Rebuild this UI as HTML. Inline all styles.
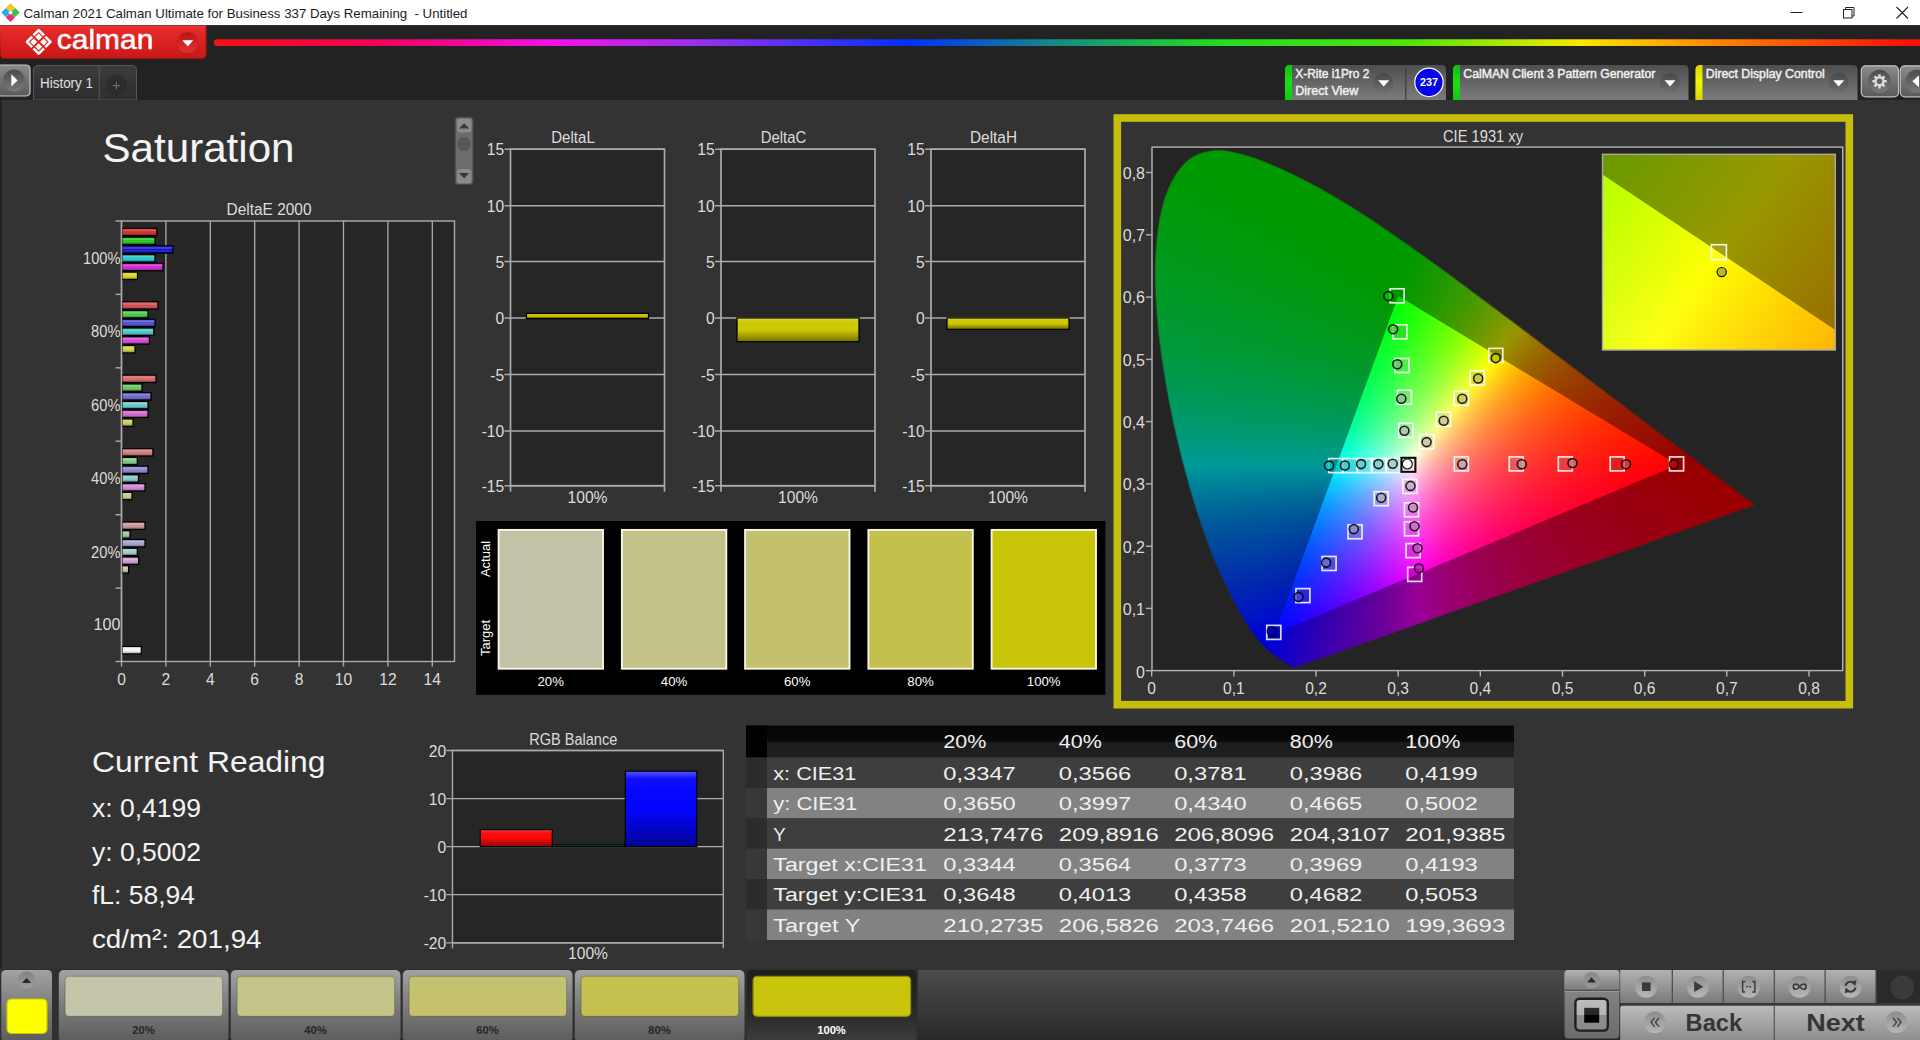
<!DOCTYPE html>
<html><head><meta charset="utf-8"><title>Calman</title><style>html,body{margin:0;padding:0;background:#333;width:1920px;height:1040px;overflow:hidden}
svg{position:absolute;left:0;top:0}
text{font-family:"Liberation Sans",sans-serif}
#cie i,#inset i{display:block;height:2px}
</style></head><body>
<svg width="1920" height="1040" viewBox="0 0 1920 1040"><defs><linearGradient id="gRed" x1="0" y1="0" x2="0" y2="1"><stop offset="0" stop-color="#f04040"/><stop offset="0.08" stop-color="#e62c2c"/><stop offset="0.5" stop-color="#dc2020"/><stop offset="1" stop-color="#c81818"/></linearGradient><linearGradient id="gRedC" x1="0" y1="0" x2="0" y2="1"><stop offset="0" stop-color="#b81414"/><stop offset="1" stop-color="#e03434"/></linearGradient><linearGradient id="gRainbow" x1="0" y1="0" x2="1" y2="0"><stop offset="0" stop-color="#f41414"/><stop offset="0.096" stop-color="#f00058"/><stop offset="0.201" stop-color="#f410f0"/><stop offset="0.285" stop-color="#9830f0"/><stop offset="0.405" stop-color="#0030ff"/><stop offset="0.489" stop-color="#148888"/><stop offset="0.583" stop-color="#20dc20"/><stop offset="0.698" stop-color="#50e608"/><stop offset="0.798" stop-color="#fae600"/><stop offset="0.881" stop-color="#ff8200"/><stop offset="0.986" stop-color="#f81408"/><stop offset="1" stop-color="#f81008"/></linearGradient><linearGradient id="gBtn" x1="0" y1="0" x2="0" y2="1"><stop offset="0" stop-color="#8a8a8a"/><stop offset="1" stop-color="#5a5a5a"/></linearGradient><linearGradient id="gBtnC" x1="0" y1="0" x2="0" y2="1"><stop offset="0" stop-color="#4c4c4c"/><stop offset="1" stop-color="#7a7a7a"/></linearGradient><linearGradient id="gTab" x1="0" y1="0" x2="0" y2="1"><stop offset="0" stop-color="#3c3c3c"/><stop offset="1" stop-color="#2e2e2e"/></linearGradient><linearGradient id="gWid" x1="0" y1="0" x2="0" y2="1"><stop offset="0" stop-color="#4e4e4e"/><stop offset="1" stop-color="#7c7c7c"/></linearGradient><linearGradient id="gWidC" x1="0" y1="0" x2="0" y2="1"><stop offset="0" stop-color="#484848"/><stop offset="1" stop-color="#6e6e6e"/></linearGradient><linearGradient id="gGreen" x1="0" y1="0" x2="0" y2="1"><stop offset="0" stop-color="#10c010"/><stop offset="0.5" stop-color="#18e018"/><stop offset="1" stop-color="#10c810"/></linearGradient><linearGradient id="gYel" x1="0" y1="0" x2="0" y2="1"><stop offset="0" stop-color="#d8d800"/><stop offset="0.5" stop-color="#f4f400"/><stop offset="1" stop-color="#d8d800"/></linearGradient><linearGradient id="gGlossH" x1="0" y1="0" x2="0" y2="1"><stop offset="0" stop-color="#fff" stop-opacity="0.05"/><stop offset="0.25" stop-color="#fff" stop-opacity="0.25"/><stop offset="0.5" stop-color="#fff" stop-opacity="0.0"/><stop offset="1" stop-color="#000" stop-opacity="0.38"/></linearGradient><linearGradient id="gGlossV" x1="0" y1="0" x2="0" y2="1"><stop offset="0" stop-color="#fff" stop-opacity="0.3"/><stop offset="0.1" stop-color="#fff" stop-opacity="0.04"/><stop offset="0.5" stop-color="#000" stop-opacity="0.0"/><stop offset="1" stop-color="#000" stop-opacity="0.42"/></linearGradient><linearGradient id="gHdr" x1="0" y1="0" x2="0" y2="1"><stop offset="0" stop-color="#050505"/><stop offset="0.5" stop-color="#0a0a0a"/><stop offset="0.52" stop-color="#1c1c1c"/><stop offset="1" stop-color="#202020"/></linearGradient><linearGradient id="gSw" x1="0" y1="0" x2="0" y2="1"><stop offset="0" stop-color="#a2a2a2"/><stop offset="0.5" stop-color="#7c7c7c"/><stop offset="1" stop-color="#5c5c5c"/></linearGradient><linearGradient id="gSwSel" x1="0" y1="0" x2="0" y2="1"><stop offset="0" stop-color="#1f1f1f"/><stop offset="0.6" stop-color="#2a2a2a"/><stop offset="1" stop-color="#3e3e3e"/></linearGradient><linearGradient id="gCtl" x1="0" y1="0" x2="0" y2="1"><stop offset="0" stop-color="#b2b2b2"/><stop offset="1" stop-color="#7a7a7a"/></linearGradient><linearGradient id="gCtl2" x1="0" y1="0" x2="0" y2="1"><stop offset="0" stop-color="#bcbcbc"/><stop offset="1" stop-color="#868686"/></linearGradient><linearGradient id="gCtlC" x1="0" y1="0" x2="0" y2="1"><stop offset="0" stop-color="#8c8c8c"/><stop offset="1" stop-color="#b8b8b8"/></linearGradient><linearGradient id="gBar" x1="0" y1="0" x2="1" y2="0"><stop offset="0" stop-color="#3a3a3a"/><stop offset="1" stop-color="#4a4a4a"/></linearGradient><linearGradient id="gBarV" x1="0" y1="0" x2="0" y2="1"><stop offset="0" stop-color="#4b4b4b"/><stop offset="0.5" stop-color="#3a3a3a"/><stop offset="1" stop-color="#292929"/></linearGradient><linearGradient id="gIco" x1="0" y1="0" x2="0" y2="1"><stop offset="0" stop-color="#bcbcbc"/><stop offset="0.5" stop-color="#b4b4b4"/><stop offset="0.5" stop-color="#8e8e8e"/><stop offset="1" stop-color="#8a8a8a"/></linearGradient><linearGradient id="gIco2" x1="0" y1="0" x2="0" y2="1"><stop offset="0" stop-color="#2c2c2c"/><stop offset="0.5" stop-color="#262626"/><stop offset="0.5" stop-color="#000"/><stop offset="1" stop-color="#000"/></linearGradient><linearGradient id="gPanLo" x1="0" y1="0" x2="0" y2="1"><stop offset="0" stop-color="#8e8e8e"/><stop offset="1" stop-color="#6a6a6a"/></linearGradient><linearGradient id="gUpC" x1="0" y1="0" x2="0" y2="1"><stop offset="0" stop-color="#787878"/><stop offset="1" stop-color="#a4a4a4"/></linearGradient></defs>
<rect x="0.0" y="0.0" width="1920.0" height="25.3" fill="#fff"/>
<rect x="0.0" y="25.3" width="1920.0" height="1.2" fill="#161616"/>
<path d="M10.5 3.2 L15.1 7.8 L10.5 12.4 L5.9 7.8Z" fill="#f7c325"/>
<path d="M5.9 8.0 L10.5 12.6 L5.9 17.2 L1.3 12.6Z" fill="#2ea7e6"/>
<path d="M15.1 8.0 L19.7 12.6 L15.1 17.2 L10.5 12.6Z" fill="#33c24a"/>
<path d="M10.5 12.8 L15.1 17.4 L10.5 22.0 L5.9 17.4Z" fill="#e8316e"/>
<path d="M10.5 10.4 L12.7 12.6 L10.5 14.8 L8.3 12.6Z" fill="#fff"/>
<text x="23.5" y="17.7" font-size="12.4" fill="#1c1c1c" textLength="444.0" lengthAdjust="spacingAndGlyphs" xml:space="preserve" style="white-space:pre">Calman 2021 Calman Ultimate for Business 337 Days Remaining  - Untitled</text>
<line x1="1790.5" y1="12.5" x2="1802.5" y2="12.5" stroke="#222" stroke-width="1.0"/>
<rect x="1843.5" y="9.5" width="8.5" height="8.5" fill="#fff" stroke="#222" stroke-width="1.0"/>
<path d="M1845.5 9.5 V7.5 H1854 V16 H1852" fill="none" stroke="#222" stroke-width="1.0"/>
<path d="M1896.5 7 L1908 18.5 M1908 7 L1896.5 18.5" fill="none" stroke="#222" stroke-width="1.1"/>
<rect x="0.0" y="26.5" width="1920.0" height="73.5" fill="#222"/>
<path d="M0 25.4 H206.3 V54 Q206.3 58.6 201.5 58.6 H4.5 Q0.3 58.6 0.3 54Z" fill="url(#gRed)"/>
<path d="M206 26 V54 Q206 58.3 201.5 58.3 H4.5 Q0.5 58.3 0.5 54" fill="none" stroke="#a81212" stroke-width="0.8"/>
<path d="M38.70 33.50 l3.50 3.50 l-3.50 3.50 l-3.50 -3.50z M33.80 38.40 l3.50 3.50 l-3.50 3.50 l-3.50 -3.50z M43.60 38.40 l3.50 3.50 l-3.50 3.50 l-3.50 -3.50z M38.70 43.30 l3.50 3.50 l-3.50 3.50 l-3.50 -3.50z" fill="#fff"/>
<path d="M33.40 35.40 L38.70 30.10 L44.00 35.40 M33.40 48.40 L38.70 53.70 L44.00 48.40 M32.20 36.60 L26.90 41.90 L32.20 47.20 M45.20 36.60 L50.50 41.90 L45.20 47.20" fill="none" stroke="#fff" stroke-width="2.6" stroke-linejoin="round"/>
<text x="56.8" y="48.8" font-size="27.0" fill="#fff" textLength="96.5" lengthAdjust="spacingAndGlyphs" stroke="#fff" stroke-width="0.45">calman</text>
<circle cx="187.5" cy="42.5" r="10.5" fill="url(#gRedC)"/>
<path d="M182.3 40.3 H193.3 L187.8 46.6Z" fill="#fff"/>
<rect x="214.0" y="39.2" width="1712.0" height="6.8" fill="url(#gRainbow)" rx="3.0"/>
<path d="M-1 65 H25.5 Q30 65 30 69.5 V91.5 Q30 96 25.5 96 H-1Z" fill="url(#gBtn)" stroke="#c8c8c8" stroke-width="1.2"/>
<circle cx="14.0" cy="80.5" r="11.0" fill="url(#gBtnC)"/>
<path d="M11.3 74.3 L17.6 80.4 L11.3 86.5Z" fill="#fff"/>
<path d="M33.5 100 V70 Q33.5 65.5 38 65.5 H132 Q136.5 65.5 136.5 70 V100Z" fill="url(#gTab)" stroke="#565656" stroke-width="1.0"/>
<line x1="99.3" y1="66.0" x2="99.3" y2="100.0" stroke="#555" stroke-width="1.0"/>
<text x="40.0" y="88.3" font-size="14.3" fill="#e0e0e0" textLength="53.0" lengthAdjust="spacingAndGlyphs">History 1</text>
<circle cx="116.3" cy="85.0" r="10.5" fill="#2c2c2c"/>
<path d="M112.8 85.7 H120 M116.4 82 V89.4" fill="none" stroke="#777" stroke-width="1.0"/>
<path d="M1285.0 100 V69.5 Q1285.0 65 1289.5 65 H1441.5 Q1446.0 65 1446.0 69.5 V100Z" fill="url(#gWid)"/>
<path d="M1285.0 100 V69.5 Q1285.0 65 1289.5 65 H1292.0 V100Z" fill="url(#gGreen)"/>
<circle cx="1383.7" cy="82.7" r="10.0" fill="url(#gWidC)"/>
<path d="M1378.2 80.3 h11 l-5.5 6.3Z" fill="#fff"/>
<text x="1295.3" y="78.3" font-size="12.1" fill="#f0f0f0" textLength="74.0" lengthAdjust="spacingAndGlyphs" stroke="#f0f0f0" stroke-width="0.45">X-Rite i1Pro 2</text>
<text x="1295.3" y="94.7" font-size="12.1" fill="#f0f0f0" textLength="63.0" lengthAdjust="spacingAndGlyphs" stroke="#f0f0f0" stroke-width="0.45">Direct View</text>
<line x1="1405.8" y1="68.0" x2="1405.8" y2="100.0" stroke="#3c3c3c" stroke-width="1.2"/>
<circle cx="1429.0" cy="82.3" r="14.2" fill="#0404e6" stroke="#fff" stroke-width="1.2"/>
<text x="1429.0" y="86.2" font-size="10.8" fill="#fff" text-anchor="middle" font-weight="bold">237</text>
<path d="M1453.0 100 V69.5 Q1453.0 65 1457.5 65 H1684.0 Q1688.5 65 1688.5 69.5 V100Z" fill="url(#gWid)"/>
<path d="M1453.0 100 V69.5 Q1453.0 65 1457.5 65 H1460.0 V100Z" fill="url(#gGreen)"/>
<circle cx="1670.0" cy="82.7" r="10.0" fill="url(#gWidC)"/>
<path d="M1664.5 80.3 h11 l-5.5 6.3Z" fill="#fff"/>
<text x="1463.3" y="78.3" font-size="12.1" fill="#f0f0f0" textLength="192.0" lengthAdjust="spacingAndGlyphs" stroke="#f0f0f0" stroke-width="0.45">CalMAN Client 3 Pattern Generator</text>
<path d="M1695.5 100 V69.5 Q1695.5 65 1700.0 65 H1853.0 Q1857.5 65 1857.5 69.5 V100Z" fill="url(#gWid)"/>
<path d="M1695.5 100 V69.5 Q1695.5 65 1700.0 65 H1702.5 V100Z" fill="url(#gYel)"/>
<circle cx="1838.7" cy="82.7" r="10.0" fill="url(#gWidC)"/>
<path d="M1833.2 80.3 h11 l-5.5 6.3Z" fill="#fff"/>
<text x="1705.8" y="78.3" font-size="12.1" fill="#f0f0f0" textLength="119.0" lengthAdjust="spacingAndGlyphs" stroke="#f0f0f0" stroke-width="0.45">Direct Display Control</text>
<rect x="1861.3" y="65.8" width="37.2" height="31.0" fill="url(#gBtn)" rx="4.5" stroke="#c4c4c4" stroke-width="1.2"/>
<circle cx="1879.5" cy="81.3" r="11.5" fill="url(#gBtnC)"/>
<path d="M1886.59 80.06 L1886.59 82.54 L1884.56 82.51 L1883.93 84.02 L1885.39 85.44 L1883.64 87.19 L1882.22 85.73 L1880.71 86.36 L1880.74 88.39 L1878.26 88.39 L1878.29 86.36 L1876.78 85.73 L1875.36 87.19 L1873.61 85.44 L1875.07 84.02 L1874.44 82.51 L1872.41 82.54 L1872.41 80.06 L1874.44 80.09 L1875.07 78.58 L1873.61 77.16 L1875.36 75.41 L1876.78 76.87 L1878.29 76.24 L1878.26 74.21 L1880.74 74.21 L1880.71 76.24 L1882.22 76.87 L1883.64 75.41 L1885.39 77.16 L1883.93 78.58 L1884.56 80.09Z M1876.70 81.30 a2.80 2.80 0 1 0 5.60 0 a2.80 2.80 0 1 0 -5.60 0Z" fill="#ddd" fill-rule="evenodd"/>
<rect x="1900.3" y="65.8" width="30.0" height="31.0" fill="url(#gBtn)" rx="4.5" stroke="#c4c4c4" stroke-width="1.2"/>
<circle cx="1917.0" cy="81.3" r="11.5" fill="url(#gBtnC)"/>
<path d="M1919 75.3 L1912.3 81.3 L1919 87.3Z" fill="#fff"/>
<rect x="0.0" y="100.0" width="1920.0" height="868.5" fill="#333"/>
<rect x="0.0" y="100.0" width="1.5" height="868.5" fill="#1e1e1e"/>
<text x="102.5" y="162.0" font-size="40.6" fill="#f4f4f4" textLength="192.0" lengthAdjust="spacingAndGlyphs">Saturation</text>
<text x="92.0" y="771.5" font-size="30.4" fill="#f4f4f4" textLength="233.5" lengthAdjust="spacingAndGlyphs">Current Reading</text>
<text x="92.0" y="817.0" font-size="26.5" fill="#f4f4f4" textLength="109.0" lengthAdjust="spacingAndGlyphs">x: 0,4199</text>
<text x="92.0" y="860.5" font-size="26.5" fill="#f4f4f4" textLength="109.0" lengthAdjust="spacingAndGlyphs">y: 0,5002</text>
<text x="92.0" y="904.0" font-size="26.5" fill="#f4f4f4" textLength="103.0" lengthAdjust="spacingAndGlyphs">fL: 58,94</text>
<text x="92.0" y="947.5" font-size="26.5" fill="#f4f4f4" textLength="169.5" lengthAdjust="spacingAndGlyphs">cd/m²: 201,94</text>
<rect x="455.2" y="117.2" width="17.8" height="67.4" fill="#6c6c6c" rx="3.0" stroke="#484848" stroke-width="1.0"/>
<rect x="457.0" y="118.7" width="14.4" height="13.8" fill="#8a8a8a" rx="3.0"/>
<path d="M459 128.6 L464.1 123.3 L469.2 128.6Z" fill="#383838"/>
<circle cx="464.0" cy="144.0" r="7.0" fill="#585858"/>
<rect x="457.0" y="169.0" width="14.4" height="14.3" fill="#8a8a8a" rx="3.0"/>
<path d="M459 173 L464.1 178.4 L469.2 173Z" fill="#383838"/>
<rect x="121.5" y="221.0" width="333.0" height="440.5" fill="#262626"/>
<text x="269.0" y="215.0" font-size="15.6" fill="#dcdcdc" text-anchor="middle" textLength="85.0" lengthAdjust="spacingAndGlyphs">DeltaE 2000</text>
<line x1="165.9" y1="221.0" x2="165.9" y2="661.5" stroke="#ababab" stroke-width="1.3"/>
<line x1="210.3" y1="221.0" x2="210.3" y2="661.5" stroke="#ababab" stroke-width="1.3"/>
<line x1="254.7" y1="221.0" x2="254.7" y2="661.5" stroke="#ababab" stroke-width="1.3"/>
<line x1="299.1" y1="221.0" x2="299.1" y2="661.5" stroke="#ababab" stroke-width="1.3"/>
<line x1="343.5" y1="221.0" x2="343.5" y2="661.5" stroke="#ababab" stroke-width="1.3"/>
<line x1="387.9" y1="221.0" x2="387.9" y2="661.5" stroke="#ababab" stroke-width="1.3"/>
<line x1="432.3" y1="221.0" x2="432.3" y2="661.5" stroke="#ababab" stroke-width="1.3"/>
<rect x="121.5" y="221.0" width="333.0" height="440.5" fill="none" stroke="#ababab" stroke-width="1.4"/>
<line x1="115.5" y1="221.0" x2="121.5" y2="221.0" stroke="#ababab" stroke-width="1.4"/>
<line x1="115.5" y1="294.4" x2="121.5" y2="294.4" stroke="#ababab" stroke-width="1.4"/>
<line x1="115.5" y1="367.8" x2="121.5" y2="367.8" stroke="#ababab" stroke-width="1.4"/>
<line x1="115.5" y1="441.2" x2="121.5" y2="441.2" stroke="#ababab" stroke-width="1.4"/>
<line x1="115.5" y1="514.7" x2="121.5" y2="514.7" stroke="#ababab" stroke-width="1.4"/>
<line x1="115.5" y1="588.1" x2="121.5" y2="588.1" stroke="#ababab" stroke-width="1.4"/>
<line x1="115.5" y1="661.5" x2="121.5" y2="661.5" stroke="#ababab" stroke-width="1.4"/>
<line x1="121.5" y1="661.5" x2="121.5" y2="666.5" stroke="#ababab" stroke-width="1.4"/>
<text x="121.5" y="684.5" font-size="15.6" fill="#dcdcdc" text-anchor="middle">0</text>
<line x1="165.9" y1="661.5" x2="165.9" y2="666.5" stroke="#ababab" stroke-width="1.4"/>
<text x="165.9" y="684.5" font-size="15.6" fill="#dcdcdc" text-anchor="middle">2</text>
<line x1="210.3" y1="661.5" x2="210.3" y2="666.5" stroke="#ababab" stroke-width="1.4"/>
<text x="210.3" y="684.5" font-size="15.6" fill="#dcdcdc" text-anchor="middle">4</text>
<line x1="254.7" y1="661.5" x2="254.7" y2="666.5" stroke="#ababab" stroke-width="1.4"/>
<text x="254.7" y="684.5" font-size="15.6" fill="#dcdcdc" text-anchor="middle">6</text>
<line x1="299.1" y1="661.5" x2="299.1" y2="666.5" stroke="#ababab" stroke-width="1.4"/>
<text x="299.1" y="684.5" font-size="15.6" fill="#dcdcdc" text-anchor="middle">8</text>
<line x1="343.5" y1="661.5" x2="343.5" y2="666.5" stroke="#ababab" stroke-width="1.4"/>
<text x="343.5" y="684.5" font-size="15.6" fill="#dcdcdc" text-anchor="middle">10</text>
<line x1="387.9" y1="661.5" x2="387.9" y2="666.5" stroke="#ababab" stroke-width="1.4"/>
<text x="387.9" y="684.5" font-size="15.6" fill="#dcdcdc" text-anchor="middle">12</text>
<line x1="432.3" y1="661.5" x2="432.3" y2="666.5" stroke="#ababab" stroke-width="1.4"/>
<text x="432.3" y="684.5" font-size="15.6" fill="#dcdcdc" text-anchor="middle">14</text>
<text x="83.0" y="263.8" font-size="15.6" fill="#dcdcdc" textLength="37.5" lengthAdjust="spacingAndGlyphs">100%</text>
<text x="91.1" y="337.2" font-size="15.6" fill="#dcdcdc" textLength="29.4" lengthAdjust="spacingAndGlyphs">80%</text>
<text x="91.1" y="410.6" font-size="15.6" fill="#dcdcdc" textLength="29.4" lengthAdjust="spacingAndGlyphs">60%</text>
<text x="91.1" y="484.1" font-size="15.6" fill="#dcdcdc" textLength="29.4" lengthAdjust="spacingAndGlyphs">40%</text>
<text x="91.1" y="557.5" font-size="15.6" fill="#dcdcdc" textLength="29.4" lengthAdjust="spacingAndGlyphs">20%</text>
<text x="93.5" y="630.1" font-size="15.6" fill="#dcdcdc" textLength="27.0" lengthAdjust="spacingAndGlyphs">100</text>
<rect x="122.0" y="228.3" width="34.9" height="7.4" fill="#d42222" stroke="#000" stroke-width="1.3"/>
<rect x="122.6" y="228.9" width="33.7" height="6.2" fill="url(#gGlossH)"/>
<rect x="122.0" y="237.1" width="33.0" height="7.4" fill="#1ec81e" stroke="#000" stroke-width="1.3"/>
<rect x="122.6" y="237.7" width="31.8" height="6.2" fill="url(#gGlossH)"/>
<rect x="122.0" y="245.8" width="51.0" height="7.4" fill="#1414d0" stroke="#000" stroke-width="1.3"/>
<rect x="122.6" y="246.4" width="49.8" height="6.2" fill="url(#gGlossH)"/>
<rect x="122.0" y="254.6" width="33.0" height="7.4" fill="#1ec8c8" stroke="#000" stroke-width="1.3"/>
<rect x="122.6" y="255.2" width="31.8" height="6.2" fill="url(#gGlossH)"/>
<rect x="122.0" y="263.3" width="41.0" height="7.4" fill="#d41ed4" stroke="#000" stroke-width="1.3"/>
<rect x="122.6" y="263.9" width="39.8" height="6.2" fill="url(#gGlossH)"/>
<rect x="122.0" y="272.1" width="15.5" height="7.4" fill="#d4d41e" stroke="#000" stroke-width="1.3"/>
<rect x="122.6" y="272.7" width="14.3" height="6.2" fill="url(#gGlossH)"/>
<rect x="122.0" y="301.7" width="36.0" height="7.4" fill="#d44a4a" stroke="#000" stroke-width="1.3"/>
<rect x="122.6" y="302.3" width="34.8" height="6.2" fill="url(#gGlossH)"/>
<rect x="122.0" y="310.5" width="26.0" height="7.4" fill="#46c846" stroke="#000" stroke-width="1.3"/>
<rect x="122.6" y="311.1" width="24.8" height="6.2" fill="url(#gGlossH)"/>
<rect x="122.0" y="319.2" width="33.0" height="7.4" fill="#4a4ad0" stroke="#000" stroke-width="1.3"/>
<rect x="122.6" y="319.8" width="31.8" height="6.2" fill="url(#gGlossH)"/>
<rect x="122.0" y="328.0" width="31.8" height="7.4" fill="#46c8c8" stroke="#000" stroke-width="1.3"/>
<rect x="122.6" y="328.6" width="30.6" height="6.2" fill="url(#gGlossH)"/>
<rect x="122.0" y="336.7" width="27.4" height="7.4" fill="#d446d4" stroke="#000" stroke-width="1.3"/>
<rect x="122.6" y="337.3" width="26.2" height="6.2" fill="url(#gGlossH)"/>
<rect x="122.0" y="345.5" width="13.0" height="7.4" fill="#d0d046" stroke="#000" stroke-width="1.3"/>
<rect x="122.6" y="346.1" width="11.8" height="6.2" fill="url(#gGlossH)"/>
<rect x="122.0" y="375.1" width="34.0" height="7.4" fill="#d46464" stroke="#000" stroke-width="1.3"/>
<rect x="122.6" y="375.7" width="32.8" height="6.2" fill="url(#gGlossH)"/>
<rect x="122.0" y="383.9" width="20.0" height="7.4" fill="#64c864" stroke="#000" stroke-width="1.3"/>
<rect x="122.6" y="384.5" width="18.8" height="6.2" fill="url(#gGlossH)"/>
<rect x="122.0" y="392.6" width="29.0" height="7.4" fill="#6868d0" stroke="#000" stroke-width="1.3"/>
<rect x="122.6" y="393.2" width="27.8" height="6.2" fill="url(#gGlossH)"/>
<rect x="122.0" y="401.4" width="26.0" height="7.4" fill="#64c8c8" stroke="#000" stroke-width="1.3"/>
<rect x="122.6" y="402.0" width="24.8" height="6.2" fill="url(#gGlossH)"/>
<rect x="122.0" y="410.1" width="26.0" height="7.4" fill="#d464d4" stroke="#000" stroke-width="1.3"/>
<rect x="122.6" y="410.7" width="24.8" height="6.2" fill="url(#gGlossH)"/>
<rect x="122.0" y="418.9" width="11.0" height="7.4" fill="#cccc64" stroke="#000" stroke-width="1.3"/>
<rect x="122.6" y="419.5" width="9.8" height="6.2" fill="url(#gGlossH)"/>
<rect x="122.0" y="448.6" width="30.9" height="7.4" fill="#d07878" stroke="#000" stroke-width="1.3"/>
<rect x="122.6" y="449.2" width="29.7" height="6.2" fill="url(#gGlossH)"/>
<rect x="122.0" y="457.3" width="15.3" height="7.4" fill="#80c880" stroke="#000" stroke-width="1.3"/>
<rect x="122.6" y="457.9" width="14.1" height="6.2" fill="url(#gGlossH)"/>
<rect x="122.0" y="466.1" width="26.0" height="7.4" fill="#8484d0" stroke="#000" stroke-width="1.3"/>
<rect x="122.6" y="466.7" width="24.8" height="6.2" fill="url(#gGlossH)"/>
<rect x="122.0" y="474.8" width="16.5" height="7.4" fill="#84c8c8" stroke="#000" stroke-width="1.3"/>
<rect x="122.6" y="475.4" width="15.3" height="6.2" fill="url(#gGlossH)"/>
<rect x="122.0" y="483.6" width="23.0" height="7.4" fill="#d484d4" stroke="#000" stroke-width="1.3"/>
<rect x="122.6" y="484.2" width="21.8" height="6.2" fill="url(#gGlossH)"/>
<rect x="122.0" y="492.3" width="10.0" height="7.4" fill="#c8c884" stroke="#000" stroke-width="1.3"/>
<rect x="122.6" y="492.9" width="8.8" height="6.2" fill="url(#gGlossH)"/>
<rect x="122.0" y="522.0" width="23.0" height="7.4" fill="#cc9494" stroke="#000" stroke-width="1.3"/>
<rect x="122.6" y="522.6" width="21.8" height="6.2" fill="url(#gGlossH)"/>
<rect x="122.0" y="530.7" width="8.0" height="7.4" fill="#98c898" stroke="#000" stroke-width="1.3"/>
<rect x="122.6" y="531.3" width="6.8" height="6.2" fill="url(#gGlossH)"/>
<rect x="122.0" y="539.5" width="23.0" height="7.4" fill="#a0a0d0" stroke="#000" stroke-width="1.3"/>
<rect x="122.6" y="540.1" width="21.8" height="6.2" fill="url(#gGlossH)"/>
<rect x="122.0" y="548.2" width="15.3" height="7.4" fill="#a0c8c8" stroke="#000" stroke-width="1.3"/>
<rect x="122.6" y="548.8" width="14.1" height="6.2" fill="url(#gGlossH)"/>
<rect x="122.0" y="557.0" width="16.7" height="7.4" fill="#d0a0d0" stroke="#000" stroke-width="1.3"/>
<rect x="122.6" y="557.6" width="15.5" height="6.2" fill="url(#gGlossH)"/>
<rect x="122.0" y="565.7" width="6.6" height="7.4" fill="#c4c4a0" stroke="#000" stroke-width="1.3"/>
<rect x="122.6" y="566.3" width="5.4" height="6.2" fill="url(#gGlossH)"/>
<rect x="122.0" y="646.5" width="19.3" height="7.4" fill="#f4f4f4" stroke="#000" stroke-width="1.3"/>
<rect x="122.6" y="647.1" width="18.1" height="6.2" fill="url(#gGlossH)"/>
<line x1="121.5" y1="221.0" x2="121.5" y2="661.5" stroke="#ababab" stroke-width="1.4"/>
<rect x="510.5" y="149.2" width="154.0" height="336.5" fill="#262626"/>
<text x="573.0" y="143.0" font-size="15.6" fill="#dcdcdc" text-anchor="middle" textLength="43.5" lengthAdjust="spacingAndGlyphs">DeltaL</text>
<line x1="504.5" y1="485.7" x2="664.5" y2="485.7" stroke="#ababab" stroke-width="1.5"/>
<text x="504.2" y="491.9" font-size="15.6" fill="#dcdcdc" text-anchor="end">-15</text>
<line x1="504.5" y1="431.0" x2="664.5" y2="431.0" stroke="#ababab" stroke-width="1.5"/>
<text x="504.2" y="437.2" font-size="15.6" fill="#dcdcdc" text-anchor="end">-10</text>
<line x1="504.5" y1="374.5" x2="664.5" y2="374.5" stroke="#ababab" stroke-width="1.5"/>
<text x="504.2" y="380.7" font-size="15.6" fill="#dcdcdc" text-anchor="end">-5</text>
<line x1="504.5" y1="318.0" x2="664.5" y2="318.0" stroke="#ababab" stroke-width="1.5"/>
<text x="504.2" y="324.2" font-size="15.6" fill="#dcdcdc" text-anchor="end">0</text>
<line x1="504.5" y1="261.6" x2="664.5" y2="261.6" stroke="#ababab" stroke-width="1.5"/>
<text x="504.2" y="267.8" font-size="15.6" fill="#dcdcdc" text-anchor="end">5</text>
<line x1="504.5" y1="205.7" x2="664.5" y2="205.7" stroke="#ababab" stroke-width="1.5"/>
<text x="504.2" y="211.9" font-size="15.6" fill="#dcdcdc" text-anchor="end">10</text>
<line x1="504.5" y1="149.2" x2="664.5" y2="149.2" stroke="#ababab" stroke-width="1.5"/>
<text x="504.2" y="155.4" font-size="15.6" fill="#dcdcdc" text-anchor="end">15</text>
<rect x="510.5" y="149.2" width="154.0" height="336.5" fill="none" stroke="#ababab" stroke-width="1.7"/>
<line x1="510.5" y1="485.7" x2="510.5" y2="491.7" stroke="#ababab" stroke-width="1.7"/>
<line x1="664.5" y1="485.7" x2="664.5" y2="491.7" stroke="#ababab" stroke-width="1.7"/>
<text x="587.5" y="503.0" font-size="15.6" fill="#dcdcdc" text-anchor="middle">100%</text>
<rect x="526.5" y="313.4" width="122.0" height="5.2" fill="#cfca02" stroke="#000" stroke-width="1.3"/>
<rect x="527.1" y="314.0" width="120.8" height="4.0" fill="url(#gGlossV)"/>
<rect x="721.0" y="149.2" width="154.0" height="336.5" fill="#262626"/>
<text x="783.5" y="143.0" font-size="15.6" fill="#dcdcdc" text-anchor="middle" textLength="45.5" lengthAdjust="spacingAndGlyphs">DeltaC</text>
<line x1="715.0" y1="485.7" x2="875.0" y2="485.7" stroke="#ababab" stroke-width="1.5"/>
<text x="714.7" y="491.9" font-size="15.6" fill="#dcdcdc" text-anchor="end">-15</text>
<line x1="715.0" y1="431.0" x2="875.0" y2="431.0" stroke="#ababab" stroke-width="1.5"/>
<text x="714.7" y="437.2" font-size="15.6" fill="#dcdcdc" text-anchor="end">-10</text>
<line x1="715.0" y1="374.5" x2="875.0" y2="374.5" stroke="#ababab" stroke-width="1.5"/>
<text x="714.7" y="380.7" font-size="15.6" fill="#dcdcdc" text-anchor="end">-5</text>
<line x1="715.0" y1="318.0" x2="875.0" y2="318.0" stroke="#ababab" stroke-width="1.5"/>
<text x="714.7" y="324.2" font-size="15.6" fill="#dcdcdc" text-anchor="end">0</text>
<line x1="715.0" y1="261.6" x2="875.0" y2="261.6" stroke="#ababab" stroke-width="1.5"/>
<text x="714.7" y="267.8" font-size="15.6" fill="#dcdcdc" text-anchor="end">5</text>
<line x1="715.0" y1="205.7" x2="875.0" y2="205.7" stroke="#ababab" stroke-width="1.5"/>
<text x="714.7" y="211.9" font-size="15.6" fill="#dcdcdc" text-anchor="end">10</text>
<line x1="715.0" y1="149.2" x2="875.0" y2="149.2" stroke="#ababab" stroke-width="1.5"/>
<text x="714.7" y="155.4" font-size="15.6" fill="#dcdcdc" text-anchor="end">15</text>
<rect x="721.0" y="149.2" width="154.0" height="336.5" fill="none" stroke="#ababab" stroke-width="1.7"/>
<line x1="721.0" y1="485.7" x2="721.0" y2="491.7" stroke="#ababab" stroke-width="1.7"/>
<line x1="875.0" y1="485.7" x2="875.0" y2="491.7" stroke="#ababab" stroke-width="1.7"/>
<text x="798.0" y="503.0" font-size="15.6" fill="#dcdcdc" text-anchor="middle">100%</text>
<rect x="737.0" y="318.0" width="122.0" height="23.7" fill="#cfca02" stroke="#000" stroke-width="1.3"/>
<rect x="737.6" y="318.6" width="120.8" height="22.5" fill="url(#gGlossV)"/>
<rect x="931.0" y="149.2" width="154.0" height="336.5" fill="#262626"/>
<text x="993.5" y="143.0" font-size="15.6" fill="#dcdcdc" text-anchor="middle" textLength="47.0" lengthAdjust="spacingAndGlyphs">DeltaH</text>
<line x1="925.0" y1="485.7" x2="1085.0" y2="485.7" stroke="#ababab" stroke-width="1.5"/>
<text x="924.7" y="491.9" font-size="15.6" fill="#dcdcdc" text-anchor="end">-15</text>
<line x1="925.0" y1="431.0" x2="1085.0" y2="431.0" stroke="#ababab" stroke-width="1.5"/>
<text x="924.7" y="437.2" font-size="15.6" fill="#dcdcdc" text-anchor="end">-10</text>
<line x1="925.0" y1="374.5" x2="1085.0" y2="374.5" stroke="#ababab" stroke-width="1.5"/>
<text x="924.7" y="380.7" font-size="15.6" fill="#dcdcdc" text-anchor="end">-5</text>
<line x1="925.0" y1="318.0" x2="1085.0" y2="318.0" stroke="#ababab" stroke-width="1.5"/>
<text x="924.7" y="324.2" font-size="15.6" fill="#dcdcdc" text-anchor="end">0</text>
<line x1="925.0" y1="261.6" x2="1085.0" y2="261.6" stroke="#ababab" stroke-width="1.5"/>
<text x="924.7" y="267.8" font-size="15.6" fill="#dcdcdc" text-anchor="end">5</text>
<line x1="925.0" y1="205.7" x2="1085.0" y2="205.7" stroke="#ababab" stroke-width="1.5"/>
<text x="924.7" y="211.9" font-size="15.6" fill="#dcdcdc" text-anchor="end">10</text>
<line x1="925.0" y1="149.2" x2="1085.0" y2="149.2" stroke="#ababab" stroke-width="1.5"/>
<text x="924.7" y="155.4" font-size="15.6" fill="#dcdcdc" text-anchor="end">15</text>
<rect x="931.0" y="149.2" width="154.0" height="336.5" fill="none" stroke="#ababab" stroke-width="1.7"/>
<line x1="931.0" y1="485.7" x2="931.0" y2="491.7" stroke="#ababab" stroke-width="1.7"/>
<line x1="1085.0" y1="485.7" x2="1085.0" y2="491.7" stroke="#ababab" stroke-width="1.7"/>
<text x="1008.0" y="503.0" font-size="15.6" fill="#dcdcdc" text-anchor="middle">100%</text>
<rect x="947.0" y="318.0" width="122.0" height="11.3" fill="#cfca02" stroke="#000" stroke-width="1.3"/>
<rect x="947.6" y="318.6" width="120.8" height="10.1" fill="url(#gGlossV)"/>
<rect x="476.0" y="521.0" width="629.3" height="173.8" fill="#000"/>
<rect x="498.6" y="529.9" width="104.4" height="138.8" fill="#c2c3a6" stroke="#f6f6e6" stroke-width="1.9"/>
<text x="550.7" y="686.2" font-size="13.2" fill="#fff" text-anchor="middle">20%</text>
<rect x="621.9" y="529.9" width="104.4" height="138.8" fill="#c3c387" stroke="#f6f6e6" stroke-width="1.9"/>
<text x="674.0" y="686.2" font-size="13.2" fill="#fff" text-anchor="middle">40%</text>
<rect x="745.1" y="529.9" width="104.4" height="138.8" fill="#c3c16d" stroke="#f6f6e6" stroke-width="1.9"/>
<text x="797.2" y="686.2" font-size="13.2" fill="#fff" text-anchor="middle">60%</text>
<rect x="868.4" y="529.9" width="104.4" height="138.8" fill="#c4c04d" stroke="#f6f6e6" stroke-width="1.9"/>
<text x="920.5" y="686.2" font-size="13.2" fill="#fff" text-anchor="middle">80%</text>
<rect x="991.6" y="529.9" width="104.4" height="138.8" fill="#c8c40a" stroke="#f6f6e6" stroke-width="1.9"/>
<text x="1043.7" y="686.2" font-size="13.2" fill="#fff" text-anchor="middle">100%</text>
<text transform="translate(489.5,559) rotate(-90)" font-size="13" fill="#fff" text-anchor="middle">Actual</text>
<text transform="translate(489.5,638) rotate(-90)" font-size="13" fill="#fff" text-anchor="middle">Target</text>
<rect x="452.5" y="750.5" width="270.8" height="192.3" fill="#262626"/>
<text x="573.3" y="744.5" font-size="15.6" fill="#dcdcdc" text-anchor="middle" textLength="88.0" lengthAdjust="spacingAndGlyphs">RGB Balance</text>
<line x1="446.5" y1="942.8" x2="723.3" y2="942.8" stroke="#ababab" stroke-width="1.3"/>
<text x="446.2" y="949.2" font-size="15.6" fill="#dcdcdc" text-anchor="end">-20</text>
<line x1="446.5" y1="894.7" x2="723.3" y2="894.7" stroke="#ababab" stroke-width="1.3"/>
<text x="446.2" y="901.1" font-size="15.6" fill="#dcdcdc" text-anchor="end">-10</text>
<line x1="446.5" y1="846.6" x2="723.3" y2="846.6" stroke="#ababab" stroke-width="1.3"/>
<text x="446.2" y="853.0" font-size="15.6" fill="#dcdcdc" text-anchor="end">0</text>
<line x1="446.5" y1="798.6" x2="723.3" y2="798.6" stroke="#ababab" stroke-width="1.3"/>
<text x="446.2" y="805.0" font-size="15.6" fill="#dcdcdc" text-anchor="end">10</text>
<line x1="446.5" y1="750.5" x2="723.3" y2="750.5" stroke="#ababab" stroke-width="1.3"/>
<text x="446.2" y="756.9" font-size="15.6" fill="#dcdcdc" text-anchor="end">20</text>
<rect x="452.5" y="750.5" width="270.8" height="192.3" fill="none" stroke="#ababab" stroke-width="1.4"/>
<line x1="452.5" y1="942.8" x2="452.5" y2="948.3" stroke="#ababab" stroke-width="1.4"/>
<line x1="723.3" y1="942.8" x2="723.3" y2="948.3" stroke="#ababab" stroke-width="1.4"/>
<text x="588.0" y="959.0" font-size="15.6" fill="#dcdcdc" text-anchor="middle">100%</text>
<rect x="480.3" y="829.8" width="72.0" height="16.8" fill="#ff0808" stroke="#000" stroke-width="1.2"/>
<rect x="480.9" y="830.4" width="70.8" height="15.6" fill="url(#gGlossV)"/>
<rect x="552.3" y="845.0" width="72.3" height="1.7" fill="#2a8a2a" stroke="#000" stroke-width="1.2"/>
<rect x="625.3" y="771.2" width="71.5" height="75.5" fill="#0404ff" stroke="#000" stroke-width="1.2"/>
<rect x="625.9" y="771.8" width="70.3" height="74.3" fill="url(#gGlossV)"/>
<rect x="746.0" y="725.5" width="768.0" height="32.0" fill="url(#gHdr)"/>
<rect x="746.0" y="725.5" width="21.0" height="32.0" fill="#000"/>
<text x="943.3" y="748.0" font-size="17.6" fill="#f0f0f0" textLength="43.0" lengthAdjust="spacingAndGlyphs">20%</text>
<text x="1058.8" y="748.0" font-size="17.6" fill="#f0f0f0" textLength="43.0" lengthAdjust="spacingAndGlyphs">40%</text>
<text x="1174.2" y="748.0" font-size="17.6" fill="#f0f0f0" textLength="43.0" lengthAdjust="spacingAndGlyphs">60%</text>
<text x="1289.8" y="748.0" font-size="17.6" fill="#f0f0f0" textLength="43.0" lengthAdjust="spacingAndGlyphs">80%</text>
<text x="1405.3" y="748.0" font-size="17.6" fill="#f0f0f0" textLength="55.0" lengthAdjust="spacingAndGlyphs">100%</text>
<rect x="767.0" y="757.5" width="747.0" height="30.5" fill="#3e3e3e"/>
<rect x="746.0" y="757.5" width="21.0" height="30.5" fill="#2c2c2c"/>
<text x="773.3" y="779.8" font-size="17.6" fill="#f0f0f0" textLength="83.0" lengthAdjust="spacingAndGlyphs">x: CIE31</text>
<text x="943.3" y="779.8" font-size="17.6" fill="#f0f0f0" textLength="72.5" lengthAdjust="spacingAndGlyphs">0,3347</text>
<text x="1058.8" y="779.8" font-size="17.6" fill="#f0f0f0" textLength="72.5" lengthAdjust="spacingAndGlyphs">0,3566</text>
<text x="1174.2" y="779.8" font-size="17.6" fill="#f0f0f0" textLength="72.5" lengthAdjust="spacingAndGlyphs">0,3781</text>
<text x="1289.8" y="779.8" font-size="17.6" fill="#f0f0f0" textLength="72.5" lengthAdjust="spacingAndGlyphs">0,3986</text>
<text x="1405.3" y="779.8" font-size="17.6" fill="#f0f0f0" textLength="72.5" lengthAdjust="spacingAndGlyphs">0,4199</text>
<rect x="767.0" y="788.0" width="747.0" height="30.3" fill="#828282"/>
<rect x="746.0" y="788.0" width="21.0" height="30.3" fill="#383838"/>
<text x="773.3" y="810.3" font-size="17.6" fill="#f0f0f0" textLength="84.0" lengthAdjust="spacingAndGlyphs">y: CIE31</text>
<text x="943.3" y="810.3" font-size="17.6" fill="#f0f0f0" textLength="72.5" lengthAdjust="spacingAndGlyphs">0,3650</text>
<text x="1058.8" y="810.3" font-size="17.6" fill="#f0f0f0" textLength="72.5" lengthAdjust="spacingAndGlyphs">0,3997</text>
<text x="1174.2" y="810.3" font-size="17.6" fill="#f0f0f0" textLength="72.5" lengthAdjust="spacingAndGlyphs">0,4340</text>
<text x="1289.8" y="810.3" font-size="17.6" fill="#f0f0f0" textLength="72.5" lengthAdjust="spacingAndGlyphs">0,4665</text>
<text x="1405.3" y="810.3" font-size="17.6" fill="#f0f0f0" textLength="72.5" lengthAdjust="spacingAndGlyphs">0,5002</text>
<rect x="767.0" y="818.3" width="747.0" height="30.4" fill="#3e3e3e"/>
<rect x="746.0" y="818.3" width="21.0" height="30.4" fill="#2c2c2c"/>
<text x="773.3" y="840.6" font-size="17.6" fill="#f0f0f0" textLength="12.5" lengthAdjust="spacingAndGlyphs">Y</text>
<text x="943.3" y="840.6" font-size="17.6" fill="#f0f0f0" textLength="100.0" lengthAdjust="spacingAndGlyphs">213,7476</text>
<text x="1058.8" y="840.6" font-size="17.6" fill="#f0f0f0" textLength="100.0" lengthAdjust="spacingAndGlyphs">209,8916</text>
<text x="1174.2" y="840.6" font-size="17.6" fill="#f0f0f0" textLength="100.0" lengthAdjust="spacingAndGlyphs">206,8096</text>
<text x="1289.8" y="840.6" font-size="17.6" fill="#f0f0f0" textLength="100.0" lengthAdjust="spacingAndGlyphs">204,3107</text>
<text x="1405.3" y="840.6" font-size="17.6" fill="#f0f0f0" textLength="100.0" lengthAdjust="spacingAndGlyphs">201,9385</text>
<rect x="767.0" y="848.7" width="747.0" height="30.3" fill="#828282"/>
<rect x="746.0" y="848.7" width="21.0" height="30.3" fill="#383838"/>
<text x="773.3" y="871.0" font-size="17.6" fill="#f0f0f0" textLength="153.5" lengthAdjust="spacingAndGlyphs">Target x:CIE31</text>
<text x="943.3" y="871.0" font-size="17.6" fill="#f0f0f0" textLength="72.5" lengthAdjust="spacingAndGlyphs">0,3344</text>
<text x="1058.8" y="871.0" font-size="17.6" fill="#f0f0f0" textLength="72.5" lengthAdjust="spacingAndGlyphs">0,3564</text>
<text x="1174.2" y="871.0" font-size="17.6" fill="#f0f0f0" textLength="72.5" lengthAdjust="spacingAndGlyphs">0,3773</text>
<text x="1289.8" y="871.0" font-size="17.6" fill="#f0f0f0" textLength="72.5" lengthAdjust="spacingAndGlyphs">0,3969</text>
<text x="1405.3" y="871.0" font-size="17.6" fill="#f0f0f0" textLength="72.5" lengthAdjust="spacingAndGlyphs">0,4193</text>
<rect x="767.0" y="879.0" width="747.0" height="30.5" fill="#3e3e3e"/>
<rect x="746.0" y="879.0" width="21.0" height="30.5" fill="#2c2c2c"/>
<text x="773.3" y="901.3" font-size="17.6" fill="#f0f0f0" textLength="153.5" lengthAdjust="spacingAndGlyphs">Target y:CIE31</text>
<text x="943.3" y="901.3" font-size="17.6" fill="#f0f0f0" textLength="72.5" lengthAdjust="spacingAndGlyphs">0,3648</text>
<text x="1058.8" y="901.3" font-size="17.6" fill="#f0f0f0" textLength="72.5" lengthAdjust="spacingAndGlyphs">0,4013</text>
<text x="1174.2" y="901.3" font-size="17.6" fill="#f0f0f0" textLength="72.5" lengthAdjust="spacingAndGlyphs">0,4358</text>
<text x="1289.8" y="901.3" font-size="17.6" fill="#f0f0f0" textLength="72.5" lengthAdjust="spacingAndGlyphs">0,4682</text>
<text x="1405.3" y="901.3" font-size="17.6" fill="#f0f0f0" textLength="72.5" lengthAdjust="spacingAndGlyphs">0,5053</text>
<rect x="767.0" y="909.5" width="747.0" height="30.5" fill="#828282"/>
<rect x="746.0" y="909.5" width="21.0" height="30.5" fill="#383838"/>
<text x="773.3" y="931.8" font-size="17.6" fill="#f0f0f0" textLength="87.0" lengthAdjust="spacingAndGlyphs">Target Y</text>
<text x="943.3" y="931.8" font-size="17.6" fill="#f0f0f0" textLength="100.0" lengthAdjust="spacingAndGlyphs">210,2735</text>
<text x="1058.8" y="931.8" font-size="17.6" fill="#f0f0f0" textLength="100.0" lengthAdjust="spacingAndGlyphs">206,5826</text>
<text x="1174.2" y="931.8" font-size="17.6" fill="#f0f0f0" textLength="100.0" lengthAdjust="spacingAndGlyphs">203,7466</text>
<text x="1289.8" y="931.8" font-size="17.6" fill="#f0f0f0" textLength="100.0" lengthAdjust="spacingAndGlyphs">201,5210</text>
<text x="1405.3" y="931.8" font-size="17.6" fill="#f0f0f0" textLength="100.0" lengthAdjust="spacingAndGlyphs">199,3693</text>
<rect x="0.0" y="970.0" width="1920.0" height="70.0" fill="url(#gBarV)"/>
<rect x="0.0" y="969.0" width="918.0" height="71.0" fill="#303030"/>
<rect x="1.3" y="970.0" width="50.7" height="72.0" fill="url(#gSw)" rx="4.5"/>
<circle cx="26.6" cy="980.0" r="8.5" fill="url(#gUpC)" opacity="0.75"/>
<path d="M22 983 L26.6 977.8 L31.2 983Z" fill="#2a2a2a"/>
<rect x="7.0" y="999.0" width="40.0" height="34.5" fill="#ffff00" rx="4.5" stroke="#c8c800" stroke-width="1.2"/>
<rect x="58.8" y="970.0" width="169.7" height="72.0" fill="url(#gSw)" rx="5.0"/>
<rect x="65.1" y="976.3" width="157.5" height="40.0" fill="#c5c5a9" rx="4.0" stroke="#00000030" stroke-width="1.2"/>
<text x="143.5" y="1033.6" font-size="11.2" fill="#262626" text-anchor="middle" font-weight="bold">20%</text>
<rect x="230.8" y="970.0" width="169.7" height="72.0" fill="url(#gSw)" rx="5.0"/>
<rect x="237.1" y="976.3" width="157.5" height="40.0" fill="#c4c488" rx="4.0" stroke="#00000030" stroke-width="1.2"/>
<text x="315.5" y="1033.6" font-size="11.2" fill="#262626" text-anchor="middle" font-weight="bold">40%</text>
<rect x="402.8" y="970.0" width="169.7" height="72.0" fill="url(#gSw)" rx="5.0"/>
<rect x="409.1" y="976.3" width="157.5" height="40.0" fill="#c4c26e" rx="4.0" stroke="#00000030" stroke-width="1.2"/>
<text x="487.5" y="1033.6" font-size="11.2" fill="#262626" text-anchor="middle" font-weight="bold">60%</text>
<rect x="574.8" y="970.0" width="169.7" height="72.0" fill="url(#gSw)" rx="5.0"/>
<rect x="581.1" y="976.3" width="157.5" height="40.0" fill="#c5c14e" rx="4.0" stroke="#00000030" stroke-width="1.2"/>
<text x="659.5" y="1033.6" font-size="11.2" fill="#262626" text-anchor="middle" font-weight="bold">80%</text>
<rect x="746.8" y="970.0" width="169.7" height="72.0" fill="url(#gSwSel)" rx="5.0"/>
<rect x="753.1" y="976.3" width="157.5" height="40.0" fill="#c8c40c" rx="4.0" stroke="#8c8c00" stroke-width="1.2"/>
<text x="831.5" y="1033.6" font-size="11.2" fill="#fff" text-anchor="middle" font-weight="bold">100%</text>
<rect x="1564.5" y="970.0" width="54.8" height="68.4" fill="url(#gPanLo)" rx="4.0"/>
<path d="M1564.5 990.2 V974 Q1564.5 970 1568.5 970 H1615.3 Q1619.3 970 1619.3 974 V990.2Z" fill="url(#gCtl)"/>
<line x1="1564.5" y1="990.3" x2="1619.3" y2="990.3" stroke="#505050" stroke-width="1.2"/>
<line x1="1564.5" y1="991.5" x2="1619.3" y2="991.5" stroke="#9a9a9a" stroke-width="1.0"/>
<circle cx="1591.6" cy="980.3" r="8.3" fill="url(#gUpC)" opacity="0.7"/>
<path d="M1587 982.5 L1591.5 977.3 L1596 982.5Z" fill="#2a2a2a"/>
<rect x="1575.4" y="998.8" width="32.4" height="31.8" fill="url(#gIco)" rx="4.0" stroke="#1e1e1e" stroke-width="2.4"/>
<rect x="1584.2" y="1007.8" width="15.0" height="14.9" fill="url(#gIco2)"/>
<rect x="1620.2" y="970.0" width="255.8" height="33.0" fill="url(#gCtl)"/>
<rect x="1876.0" y="970.0" width="44.0" height="33.0" fill="#2a2a2a"/>
<circle cx="1902.4" cy="987.5" r="12.0" fill="#3a3a3a"/>
<line x1="1672.3" y1="970.0" x2="1672.3" y2="1003.0" stroke="#4a4a4a" stroke-width="1.2"/>
<line x1="1723.2" y1="970.0" x2="1723.2" y2="1003.0" stroke="#4a4a4a" stroke-width="1.2"/>
<line x1="1774.3" y1="970.0" x2="1774.3" y2="1003.0" stroke="#4a4a4a" stroke-width="1.2"/>
<line x1="1825.1" y1="970.0" x2="1825.1" y2="1003.0" stroke="#4a4a4a" stroke-width="1.2"/>
<line x1="1876.0" y1="970.0" x2="1876.0" y2="1003.0" stroke="#4a4a4a" stroke-width="1.2"/>
<circle cx="1646.2" cy="986.7" r="11.0" fill="url(#gCtlC)"/>
<rect x="1642.0" y="982.4" width="8.6" height="8.6" fill="#3a3a3a"/>
<circle cx="1697.8" cy="986.7" r="11.0" fill="url(#gCtlC)"/>
<path d="M1694.2 981.3 L1703.3 986.7 L1694.2 992.1Z" fill="#3a3a3a"/>
<circle cx="1748.8" cy="986.7" r="11.0" fill="url(#gCtlC)"/>
<path d="M1745.2 981.5 h-2.6 v10.4 h2.6 M1752.3 981.5 h2.6 v10.4 h-2.6" fill="none" stroke="#3a3a3a" stroke-width="1.5"/>
<circle cx="1747.2" cy="986.7" r="0.9" fill="#3a3a3a"/>
<circle cx="1750.2" cy="986.7" r="0.9" fill="#3a3a3a"/>
<circle cx="1799.7" cy="986.7" r="11.0" fill="url(#gCtlC)"/>
<path d="M1799.7 986.7 c-2 -3.4 -6.4 -3.4 -6.4 0 c0 3.4 4.4 3.4 6.4 0 c2 -3.4 6.4 -3.4 6.4 0 c0 3.4 -4.4 3.4 -6.4 0Z" fill="none" stroke="#3a3a3a" stroke-width="1.6"/>
<circle cx="1850.5" cy="986.7" r="11.0" fill="url(#gCtlC)"/>
<path d="M1845.5 985.9 a5 5 0 0 1 8.6 -2.6" fill="none" stroke="#3a3a3a" stroke-width="2.0"/>
<path d="M1855.1 985.3 l0.9 -4.6 l-4.6 1.4Z" fill="#3a3a3a" stroke="#3a3a3a" stroke-width="0.8"/>
<path d="M1855.5 987.5 a5 5 0 0 1 -8.6 2.6" fill="none" stroke="#3a3a3a" stroke-width="2.0"/>
<path d="M1846.0 988.1 l-0.9 4.6 l4.6 -1.4Z" fill="#3a3a3a" stroke="#3a3a3a" stroke-width="0.8"/>
<rect x="1620.2" y="1005.5" width="304.0" height="40.0" fill="url(#gCtl2)" rx="3.0"/>
<line x1="1774.3" y1="1005.5" x2="1774.3" y2="1040.0" stroke="#555" stroke-width="1.2"/>
<line x1="1620.2" y1="1004.3" x2="1920.0" y2="1004.3" stroke="#3a3a3a" stroke-width="2.2"/>
<circle cx="1654.9" cy="1022.3" r="10.8" fill="url(#gCtlC)"/>
<circle cx="1896.4" cy="1022.3" r="10.8" fill="url(#gCtlC)"/>
<path d="M1654.6 1017.8 l-3.6 4.5 l3.6 4.5 M1659 1017.8 l-3.6 4.5 l3.6 4.5" fill="none" stroke="#444" stroke-width="1.4"/>
<path d="M1893 1017.8 l3.6 4.5 l-3.6 4.5 M1897.4 1017.8 l3.6 4.5 l-3.6 4.5" fill="none" stroke="#444" stroke-width="1.4"/>
<text x="1685.6" y="1030.8" font-size="24.2" fill="#363636" textLength="56.5" lengthAdjust="spacingAndGlyphs" font-weight="bold">Back</text>
<text x="1806.3" y="1030.8" font-size="24.2" fill="#363636" textLength="58.5" lengthAdjust="spacingAndGlyphs" font-weight="bold">Next</text>
<rect x="1117.3" y="118.0" width="732.0" height="586.7" fill="#333" stroke="#c6be0a" stroke-width="7.6"/>
<rect x="1152.0" y="147.1" width="690.7" height="523.5" fill="#242425"/>
</svg>
<div id="cie" style="position:absolute;left:1152px;top:149px;width:604px;height:520px;clip-path:polygon(142.8px 518.9px,142.8px 518.9px,142.8px 518.9px,142.7px 518.9px,142.7px 518.9px,142.6px 518.9px,142.6px 518.9px,142.5px 518.9px,142.4px 519.0px,142.4px 519.0px,142.3px 519.0px,142.2px 519.0px,142.2px 519.0px,142.1px 519.0px,142.0px 519.0px,141.9px 519.0px,141.8px 519.0px,141.7px 519.0px,141.6px 519.0px,141.4px 519.0px,141.3px 519.0px,141.1px 518.9px,140.9px 518.9px,140.8px 518.9px,140.6px 518.8px,140.4px 518.8px,140.3px 518.7px,140.1px 518.6px,140.0px 518.5px,139.9px 518.5px,139.7px 518.4px,139.5px 518.3px,139.3px 518.2px,139.2px 518.1px,139.0px 518.0px,138.8px 517.8px,138.5px 517.7px,138.3px 517.5px,138.0px 517.4px,137.8px 517.2px,137.5px 517.0px,137.2px 516.8px,136.9px 516.6px,136.6px 516.4px,136.3px 516.2px,135.9px 516.0px,135.6px 515.7px,135.2px 515.5px,134.8px 515.2px,134.4px 514.9px,134.0px 514.6px,133.6px 514.3px,133.1px 514.0px,132.6px 513.7px,132.1px 513.4px,131.6px 513.0px,131.0px 512.6px,130.4px 512.2px,129.8px 511.8px,129.1px 511.4px,128.4px 510.9px,127.7px 510.5px,127.0px 510.0px,126.3px 509.5px,125.5px 509.0px,124.7px 508.4px,123.8px 507.8px,122.9px 507.2px,122.0px 506.5px,121.1px 505.8px,120.1px 505.1px,119.1px 504.3px,118.1px 503.4px,117.0px 502.6px,115.9px 501.6px,114.8px 500.7px,113.6px 499.6px,112.4px 498.4px,111.1px 497.1px,109.7px 495.6px,108.2px 494.0px,106.7px 492.2px,105.1px 490.3px,103.4px 488.2px,101.7px 485.9px,99.9px 483.4px,98.0px 480.8px,96.1px 477.9px,94.1px 474.8px,92.0px 471.5px,89.8px 467.8px,87.5px 463.8px,85.1px 459.5px,82.7px 455.0px,80.1px 450.1px,77.5px 444.8px,74.7px 439.1px,71.9px 433.0px,68.8px 426.6px,65.7px 419.7px,62.5px 412.5px,59.3px 404.8px,56.2px 396.6px,53.0px 387.9px,49.8px 378.7px,46.6px 369.1px,43.3px 359.0px,40.2px 348.5px,37.0px 337.7px,33.9px 326.3px,30.7px 314.4px,27.6px 302.1px,24.6px 289.6px,21.7px 276.9px,19.0px 264.1px,16.5px 251.3px,14.1px 238.1px,11.8px 224.8px,9.8px 211.5px,8.0px 198.4px,6.4px 185.6px,5.2px 173.0px,4.2px 160.4px,3.4px 148.1px,2.9px 135.9px,2.7px 124.2px,2.9px 112.9px,3.5px 101.9px,4.3px 91.3px,5.5px 80.9px,7.0px 71.1px,8.9px 61.8px,11.1px 53.3px,13.7px 45.3px,16.7px 37.9px,20.1px 31.1px,23.7px 24.9px,27.6px 19.4px,31.7px 14.7px,36.0px 10.7px,40.6px 7.6px,45.5px 5.1px,50.5px 3.3px,55.6px 2.0px,60.8px 1.0px,66.0px 0.7px,71.4px 1.0px,76.9px 1.8px,82.5px 2.9px,88.0px 4.3px,93.6px 5.8px,99.1px 7.4px,104.7px 9.3px,110.3px 11.5px,115.9px 13.8px,121.4px 16.1px,126.9px 18.5px,132.2px 20.8px,137.5px 23.3px,142.8px 25.8px,148.0px 28.4px,153.1px 31.0px,158.3px 33.7px,163.4px 36.4px,168.4px 39.1px,173.5px 42.0px,178.5px 44.8px,183.4px 47.8px,188.4px 50.7px,193.4px 53.7px,198.4px 56.8px,203.4px 59.9px,208.3px 63.1px,213.3px 66.2px,218.2px 69.5px,223.1px 72.7px,228.0px 76.0px,232.9px 79.3px,237.8px 82.7px,242.7px 86.1px,247.6px 89.5px,252.5px 92.9px,257.4px 96.3px,262.3px 99.8px,267.2px 103.3px,272.1px 106.8px,277.0px 110.3px,281.9px 113.9px,286.8px 117.4px,291.7px 121.0px,296.6px 124.6px,301.5px 128.2px,306.4px 131.8px,311.3px 135.4px,316.2px 139.1px,321.0px 142.7px,325.9px 146.3px,330.8px 150.0px,335.7px 153.6px,340.5px 157.3px,345.4px 160.9px,350.2px 164.5px,355.1px 168.2px,359.9px 171.8px,364.8px 175.4px,369.5px 179.0px,374.3px 182.6px,379.1px 186.3px,383.8px 189.8px,388.6px 193.4px,393.3px 197.0px,398.0px 200.5px,402.6px 204.1px,407.2px 207.6px,411.9px 211.1px,416.4px 214.5px,421.0px 218.0px,425.5px 221.4px,430.0px 224.8px,434.4px 228.2px,438.8px 231.5px,443.2px 234.8px,447.5px 238.1px,451.8px 241.3px,456.1px 244.5px,460.3px 247.7px,464.4px 250.8px,468.5px 253.9px,472.5px 257.0px,476.5px 260.0px,480.4px 262.9px,484.2px 265.9px,488.0px 268.7px,491.7px 271.5px,495.3px 274.3px,498.8px 276.9px,502.2px 279.5px,505.5px 282.0px,508.8px 284.5px,512.0px 286.9px,515.1px 289.3px,518.2px 291.6px,521.2px 293.9px,524.1px 296.1px,527.0px 298.3px,529.8px 300.4px,532.5px 302.4px,535.1px 304.4px,537.7px 306.3px,540.1px 308.1px,542.5px 309.9px,544.8px 311.6px,547.0px 313.3px,549.1px 314.9px,551.2px 316.5px,553.2px 318.0px,555.1px 319.5px,557.0px 320.9px,558.7px 322.3px,560.5px 323.6px,562.1px 324.8px,563.7px 326.0px,565.2px 327.2px,566.7px 328.3px,568.1px 329.4px,569.5px 330.4px,570.8px 331.4px,572.1px 332.3px,573.3px 333.3px,574.5px 334.1px,575.6px 335.0px,576.7px 335.8px,577.7px 336.6px,578.7px 337.4px,579.7px 338.1px,580.7px 338.9px,581.6px 339.6px,582.5px 340.2px,583.4px 340.9px,584.2px 341.6px,585.0px 342.2px,585.8px 342.8px,586.6px 343.4px,587.4px 343.9px,588.1px 344.5px,588.8px 345.0px,589.4px 345.5px,590.1px 346.0px,590.7px 346.5px,591.3px 346.9px,591.9px 347.4px,592.5px 347.8px,593.0px 348.2px,593.5px 348.6px,594.0px 348.9px,594.5px 349.3px,594.9px 349.6px,595.3px 349.9px,595.7px 350.2px,596.1px 350.5px,596.5px 350.8px,596.8px 351.1px,597.2px 351.3px,597.5px 351.6px,597.8px 351.8px,598.1px 352.0px,598.4px 352.2px,598.6px 352.4px,598.9px 352.6px,599.1px 352.8px,599.3px 352.9px,599.5px 353.1px,599.8px 353.3px,600.0px 353.5px,600.3px 353.7px,600.6px 353.9px,600.9px 354.2px,601.2px 354.4px,601.4px 354.6px,601.6px 354.7px,601.8px 354.9px,602.0px 355.0px,602.2px 355.2px,602.4px 355.3px,602.6px 355.4px,602.7px 355.6px,602.9px 355.7px,603.0px 355.8px,603.2px 355.9px,603.3px 356.0px,603.4px 356.1px,603.5px 356.1px,603.5px 356.2px,603.6px 356.2px,603.6px 356.2px,603.6px 356.2px,603.6px 356.2px)">
<i style="margin-left:59px;width:15px;background:linear-gradient(90deg,#00ff00,#00ff00 12px,#00ff00 15px)"></i>
<i style="margin-left:49px;width:36px;background:linear-gradient(90deg,#00ff00,#00ff00 12px,#00ff00 24px,#00ff00 36px)"></i>
<i style="margin-left:43px;width:50px;background:linear-gradient(90deg,#00ff00,#00ff00 12px,#00ff00 24px,#00ff00 36px,#00ff00 48px,#00ff00 50px)"></i>
<i style="margin-left:39px;width:61px;background:linear-gradient(90deg,#00ff00,#00ff00 12px,#00ff00 24px,#00ff00 36px,#00ff00 48px,#00ff00 60px,#00ff00 61px)"></i>
<i style="margin-left:36px;width:70px;background:linear-gradient(90deg,#00ff00,#00ff00 12px,#00ff00 24px,#00ff00 36px,#00ff00 48px,#00ff00 60px,#00ff00 70px)"></i>
<i style="margin-left:33px;width:79px;background:linear-gradient(90deg,#00ff00,#00ff00 12px,#00ff00 24px,#00ff00 36px,#00ff00 48px,#00ff00 60px,#00ff00 72px,#00ff00 79px)"></i>
<i style="margin-left:31px;width:86px;background:linear-gradient(90deg,#00ff00,#00ff00 12px,#00ff00 24px,#00ff00 36px,#00ff00 48px,#00ff00 60px,#00ff00 72px,#00ff00 84px,#00ff00 86px)"></i>
<i style="margin-left:29px;width:92px;background:linear-gradient(90deg,#00ff00,#00ff00 12px,#00ff00 24px,#00ff00 36px,#00ff00 48px,#00ff00 60px,#00ff00 72px,#00ff00 84px,#00ff00 92px)"></i>
<i style="margin-left:27px;width:99px;background:linear-gradient(90deg,#00ff01,#00ff00 12px,#00ff00 24px,#00ff00 36px,#00ff00 48px,#00ff00 60px,#00ff00 72px,#00ff00 84px,#00ff00 96px,#00ff00 99px)"></i>
<i style="margin-left:25px;width:106px;background:linear-gradient(90deg,#00ff02,#00ff00 12px,#00ff00 24px,#00ff00 36px,#00ff00 48px,#00ff00 60px,#00ff00 72px,#00ff00 84px,#00ff00 96px,#00ff00 106px)"></i>
<i style="margin-left:24px;width:111px;background:linear-gradient(90deg,#00ff03,#00ff00 12px,#00ff00 24px,#00ff00 36px,#00ff00 48px,#00ff00 60px,#00ff00 72px,#00ff00 84px,#00ff00 96px,#00ff00 108px,#00ff00 111px)"></i>
<i style="margin-left:23px;width:116px;background:linear-gradient(90deg,#00ff04,#00ff01 12px,#00ff00 24px,#00ff00 36px,#00ff00 48px,#00ff00 60px,#00ff00 72px,#00ff00 84px,#00ff00 96px,#00ff00 108px,#00ff00 116px)"></i>
<i style="margin-left:21px;width:123px;background:linear-gradient(90deg,#00ff05,#00ff02 12px,#00ff00 24px,#00ff00 36px,#00ff00 48px,#00ff00 60px,#00ff00 72px,#00ff00 84px,#00ff00 96px,#00ff00 108px,#00ff00 120px,#00ff00 123px)"></i>
<i style="margin-left:20px;width:128px;background:linear-gradient(90deg,#00ff06,#00ff03 12px,#00ff01 24px,#00ff00 36px,#00ff00 48px,#00ff00 60px,#00ff00 72px,#00ff00 84px,#00ff00 96px,#00ff00 108px,#00ff00 120px,#00ff00 128px)"></i>
<i style="margin-left:19px;width:133px;background:linear-gradient(90deg,#00ff07,#00ff04 12px,#00ff02 24px,#00ff00 36px,#00ff00 48px,#00ff00 60px,#00ff00 72px,#00ff00 84px,#00ff00 96px,#00ff00 108px,#00ff00 120px,#00ff00 132px,#00ff00 133px)"></i>
<i style="margin-left:18px;width:138px;background:linear-gradient(90deg,#00ff08,#00ff05 12px,#00ff03 24px,#00ff00 36px,#00ff00 48px,#00ff00 60px,#00ff00 72px,#00ff00 84px,#00ff00 96px,#00ff00 108px,#00ff00 120px,#00ff00 132px,#00ff00 138px)"></i>
<i style="margin-left:17px;width:142px;background:linear-gradient(90deg,#00ff09,#00ff06 12px,#00ff04 24px,#00ff01 36px,#00ff00 48px,#00ff00 60px,#00ff00 72px,#00ff00 84px,#00ff00 96px,#00ff00 108px,#00ff00 120px,#00ff00 132px,#00ff00 142px)"></i>
<i style="margin-left:16px;width:147px;background:linear-gradient(90deg,#00ff0a,#00ff07 12px,#00ff04 24px,#00ff02 36px,#00ff00 48px,#00ff00 60px,#00ff00 72px,#00ff00 84px,#00ff00 96px,#00ff00 108px,#00ff00 120px,#00ff00 132px,#00ff00 144px,#00ff00 147px)"></i>
<i style="margin-left:15px;width:152px;background:linear-gradient(90deg,#00ff0a,#00ff08 12px,#00ff05 24px,#00ff03 36px,#00ff00 48px,#00ff00 60px,#00ff00 72px,#00ff00 84px,#00ff00 96px,#00ff00 108px,#00ff00 120px,#00ff00 132px,#00ff00 144px,#00ff00 152px)"></i>
<i style="margin-left:14px;width:157px;background:linear-gradient(90deg,#00ff0b,#00ff09 12px,#00ff06 24px,#00ff04 36px,#00ff01 48px,#00ff00 60px,#00ff00 72px,#00ff00 84px,#00ff00 96px,#00ff00 108px,#00ff00 120px,#00ff00 132px,#00ff00 144px,#00ff00 156px,#00ff00 157px)"></i>
<i style="margin-left:13px;width:161px;background:linear-gradient(90deg,#00ff0c,#00ff0a 12px,#00ff07 24px,#00ff05 36px,#00ff02 48px,#00ff00 60px,#00ff00 72px,#00ff00 84px,#00ff00 96px,#00ff00 108px,#00ff00 120px,#00ff00 132px,#00ff00 144px,#00ff00 156px,#00ff00 161px)"></i>
<i style="margin-left:12px;width:166px;background:linear-gradient(90deg,#00ff0d,#00ff0b 12px,#00ff08 24px,#00ff06 36px,#00ff03 48px,#00ff00 60px,#00ff00 72px,#00ff00 84px,#00ff00 96px,#00ff00 108px,#00ff00 120px,#00ff00 132px,#00ff00 144px,#00ff00 156px,#00ff00 166px)"></i>
<i style="margin-left:11px;width:170px;background:linear-gradient(90deg,#00ff0e,#00ff0c 12px,#00ff09 24px,#00ff07 36px,#00ff04 48px,#00ff01 60px,#00ff00 72px,#00ff00 84px,#00ff00 96px,#00ff00 108px,#00ff00 120px,#00ff00 132px,#00ff00 144px,#00ff00 156px,#00ff00 168px,#00ff00 170px)"></i>
<i style="margin-left:11px;width:174px;background:linear-gradient(90deg,#00ff0f,#00ff0d 12px,#00ff0a 24px,#00ff08 36px,#00ff05 48px,#00ff02 60px,#00ff00 72px,#00ff00 84px,#00ff00 96px,#00ff00 108px,#00ff00 120px,#00ff00 132px,#00ff00 144px,#00ff00 156px,#00ff00 168px,#00ff00 174px)"></i>
<i style="margin-left:10px;width:178px;background:linear-gradient(90deg,#00ff10,#00ff0e 12px,#00ff0b 24px,#00ff09 36px,#00ff06 48px,#00ff03 60px,#00ff00 72px,#00ff00 84px,#00ff00 96px,#00ff00 108px,#00ff00 120px,#00ff00 132px,#00ff00 144px,#00ff00 156px,#00ff00 168px,#00ff00 178px)"></i>
<i style="margin-left:9px;width:182px;background:linear-gradient(90deg,#00ff11,#00ff0f 12px,#00ff0c 24px,#00ff0a 36px,#00ff07 48px,#00ff04 60px,#00ff01 72px,#00ff00 84px,#00ff00 96px,#00ff00 108px,#00ff00 120px,#00ff00 132px,#00ff00 144px,#00ff00 156px,#00ff00 168px,#00ff00 180px,#00ff00 182px)"></i>
<i style="margin-left:9px;width:186px;background:linear-gradient(90deg,#00ff12,#00ff0f 12px,#00ff0d 24px,#00ff0a 36px,#00ff08 48px,#00ff05 60px,#00ff02 72px,#00ff00 84px,#00ff00 96px,#00ff00 108px,#00ff00 120px,#00ff00 132px,#00ff00 144px,#00ff00 156px,#00ff00 168px,#00ff00 180px,#00ff00 186px)"></i>
<i style="margin-left:8px;width:190px;background:linear-gradient(90deg,#00ff13,#00ff10 12px,#00ff0e 24px,#00ff0b 36px,#00ff09 48px,#00ff06 60px,#00ff03 72px,#00ff00 84px,#00ff00 96px,#00ff00 108px,#00ff00 120px,#00ff00 132px,#00ff00 144px,#00ff00 156px,#00ff00 168px,#00ff00 180px,#00ff00 190px)"></i>
<i style="margin-left:8px;width:193px;background:linear-gradient(90deg,#00ff14,#00ff11 12px,#00ff0f 24px,#00ff0c 36px,#00ff0a 48px,#00ff07 60px,#00ff04 72px,#00ff01 84px,#00ff00 96px,#00ff00 108px,#00ff00 120px,#00ff00 132px,#00ff00 144px,#00ff00 156px,#00ff00 168px,#00ff00 180px,#00ff00 192px,#00ff00 193px)"></i>
<i style="margin-left:7px;width:197px;background:linear-gradient(90deg,#00ff15,#00ff12 12px,#00ff10 24px,#00ff0d 36px,#00ff0b 48px,#00ff08 60px,#00ff05 72px,#00ff02 84px,#00ff00 96px,#00ff00 108px,#00ff00 120px,#00ff00 132px,#00ff00 144px,#00ff00 156px,#00ff00 168px,#00ff00 180px,#00ff00 192px,#00ff00 197px)"></i>
<i style="margin-left:7px;width:201px;background:linear-gradient(90deg,#00ff16,#00ff13 12px,#00ff11 24px,#00ff0e 36px,#00ff0b 48px,#00ff09 60px,#00ff06 72px,#00ff03 84px,#00ff00 96px,#00ff00 108px,#00ff00 120px,#00ff00 132px,#00ff00 144px,#00ff00 156px,#00ff00 168px,#00ff00 180px,#00ff00 192px,#00ff00 201px)"></i>
<i style="margin-left:6px;width:205px;background:linear-gradient(90deg,#00ff17,#00ff14 12px,#00ff12 24px,#00ff0f 36px,#00ff0c 48px,#00ff0a 60px,#00ff07 72px,#00ff04 84px,#00ff01 96px,#00ff00 108px,#00ff00 120px,#00ff00 132px,#00ff00 144px,#00ff00 156px,#00ff00 168px,#00ff00 180px,#00ff00 192px,#00ff00 204px,#00ff00 205px)"></i>
<i style="margin-left:6px;width:208px;background:linear-gradient(90deg,#00ff18,#00ff15 12px,#00ff13 24px,#00ff10 36px,#00ff0d 48px,#00ff0b 60px,#00ff08 72px,#00ff05 84px,#00ff02 96px,#00ff00 108px,#00ff00 120px,#00ff00 132px,#00ff00 144px,#00ff00 156px,#00ff00 168px,#00ff00 180px,#00ff00 192px,#00ff00 204px,#00ff00 208px)"></i>
<i style="margin-left:5px;width:212px;background:linear-gradient(90deg,#00ff19,#00ff16 12px,#00ff14 24px,#00ff11 36px,#00ff0e 48px,#00ff0c 60px,#00ff09 72px,#00ff06 84px,#00ff03 96px,#00ff00 108px,#00ff00 120px,#00ff00 132px,#00ff00 144px,#00ff00 156px,#00ff00 168px,#00ff00 180px,#00ff00 192px,#00ff00 204px,#00ff00 212px)"></i>
<i style="margin-left:5px;width:215px;background:linear-gradient(90deg,#00ff19,#00ff17 12px,#00ff14 24px,#00ff12 36px,#00ff0f 48px,#00ff0c 60px,#00ff0a 72px,#00ff07 84px,#00ff04 96px,#00ff01 108px,#00ff00 120px,#00ff00 132px,#00ff00 144px,#00ff00 156px,#00ff00 168px,#00ff00 180px,#00ff00 192px,#00ff00 204px,#00ff00 215px)"></i>
<i style="margin-left:5px;width:218px;background:linear-gradient(90deg,#00ff1a,#00ff18 12px,#00ff15 24px,#00ff13 36px,#00ff10 48px,#00ff0d 60px,#00ff0b 72px,#00ff08 84px,#00ff05 96px,#00ff02 108px,#00ff00 120px,#00ff00 132px,#00ff00 144px,#00ff00 156px,#00ff00 168px,#00ff00 180px,#00ff00 192px,#00ff00 204px,#00ff00 216px,#00ff00 218px)"></i>
<i style="margin-left:4px;width:222px;background:linear-gradient(90deg,#00ff1b,#00ff19 12px,#00ff16 24px,#00ff14 36px,#00ff11 48px,#00ff0e 60px,#00ff0c 72px,#00ff09 84px,#00ff06 96px,#00ff03 108px,#00ff00 120px,#00ff00 132px,#00ff00 144px,#00ff00 156px,#00ff00 168px,#00ff00 180px,#00ff00 192px,#00ff00 204px,#00ff00 216px,#00ff00 222px)"></i>
<i style="margin-left:4px;width:225px;background:linear-gradient(90deg,#00ff1c,#00ff1a 12px,#00ff17 24px,#00ff15 36px,#00ff12 48px,#00ff0f 60px,#00ff0d 72px,#00ff0a 84px,#00ff07 96px,#00ff04 108px,#00ff01 120px,#00ff00 132px,#00ff00 144px,#00ff00 156px,#00ff00 168px,#00ff00 180px,#00ff00 192px,#00ff00 204px,#00ff00 216px,#00ff00 225px)"></i>
<i style="margin-left:4px;width:228px;background:linear-gradient(90deg,#00ff1d,#00ff1b 12px,#00ff18 24px,#00ff16 36px,#00ff13 48px,#00ff10 60px,#00ff0d 72px,#00ff0b 84px,#00ff08 96px,#00ff05 108px,#00ff02 120px,#00ff00 132px,#00ff00 144px,#00ff00 156px,#00ff00 168px,#00ff00 180px,#00ff00 192px,#00ff00 204px,#00ff00 216px,#00ff00 228px)"></i>
<i style="margin-left:3px;width:232px;background:linear-gradient(90deg,#00ff1e,#00ff1c 12px,#00ff19 24px,#00ff17 36px,#00ff14 48px,#00ff11 60px,#00ff0f 72px,#00ff0c 84px,#00ff09 96px,#00ff06 108px,#00ff03 120px,#00ff00 132px,#00ff00 144px,#00ff00 156px,#00ff00 168px,#00ff00 180px,#00ff00 192px,#00ff00 204px,#00ff00 216px,#00ff00 228px,#00ff00 232px)"></i>
<i style="margin-left:3px;width:235px;background:linear-gradient(90deg,#00ff1f,#00ff1d 12px,#00ff1a 24px,#00ff18 36px,#00ff15 48px,#00ff12 60px,#00ff0f 72px,#00ff0d 84px,#00ff0a 96px,#00ff07 108px,#00ff04 120px,#00ff00 132px,#00ff00 144px,#00ff00 156px,#00ff00 168px,#00ff00 180px,#00ff00 192px,#00ff00 204px,#00ff00 216px,#00ff00 228px,#00ff00 235px)"></i>
<i style="margin-left:3px;width:238px;background:linear-gradient(90deg,#00ff20,#00ff1e 12px,#00ff1b 24px,#00ff18 36px,#00ff16 48px,#00ff13 60px,#00ff10 72px,#00ff0d 84px,#00ff0b 96px,#00ff08 108px,#00ff04 120px,#00ff01 132px,#00ff00 144px,#00ff00 156px,#00ff00 168px,#00ff00 180px,#00ff00 192px,#00ff00 204px,#00ff00 216px,#00ff00 228px,#00ff00 238px)"></i>
<i style="margin-left:3px;width:241px;background:linear-gradient(90deg,#00ff21,#00ff1f 12px,#00ff1c 24px,#00ff19 36px,#00ff17 48px,#00ff14 60px,#00ff11 72px,#00ff0e 84px,#00ff0b 96px,#00ff08 108px,#00ff05 120px,#00ff02 132px,#00ff00 144px,#00ff00 156px,#00ff00 168px,#00ff00 180px,#00ff00 192px,#00ff00 204px,#00ff00 216px,#00ff00 228px,#00ff00 240px,#00ff00 241px)"></i>
<i style="margin-left:2px;width:245px;background:linear-gradient(90deg,#00ff22,#00ff20 12px,#00ff1d 24px,#00ff1b 36px,#00ff18 48px,#00ff15 60px,#00ff12 72px,#00ff10 84px,#00ff0d 96px,#00ff0a 108px,#00ff07 120px,#00ff03 132px,#00ff00 144px,#00ff00 156px,#00ff00 168px,#00ff00 180px,#00ff00 192px,#00ff00 204px,#00ff00 216px,#00ff00 228px,#00ff00 240px,#00ff00 245px)"></i>
<i style="margin-left:2px;width:247px;background:linear-gradient(90deg,#00ff23,#00ff21 12px,#00ff1e 24px,#00ff1b 36px,#00ff19 48px,#00ff16 60px,#00ff13 72px,#00ff10 84px,#00ff0e 96px,#00ff0b 108px,#00ff07 120px,#00ff04 132px,#00ff01 144px,#00ff00 156px,#00ff00 168px,#00ff00 180px,#00ff00 192px,#00ff00 204px,#00ff00 216px,#00ff00 228px,#00ff00 240px,#00ff00 247px)"></i>
<i style="margin-left:2px;width:250px;background:linear-gradient(90deg,#00ff24,#00ff22 12px,#00ff1f 24px,#00ff1c 36px,#00ff1a 48px,#00ff17 60px,#00ff14 72px,#00ff11 84px,#00ff0e 96px,#00ff0b 108px,#00ff08 120px,#00ff05 132px,#00ff02 144px,#00ff00 156px,#00ff00 168px,#00ff00 180px,#00ff00 192px,#00ff00 204px,#00ff00 216px,#00ff00 228px,#00ff00 240px,#00ff00 250px)"></i>
<i style="margin-left:2px;width:253px;background:linear-gradient(90deg,#00ff25,#00ff23 12px,#00ff20 24px,#00ff1d 36px,#00ff1b 48px,#00ff18 60px,#00ff15 72px,#00ff12 84px,#00ff0f 96px,#00ff0c 108px,#00ff09 120px,#00ff06 132px,#00ff03 144px,#00ff00 156px,#00ff00 168px,#00ff00 180px,#00ff00 192px,#00ff00 204px,#00ff00 216px,#00ff00 228px,#00ff00 240px,#00ff00 252px,#00ff00 253px)"></i>
<i style="margin-left:2px;width:256px;background:linear-gradient(90deg,#00ff26,#00ff23 12px,#00ff21 24px,#00ff1e 36px,#00ff1c 48px,#00ff19 60px,#00ff16 72px,#00ff13 84px,#00ff10 96px,#00ff0d 108px,#00ff0a 120px,#00ff07 132px,#00ff04 144px,#00ff01 156px,#00ff00 168px,#00ff00 180px,#00ff00 192px,#00ff00 204px,#00ff00 216px,#00ff00 228px,#00ff00 240px,#00ff00 252px,#00ff00 256px)"></i>
<i style="margin-left:1px;width:260px;background:linear-gradient(90deg,#00ff27,#00ff25 12px,#00ff22 24px,#00ff20 36px,#00ff1d 48px,#00ff1a 60px,#00ff17 72px,#00ff15 84px,#00ff12 96px,#00ff0f 108px,#00ff0c 120px,#00ff08 132px,#00ff05 144px,#00ff02 156px,#00ff00 168px,#00ff00 180px,#00ff00 192px,#00ff00 204px,#00ff00 216px,#00ff00 228px,#00ff00 240px,#00ff00 252px,#00ff00 260px)"></i>
<i style="margin-left:1px;width:263px;background:linear-gradient(90deg,#00ff28,#00ff26 12px,#00ff23 24px,#00ff21 36px,#00ff1e 48px,#00ff1b 60px,#00ff18 72px,#00ff16 84px,#00ff13 96px,#00ff10 108px,#00ff0c 120px,#00ff09 132px,#00ff06 144px,#00ff03 156px,#00ff00 168px,#00ff00 180px,#00ff00 192px,#00ff00 204px,#00ff00 216px,#00ff00 228px,#00ff00 240px,#00ff00 252px,#00ff00 263px)"></i>
<i style="margin-left:1px;width:265px;background:linear-gradient(90deg,#00ff29,#00ff27 12px,#00ff24 24px,#00ff22 36px,#00ff1f 48px,#00ff1c 60px,#00ff19 72px,#00ff16 84px,#00ff14 96px,#00ff11 108px,#00ff0d 120px,#00ff0a 132px,#00ff07 144px,#00ff04 156px,#00ff00 168px,#00ff00 180px,#00ff00 192px,#00ff00 204px,#00ff00 216px,#00ff00 228px,#00ff00 240px,#00ff00 252px,#02ff00 264px,#03ff00 265px)"></i>
<i style="margin-left:1px;width:268px;background:linear-gradient(90deg,#00ff2a,#00ff28 12px,#00ff25 24px,#00ff23 36px,#00ff20 48px,#00ff1d 60px,#00ff1a 72px,#00ff17 84px,#00ff15 96px,#00ff12 108px,#00ff0e 120px,#00ff0b 132px,#00ff08 144px,#00ff05 156px,#00ff01 168px,#00ff00 180px,#00ff00 192px,#00ff00 204px,#00ff00 216px,#00ff00 228px,#00ff00 240px,#00ff00 252px,#03ff00 264px,#08ff00 268px)"></i>
<i style="margin-left:1px;width:271px;background:linear-gradient(90deg,#00ff2b,#00ff29 12px,#00ff26 24px,#00ff24 36px,#00ff21 48px,#00ff1e 60px,#00ff1b 72px,#00ff18 84px,#00ff16 96px,#00ff13 108px,#00ff0f 120px,#00ff0c 132px,#00ff09 144px,#00ff06 156px,#00ff02 168px,#00ff00 180px,#00ff00 192px,#00ff00 204px,#00ff00 216px,#00ff00 228px,#00ff00 240px,#00ff00 252px,#04ff00 264px,#0dff00 271px)"></i>
<i style="margin-left:1px;width:274px;background:linear-gradient(90deg,#00ff2c,#00ff2a 12px,#00ff27 24px,#00ff25 36px,#00ff22 48px,#00ff1f 60px,#00ff1c 72px,#00ff1a 84px,#00ff17 96px,#00ff14 108px,#00ff10 120px,#00ff0d 132px,#00ff0a 144px,#00ff07 156px,#00ff03 168px,#00ff00 180px,#00ff00 192px,#00ff00 204px,#00ff00 216px,#00ff00 228px,#00ff00 240px,#00ff00 252px,#05ff00 264px,#12ff00 274px)"></i>
<i style="margin-left:1px;width:277px;background:linear-gradient(90deg,#00ff2d,#00ff2b 12px,#00ff28 24px,#00ff26 36px,#00ff23 48px,#00ff20 60px,#00ff1d 72px,#00ff1b 84px,#00ff18 96px,#00ff15 108px,#00ff11 120px,#00ff0e 132px,#00ff0b 144px,#00ff08 156px,#00ff04 168px,#00ff01 180px,#00ff00 192px,#00ff00 204px,#00ff00 216px,#00ff00 228px,#00ff00 240px,#00ff00 252px,#06ff00 264px,#15ff00 276px,#17ff00 277px)"></i>
<i style="margin-left:0px;width:280px;background:linear-gradient(90deg,#00ff2e,#00ff2c 12px,#00ff29 24px,#00ff27 36px,#00ff24 48px,#00ff21 60px,#00ff1f 72px,#00ff1c 84px,#00ff19 96px,#00ff16 108px,#00ff13 120px,#00ff10 132px,#00ff0c 144px,#00ff09 156px,#00ff06 168px,#00ff02 180px,#00ff00 192px,#00ff00 204px,#00ff00 216px,#00ff00 228px,#00ff00 240px,#00ff00 252px,#06ff00 264px,#15ff00 276px,#1aff00 280px)"></i>
<i style="margin-left:0px;width:283px;background:linear-gradient(90deg,#00ff2f,#00ff2d 12px,#00ff2a 24px,#00ff28 36px,#00ff25 48px,#00ff23 60px,#00ff20 72px,#00ff1d 84px,#00ff1a 96px,#00ff17 108px,#00ff14 120px,#00ff11 132px,#00ff0d 144px,#00ff0a 156px,#00ff07 168px,#00ff03 180px,#00ff00 192px,#00ff00 204px,#00ff00 216px,#00ff00 228px,#00ff00 240px,#00ff00 252px,#07ff00 264px,#16ff00 276px,#1fff00 283px)"></i>
<i style="margin-left:0px;width:286px;background:linear-gradient(90deg,#00ff31,#00ff2e 12px,#00ff2c 24px,#00ff29 36px,#00ff26 48px,#00ff24 60px,#00ff21 72px,#00ff1e 84px,#00ff1b 96px,#00ff18 108px,#00ff15 120px,#00ff12 132px,#00ff0e 144px,#00ff0b 156px,#00ff08 168px,#00ff04 180px,#00ff00 192px,#00ff00 204px,#00ff00 216px,#00ff00 228px,#00ff00 240px,#00ff00 252px,#08ff00 264px,#17ff00 276px,#25ff00 286px)"></i>
<i style="margin-left:0px;width:289px;background:linear-gradient(90deg,#00ff32,#00ff2f 12px,#00ff2d 24px,#00ff2a 36px,#00ff27 48px,#00ff25 60px,#00ff22 72px,#00ff1f 84px,#00ff1c 96px,#00ff19 108px,#00ff16 120px,#00ff13 132px,#00ff0f 144px,#00ff0c 156px,#00ff09 168px,#00ff05 180px,#00ff01 192px,#00ff00 204px,#00ff00 216px,#00ff00 228px,#00ff00 240px,#00ff00 252px,#09ff00 264px,#18ff00 276px,#29ff00 288px,#2aff00 289px)"></i>
<i style="margin-left:0px;width:291px;background:linear-gradient(90deg,#00ff33,#00ff30 12px,#00ff2e 24px,#00ff2b 36px,#00ff28 48px,#00ff26 60px,#00ff23 72px,#00ff20 84px,#00ff1d 96px,#00ff1a 108px,#00ff17 120px,#00ff14 132px,#00ff11 144px,#00ff0d 156px,#00ff0a 168px,#00ff06 180px,#00ff02 192px,#00ff00 204px,#00ff00 216px,#00ff00 228px,#00ff00 240px,#00ff00 252px,#0aff00 264px,#19ff00 276px,#2aff00 288px,#2eff00 291px)"></i>
<i style="margin-left:0px;width:294px;background:linear-gradient(90deg,#00ff34,#00ff31 12px,#00ff2f 24px,#00ff2c 36px,#00ff2a 48px,#00ff27 60px,#00ff24 72px,#00ff21 84px,#00ff1e 96px,#00ff1b 108px,#00ff18 120px,#00ff15 132px,#00ff12 144px,#00ff0e 156px,#00ff0b 168px,#00ff07 180px,#00ff03 192px,#00ff00 204px,#00ff00 216px,#00ff00 228px,#00ff00 240px,#00ff00 252px,#0bff00 264px,#1bff00 276px,#2bff00 288px,#34ff00 294px)"></i>
<i style="margin-left:0px;width:297px;background:linear-gradient(90deg,#00ff35,#00ff32 12px,#00ff30 24px,#00ff2d 36px,#00ff2b 48px,#00ff28 60px,#00ff25 72px,#00ff22 84px,#00ff1f 96px,#00ff1c 108px,#00ff19 120px,#00ff16 132px,#00ff13 144px,#00ff0f 156px,#00ff0c 168px,#00ff08 180px,#00ff05 192px,#00ff01 204px,#00ff00 216px,#00ff00 228px,#00ff00 240px,#00ff00 252px,#0cff00 264px,#1cff00 276px,#2cff00 288px,#39ff00 297px)"></i>
<i style="margin-left:0px;width:300px;background:linear-gradient(90deg,#00ff36,#00ff34 12px,#00ff31 24px,#00ff2e 36px,#00ff2c 48px,#00ff29 60px,#00ff26 72px,#00ff23 84px,#00ff20 96px,#00ff1d 108px,#00ff1a 120px,#00ff17 132px,#00ff14 144px,#00ff10 156px,#00ff0d 168px,#00ff09 180px,#00ff06 192px,#00ff02 204px,#00ff00 216px,#00ff00 228px,#00ff00 240px,#00ff00 252px,#0dff00 264px,#1dff00 276px,#2eff00 288px,#3fff00 300px)"></i>
<i style="margin-left:0px;width:302px;background:linear-gradient(90deg,#00ff37,#00ff35 12px,#00ff32 24px,#00ff30 36px,#00ff2d 48px,#00ff2a 60px,#00ff27 72px,#00ff25 84px,#00ff22 96px,#00ff1f 108px,#00ff1b 120px,#00ff18 132px,#00ff15 144px,#00ff12 156px,#00ff0e 168px,#00ff0a 180px,#00ff07 192px,#00ff03 204px,#00ff00 216px,#00ff00 228px,#00ff00 240px,#00ff00 252px,#0eff00 264px,#1eff00 276px,#2fff00 288px,#41ff00 300px,#44ff00 302px)"></i>
<i style="margin-left:0px;width:305px;background:linear-gradient(90deg,#00ff38,#00ff36 12px,#00ff33 24px,#00ff31 36px,#00ff2e 48px,#00ff2b 60px,#00ff29 72px,#00ff26 84px,#00ff23 96px,#00ff20 108px,#00ff1d 120px,#00ff19 132px,#00ff16 144px,#00ff13 156px,#00ff0f 168px,#00ff0c 180px,#00ff08 192px,#00ff04 204px,#00ff00 216px,#00ff00 228px,#00ff00 240px,#00ff00 252px,#0fff00 264px,#1fff00 276px,#30ff00 288px,#42ff00 300px,#4aff00 305px)"></i>
<i style="margin-left:0px;width:308px;background:linear-gradient(90deg,#00ff39,#00ff37 12px,#00ff34 24px,#00ff32 36px,#00ff2f 48px,#00ff2c 60px,#00ff2a 72px,#00ff27 84px,#00ff24 96px,#00ff21 108px,#00ff1e 120px,#00ff1b 132px,#00ff17 144px,#00ff14 156px,#00ff10 168px,#00ff0d 180px,#00ff09 192px,#00ff05 204px,#00ff01 216px,#00ff00 228px,#00ff00 240px,#00ff00 252px,#10ff00 264px,#21ff00 276px,#32ff00 288px,#44ff00 300px,#50ff00 308px)"></i>
<i style="margin-left:0px;width:310px;background:linear-gradient(90deg,#00ff3b,#00ff38 12px,#00ff36 24px,#00ff33 36px,#00ff30 48px,#00ff2e 60px,#00ff2b 72px,#00ff28 84px,#00ff25 96px,#00ff22 108px,#00ff1f 120px,#00ff1c 132px,#00ff18 144px,#00ff15 156px,#00ff11 168px,#00ff0e 180px,#00ff0a 192px,#00ff06 204px,#00ff02 216px,#00ff00 228px,#00ff00 240px,#01ff00 252px,#11ff00 264px,#22ff00 276px,#33ff00 288px,#45ff00 300px,#55ff00 310px)"></i>
<i style="margin-left:0px;width:313px;background:linear-gradient(90deg,#00ff3c,#00ff39 12px,#00ff37 24px,#00ff34 36px,#00ff32 48px,#00ff2f 60px,#00ff2c 72px,#00ff29 84px,#00ff26 96px,#00ff23 108px,#00ff20 120px,#00ff1d 132px,#00ff1a 144px,#00ff16 156px,#00ff13 168px,#00ff0f 180px,#00ff0b 192px,#00ff07 204px,#00ff03 216px,#00ff00 228px,#00ff00 240px,#02ff00 252px,#12ff00 264px,#23ff00 276px,#35ff00 288px,#47ff00 300px,#5aff00 312px,#5bff00 313px)"></i>
<i style="margin-left:0px;width:316px;background:linear-gradient(90deg,#00ff3d,#00ff3a 12px,#00ff38 24px,#00ff35 36px,#00ff33 48px,#00ff30 60px,#00ff2d 72px,#00ff2a 84px,#00ff27 96px,#00ff24 108px,#00ff21 120px,#00ff1e 132px,#00ff1b 144px,#00ff17 156px,#00ff14 168px,#00ff10 180px,#00ff0c 192px,#00ff09 204px,#00ff05 216px,#00ff01 228px,#00ff00 240px,#03ff00 252px,#13ff00 264px,#24ff00 276px,#36ff00 288px,#48ff00 300px,#5bff00 312px,#62ff00 316px)"></i>
<i style="margin-left:1px;width:318px;background:linear-gradient(90deg,#00ff3e,#00ff3b 12px,#00ff39 24px,#00ff36 36px,#00ff34 48px,#00ff31 60px,#00ff2e 72px,#00ff2b 84px,#00ff28 96px,#00ff25 108px,#00ff22 120px,#00ff1f 132px,#00ff1c 144px,#00ff18 156px,#00ff15 168px,#00ff11 180px,#00ff0d 192px,#00ff09 204px,#00ff05 216px,#00ff01 228px,#00ff00 240px,#05ff00 252px,#16ff00 264px,#27ff00 276px,#39ff00 288px,#4bff00 300px,#5fff00 312px,#69ff00 318px)"></i>
<i style="margin-left:1px;width:320px;background:linear-gradient(90deg,#00ff3f,#00ff3d 12px,#00ff3a 24px,#00ff38 36px,#00ff35 48px,#00ff32 60px,#00ff2f 72px,#00ff2c 84px,#00ff2a 96px,#00ff27 108px,#00ff23 120px,#00ff20 132px,#00ff1d 144px,#00ff19 156px,#00ff16 168px,#00ff12 180px,#00ff0f 192px,#00ff0b 204px,#00ff07 216px,#00ff03 228px,#00ff00 240px,#06ff00 252px,#17ff00 264px,#28ff00 276px,#3aff00 288px,#4dff00 300px,#60ff00 312px,#6eff00 320px)"></i>
<i style="margin-left:1px;width:323px;background:linear-gradient(90deg,#00ff40,#00ff3e 12px,#00ff3b 24px,#00ff39 36px,#00ff36 48px,#00ff33 60px,#00ff31 72px,#00ff2e 84px,#00ff2b 96px,#00ff28 108px,#00ff25 120px,#00ff21 132px,#00ff1e 144px,#00ff1b 156px,#00ff17 168px,#00ff14 180px,#00ff10 192px,#00ff0c 204px,#00ff08 216px,#00ff04 228px,#00ff00 240px,#07ff00 252px,#18ff00 264px,#2aff00 276px,#3cff00 288px,#4fff00 300px,#62ff00 312px,#75ff00 323px)"></i>
<i style="margin-left:1px;width:326px;background:linear-gradient(90deg,#00ff41,#00ff3f 12px,#00ff3d 24px,#00ff3a 36px,#00ff37 48px,#00ff35 60px,#00ff32 72px,#00ff2f 84px,#00ff2c 96px,#00ff29 108px,#00ff26 120px,#00ff23 132px,#00ff1f 144px,#00ff1c 156px,#00ff18 168px,#00ff15 180px,#00ff11 192px,#00ff0d 204px,#00ff09 216px,#00ff05 228px,#00ff01 240px,#08ff00 252px,#19ff00 264px,#2bff00 276px,#3dff00 288px,#50ff00 300px,#64ff00 312px,#79ff00 324px,#7cff00 326px)"></i>
<i style="margin-left:1px;width:328px;background:linear-gradient(90deg,#00ff43,#00ff40 12px,#00ff3e 24px,#00ff3b 36px,#00ff39 48px,#00ff36 60px,#00ff33 72px,#00ff30 84px,#00ff2d 96px,#00ff2a 108px,#00ff27 120px,#00ff24 132px,#00ff21 144px,#00ff1d 156px,#00ff1a 168px,#00ff16 180px,#00ff12 192px,#00ff0e 204px,#00ff0a 216px,#00ff06 228px,#00ff02 240px,#09ff00 252px,#1bff00 264px,#2cff00 276px,#3fff00 288px,#52ff00 300px,#66ff00 312px,#7bff00 324px,#82ff00 328px)"></i>
<i style="margin-left:1px;width:331px;background:linear-gradient(90deg,#00ff44,#00ff42 12px,#00ff3f 24px,#00ff3c 36px,#00ff3a 48px,#00ff37 60px,#00ff34 72px,#00ff32 84px,#00ff2f 96px,#00ff2c 108px,#00ff28 120px,#00ff25 132px,#00ff22 144px,#00ff1e 156px,#00ff1b 168px,#00ff17 180px,#00ff13 192px,#00ff10 204px,#00ff0c 216px,#00ff07 228px,#00ff03 240px,#0aff00 252px,#1cff00 264px,#2eff00 276px,#40ff00 288px,#54ff00 300px,#68ff00 312px,#7dff00 324px,#8aff00 331px)"></i>
<i style="margin-left:1px;width:334px;background:linear-gradient(90deg,#00ff45,#00ff43 12px,#00ff40 24px,#00ff3e 36px,#00ff3b 48px,#00ff38 60px,#00ff36 72px,#00ff33 84px,#00ff30 96px,#00ff2d 108px,#00ff2a 120px,#00ff26 132px,#00ff23 144px,#00ff20 156px,#00ff1c 168px,#00ff19 180px,#00ff15 192px,#00ff11 204px,#00ff0d 216px,#00ff09 228px,#00ff04 240px,#0bff00 252px,#1dff00 264px,#2fff00 276px,#42ff00 288px,#56ff00 300px,#6aff00 312px,#7fff00 324px,#91ff00 334px)"></i>
<i style="margin-left:1px;width:336px;background:linear-gradient(90deg,#00ff47,#00ff44 12px,#00ff42 24px,#00ff3f 36px,#00ff3c 48px,#00ff3a 60px,#00ff37 72px,#00ff34 84px,#00ff31 96px,#00ff2e 108px,#00ff2b 120px,#00ff28 132px,#00ff24 144px,#00ff21 156px,#00ff1d 168px,#00ff1a 180px,#00ff16 192px,#00ff12 204px,#00ff0e 216px,#00ff0a 228px,#00ff06 240px,#0dff01 252px,#1eff00 264px,#31ff00 276px,#44ff00 288px,#57ff00 300px,#6cff00 312px,#81ff00 324px,#98ff00 336px)"></i>
<i style="margin-left:1px;width:339px;background:linear-gradient(90deg,#00ff48,#00ff45 12px,#00ff43 24px,#00ff40 36px,#00ff3e 48px,#00ff3b 60px,#00ff38 72px,#00ff35 84px,#00ff32 96px,#00ff2f 108px,#00ff2c 120px,#00ff29 132px,#00ff26 144px,#00ff22 156px,#00ff1f 168px,#00ff1b 180px,#00ff17 192px,#00ff13 204px,#00ff0f 216px,#00ff0b 228px,#00ff07 240px,#0eff02 252px,#20ff00 264px,#32ff00 276px,#45ff00 288px,#59ff00 300px,#6eff00 312px,#84ff00 324px,#9aff00 336px,#a0ff00 339px)"></i>
<i style="margin-left:1px;width:342px;background:linear-gradient(90deg,#00ff49,#00ff47 12px,#00ff44 24px,#00ff42 36px,#00ff3f 48px,#00ff3c 60px,#00ff3a 72px,#00ff37 84px,#00ff34 96px,#00ff31 108px,#00ff2e 120px,#00ff2a 132px,#00ff27 144px,#00ff24 156px,#00ff20 168px,#00ff1c 180px,#00ff19 192px,#00ff15 204px,#00ff11 216px,#00ff0d 228px,#00ff08 240px,#0fff04 252px,#21ff00 264px,#34ff00 276px,#47ff00 288px,#5bff00 300px,#70ff00 312px,#86ff00 324px,#9dff00 336px,#a8ff00 342px)"></i>
<i style="margin-left:2px;width:343px;background:linear-gradient(90deg,#00ff4a,#00ff48 12px,#00ff45 24px,#00ff43 36px,#00ff40 48px,#00ff3d 60px,#00ff3b 72px,#00ff38 84px,#00ff35 96px,#00ff32 108px,#00ff2f 120px,#00ff2c 132px,#00ff28 144px,#00ff25 156px,#00ff21 168px,#00ff1e 180px,#00ff1a 192px,#00ff16 204px,#00ff12 216px,#00ff0e 228px,#00ff09 240px,#12ff05 252px,#24ff00 264px,#37ff00 276px,#4aff00 288px,#5fff00 300px,#74ff00 312px,#8aff00 324px,#a1ff00 336px,#afff00 343px)"></i>
<i style="margin-left:2px;width:346px;background:linear-gradient(90deg,#00ff4c,#00ff49 12px,#00ff47 24px,#00ff44 36px,#00ff42 48px,#00ff3f 60px,#00ff3c 72px,#00ff39 84px,#00ff36 96px,#00ff33 108px,#00ff30 120px,#00ff2d 132px,#00ff2a 144px,#00ff26 156px,#00ff23 168px,#00ff1f 180px,#00ff1b 192px,#00ff17 204px,#00ff13 216px,#00ff0f 228px,#01ff0b 240px,#13ff06 252px,#25ff01 264px,#38ff00 276px,#4cff00 288px,#61ff00 300px,#76ff00 312px,#8cff00 324px,#a4ff00 336px,#b8ff00 346px)"></i>
<i style="margin-left:2px;width:349px;background:linear-gradient(90deg,#00ff4d,#00ff4b 12px,#00ff48 24px,#00ff46 36px,#00ff43 48px,#00ff40 60px,#00ff3d 72px,#00ff3b 84px,#00ff38 96px,#00ff35 108px,#00ff32 120px,#00ff2e 132px,#00ff2b 144px,#00ff28 156px,#00ff24 168px,#00ff20 180px,#00ff1d 192px,#00ff19 204px,#00ff15 216px,#00ff10 228px,#02ff0c 240px,#14ff07 252px,#27ff03 264px,#3aff00 276px,#4eff00 288px,#63ff00 300px,#78ff00 312px,#8fff00 324px,#a6ff00 336px,#bfff00 348px,#c1ff00 349px)"></i>
<i style="margin-left:2px;width:351px;background:linear-gradient(90deg,#00ff4e,#00ff4c 12px,#00ff49 24px,#00ff47 36px,#00ff44 48px,#00ff42 60px,#00ff3f 72px,#00ff3c 84px,#00ff39 96px,#00ff36 108px,#00ff33 120px,#00ff30 132px,#00ff2c 144px,#00ff29 156px,#00ff25 168px,#00ff22 180px,#00ff1e 192px,#00ff1a 204px,#00ff16 216px,#00ff12 228px,#03ff0d 240px,#15ff09 252px,#28ff04 264px,#3bff00 276px,#50ff00 288px,#65ff00 300px,#7aff00 312px,#91ff00 324px,#a9ff00 336px,#c2ff00 348px,#c8ff00 351px)"></i>
<i style="margin-left:2px;width:354px;background:linear-gradient(90deg,#00ff50,#00ff4d 12px,#00ff4b 24px,#00ff48 36px,#00ff46 48px,#00ff43 60px,#00ff40 72px,#00ff3d 84px,#00ff3a 96px,#00ff37 108px,#00ff34 120px,#00ff31 132px,#00ff2e 144px,#00ff2a 156px,#00ff27 168px,#00ff23 180px,#00ff1f 192px,#00ff1b 204px,#00ff17 216px,#00ff13 228px,#04ff0f 240px,#17ff0a 252px,#29ff05 264px,#3dff01 276px,#51ff00 288px,#67ff00 300px,#7dff00 312px,#94ff00 324px,#acff00 336px,#c5ff00 348px,#d2ff00 354px)"></i>
<i style="margin-left:2px;width:357px;background:linear-gradient(90deg,#00ff51,#00ff4f 12px,#00ff4c 24px,#00ff4a 36px,#00ff47 48px,#00ff44 60px,#00ff42 72px,#00ff3f 84px,#00ff3c 96px,#00ff39 108px,#00ff36 120px,#00ff33 132px,#00ff2f 144px,#00ff2c 156px,#00ff28 168px,#00ff25 180px,#00ff21 192px,#00ff1d 204px,#00ff19 216px,#00ff15 228px,#05ff10 240px,#18ff0c 252px,#2bff07 264px,#3fff02 276px,#53ff00 288px,#69ff00 300px,#7fff00 312px,#96ff00 324px,#afff00 336px,#c8ff00 348px,#dcff00 357px)"></i>
<i style="margin-left:3px;width:358px;background:linear-gradient(90deg,#00ff52,#00ff50 12px,#00ff4d 24px,#00ff4b 36px,#00ff48 48px,#00ff46 60px,#00ff43 72px,#00ff40 84px,#00ff3d 96px,#00ff3a 108px,#00ff37 120px,#00ff34 132px,#00ff30 144px,#00ff2d 156px,#00ff29 168px,#00ff26 180px,#00ff22 192px,#00ff1e 204px,#00ff1a 216px,#00ff16 228px,#08ff11 240px,#1bff0d 252px,#2eff08 264px,#42ff03 276px,#57ff00 288px,#6dff00 300px,#83ff00 312px,#9bff00 324px,#b4ff00 336px,#ceff00 348px,#e4ff00 358px)"></i>
<i style="margin-left:3px;width:361px;background:linear-gradient(90deg,#00ff54,#00ff51 12px,#00ff4f 24px,#00ff4c 36px,#00ff4a 48px,#00ff47 60px,#00ff44 72px,#00ff42 84px,#00ff3f 96px,#00ff3c 108px,#00ff38 120px,#00ff35 132px,#00ff32 144px,#00ff2e 156px,#00ff2b 168px,#00ff27 180px,#00ff23 192px,#00ff1f 204px,#00ff1b 216px,#00ff17 228px,#09ff13 240px,#1cff0e 252px,#2fff09 264px,#44ff04 276px,#59ff00 288px,#6fff00 300px,#86ff00 312px,#9eff00 324px,#b7ff00 336px,#d1ff00 348px,#ecff00 360px,#efff00 361px)"></i>
<i style="margin-left:3px;width:364px;background:linear-gradient(90deg,#00ff55,#00ff53 12px,#00ff50 24px,#00ff4e 36px,#00ff4b 48px,#00ff49 60px,#00ff46 72px,#00ff43 84px,#00ff40 96px,#00ff3d 108px,#00ff3a 120px,#00ff37 132px,#00ff33 144px,#00ff30 156px,#00ff2c 168px,#00ff29 180px,#00ff25 192px,#00ff21 204px,#00ff1d 216px,#00ff19 228px,#0aff14 240px,#1dff10 252px,#31ff0b 264px,#45ff06 276px,#5bff01 288px,#71ff00 300px,#88ff00 312px,#a0ff00 324px,#baff00 336px,#d4ff00 348px,#f0ff00 360px,#f9ff00 364px)"></i>
<i style="margin-left:3px;width:366px;background:linear-gradient(90deg,#00ff57,#00ff54 12px,#00ff52 24px,#00ff4f 36px,#00ff4d 48px,#00ff4a 60px,#00ff47 72px,#00ff44 84px,#00ff42 96px,#00ff3f 108px,#00ff3b 120px,#00ff38 132px,#00ff35 144px,#00ff31 156px,#00ff2e 168px,#00ff2a 180px,#00ff26 192px,#00ff23 204px,#00ff1e 216px,#00ff1a 228px,#0cff16 240px,#1fff11 252px,#33ff0c 264px,#47ff07 276px,#5dff02 288px,#73ff00 300px,#8bff00 312px,#a3ff00 324px,#bdff00 336px,#d7ff00 348px,#f4ff00 360px,#fffc00 366px)"></i>
<i style="margin-left:3px;width:369px;background:linear-gradient(90deg,#00ff58,#00ff56 12px,#00ff53 24px,#00ff51 36px,#00ff4e 48px,#00ff4c 60px,#00ff49 72px,#00ff46 84px,#00ff43 96px,#00ff40 108px,#00ff3d 120px,#00ff3a 132px,#00ff36 144px,#00ff33 156px,#00ff2f 168px,#00ff2c 180px,#00ff28 192px,#00ff24 204px,#00ff20 216px,#00ff1c 228px,#0dff17 240px,#20ff13 252px,#34ff0e 264px,#49ff09 276px,#5fff04 288px,#75ff00 300px,#8dff00 312px,#a6ff00 324px,#c0ff00 336px,#dbff00 348px,#f7ff00 360px,#fff100 369px)"></i>
<i style="margin-left:3px;width:372px;background:linear-gradient(90deg,#00ff5a,#00ff57 12px,#00ff55 24px,#00ff52 36px,#00ff50 48px,#00ff4d 60px,#00ff4a 72px,#00ff48 84px,#00ff45 96px,#00ff42 108px,#00ff3f 120px,#00ff3b 132px,#00ff38 144px,#00ff35 156px,#00ff31 168px,#00ff2d 180px,#00ff2a 192px,#00ff26 204px,#00ff22 216px,#00ff1d 228px,#0eff19 240px,#22ff14 252px,#36ff0f 264px,#4bff0a 276px,#61ff05 288px,#78ff00 300px,#90ff00 312px,#a9ff00 324px,#c3ff00 336px,#deff00 348px,#fbff00 360px,#ffe700 372px)"></i>
<i style="margin-left:4px;width:373px;background:linear-gradient(90deg,#00ff5b,#00ff59 12px,#00ff56 24px,#00ff54 36px,#00ff51 48px,#00ff4e 60px,#00ff4c 72px,#00ff49 84px,#00ff46 96px,#00ff43 108px,#00ff40 120px,#00ff3d 132px,#00ff39 144px,#00ff36 156px,#00ff32 168px,#00ff2f 180px,#00ff2b 192px,#00ff27 204px,#00ff23 216px,#00ff1e 228px,#11ff1a 240px,#25ff15 252px,#39ff11 264px,#4eff0c 276px,#65ff06 288px,#7cff01 300px,#94ff00 312px,#aeff00 324px,#c8ff00 336px,#e4ff00 348px,#fffc00 360px,#ffe100 372px,#ffdf00 373px)"></i>
<i style="margin-left:4px;width:376px;background:linear-gradient(90deg,#00ff5c,#00ff5a 12px,#00ff58 24px,#00ff55 36px,#00ff53 48px,#00ff50 60px,#00ff4d 72px,#00ff4a 84px,#00ff48 96px,#00ff45 108px,#00ff41 120px,#00ff3e 132px,#00ff3b 144px,#00ff38 156px,#00ff34 168px,#00ff30 180px,#00ff2c 192px,#00ff29 204px,#00ff24 216px,#00ff20 228px,#12ff1c 240px,#26ff17 252px,#3bff12 264px,#50ff0d 276px,#67ff08 288px,#7eff02 300px,#97ff00 312px,#b1ff00 324px,#ccff00 336px,#e8ff00 348px,#fff800 360px,#ffde00 372px,#ffd600 376px)"></i>
<i style="margin-left:4px;width:379px;background:linear-gradient(90deg,#00ff5e,#00ff5c 12px,#00ff59 24px,#00ff57 36px,#00ff54 48px,#00ff52 60px,#00ff4f 72px,#00ff4c 84px,#00ff49 96px,#00ff46 108px,#00ff43 120px,#00ff40 132px,#00ff3d 144px,#00ff39 156px,#00ff36 168px,#00ff32 180px,#00ff2e 192px,#00ff2a 204px,#00ff26 216px,#00ff22 228px,#14ff1d 240px,#28ff19 252px,#3dff14 264px,#52ff0f 276px,#69ff0a 288px,#81ff04 300px,#9aff00 312px,#b4ff00 324px,#cfff00 336px,#ecff00 348px,#fff500 360px,#ffdb00 372px,#ffcd00 379px)"></i>
<i style="margin-left:4px;width:381px;background:linear-gradient(90deg,#00ff5f,#00ff5d 12px,#00ff5b 24px,#00ff58 36px,#00ff56 48px,#00ff53 60px,#00ff50 72px,#00ff4e 84px,#00ff4b 96px,#00ff48 108px,#00ff45 120px,#00ff42 132px,#00ff3e 144px,#00ff3b 156px,#00ff37 168px,#00ff34 180px,#00ff30 192px,#00ff2c 204px,#00ff28 216px,#02ff23 228px,#15ff1f 240px,#29ff1a 252px,#3eff15 264px,#54ff10 276px,#6bff0b 288px,#83ff06 300px,#9cff00 312px,#b7ff00 324px,#d2ff00 336px,#efff00 348px,#fff100 360px,#ffd700 372px,#ffc700 381px)"></i>
<i style="margin-left:5px;width:383px;background:linear-gradient(90deg,#00ff61,#00ff5f 12px,#00ff5c 24px,#00ff5a 36px,#00ff57 48px,#00ff55 60px,#00ff52 72px,#00ff4f 84px,#00ff4c 96px,#00ff49 108px,#00ff46 120px,#00ff43 132px,#00ff40 144px,#00ff3c 156px,#00ff39 168px,#00ff35 180px,#00ff31 192px,#00ff2d 204px,#00ff29 216px,#04ff25 228px,#18ff20 240px,#2cff1c 252px,#42ff17 264px,#58ff12 276px,#6fff0c 288px,#88ff07 300px,#a1ff01 312px,#bcff00 324px,#d8ff00 336px,#f6ff00 348px,#ffeb00 360px,#ffd200 372px,#ffbe00 383px)"></i>
<i style="margin-left:5px;width:386px;background:linear-gradient(90deg,#00ff62,#00ff60 12px,#00ff5e 24px,#00ff5b 36px,#00ff59 48px,#00ff56 60px,#00ff54 72px,#00ff51 84px,#00ff4e 96px,#00ff4b 108px,#00ff48 120px,#00ff45 132px,#00ff41 144px,#00ff3e 156px,#00ff3a 168px,#00ff37 180px,#00ff33 192px,#00ff2f 204px,#00ff2b 216px,#06ff27 228px,#19ff22 240px,#2eff1d 252px,#44ff18 264px,#5aff13 276px,#72ff0e 288px,#8aff09 300px,#a4ff03 312px,#bfff00 324px,#dcff00 336px,#faff00 348px,#ffe700 360px,#ffcf00 372px,#ffba00 384px,#ffb700 386px)"></i>
<i style="margin-left:5px;width:388px;background:linear-gradient(90deg,#00ff64,#00ff62 12px,#00ff5f 24px,#00ff5d 36px,#00ff5a 48px,#00ff58 60px,#00ff55 72px,#00ff52 84px,#00ff50 96px,#00ff4d 108px,#00ff4a 120px,#00ff46 132px,#00ff43 144px,#00ff40 156px,#00ff3c 168px,#00ff38 180px,#00ff35 192px,#00ff31 204px,#00ff2d 216px,#07ff28 228px,#1bff24 240px,#30ff1f 252px,#46ff1a 264px,#5cff15 276px,#74ff10 288px,#8dff0a 300px,#a7ff04 312px,#c3ff00 324px,#e0ff00 336px,#feff00 348px,#ffe300 360px,#ffcb00 372px,#ffb700 384px,#ffb100 388px)"></i>
<i style="margin-left:5px;width:391px;background:linear-gradient(90deg,#00ff66,#00ff63 12px,#00ff61 24px,#00ff5f 36px,#00ff5c 48px,#00ff5a 60px,#00ff57 72px,#00ff54 84px,#00ff51 96px,#00ff4e 108px,#00ff4b 120px,#00ff48 132px,#00ff45 144px,#00ff41 156px,#00ff3e 168px,#00ff3a 180px,#00ff36 192px,#00ff32 204px,#00ff2e 216px,#08ff2a 228px,#1cff26 240px,#31ff21 252px,#47ff1c 264px,#5eff17 276px,#77ff12 288px,#90ff0c 300px,#aaff06 312px,#c6ff00 324px,#e3ff00 336px,#fffc00 348px,#ffe000 360px,#ffc800 372px,#ffb400 384px,#ffaa00 391px)"></i>
<i style="margin-left:6px;width:392px;background:linear-gradient(90deg,#00ff67,#00ff65 12px,#00ff63 24px,#00ff60 36px,#00ff5e 48px,#00ff5b 60px,#00ff58 72px,#00ff56 84px,#00ff53 96px,#00ff50 108px,#00ff4d 120px,#00ff4a 132px,#00ff46 144px,#00ff43 156px,#00ff3f 168px,#00ff3c 180px,#00ff38 192px,#00ff34 204px,#00ff30 216px,#0bff2b 228px,#20ff27 240px,#35ff22 252px,#4bff1d 264px,#63ff18 276px,#7bff13 288px,#95ff0d 300px,#b0ff07 312px,#ccff01 324px,#eaff00 336px,#fff500 348px,#ffda00 360px,#ffc300 372px,#ffb000 384px,#ffa400 392px)"></i>
<i style="margin-left:6px;width:395px;background:linear-gradient(90deg,#00ff69,#00ff67 12px,#00ff64 24px,#00ff62 36px,#00ff5f 48px,#00ff5d 60px,#00ff5a 72px,#00ff57 84px,#00ff55 96px,#00ff52 108px,#00ff4f 120px,#00ff4b 132px,#00ff48 144px,#00ff45 156px,#00ff41 168px,#00ff3e 180px,#00ff3a 192px,#00ff36 204px,#00ff32 216px,#0cff2d 228px,#21ff29 240px,#37ff24 252px,#4dff1f 264px,#65ff1a 276px,#7eff15 288px,#98ff0f 300px,#b3ff09 312px,#d0ff03 324px,#eeff00 336px,#fff100 348px,#ffd700 360px,#ffc000 372px,#ffad00 384px,#ff9e00 395px)"></i>
<i style="margin-left:6px;width:398px;background:linear-gradient(90deg,#00ff6b,#00ff68 12px,#00ff66 24px,#00ff64 36px,#00ff61 48px,#00ff5f 60px,#00ff5c 72px,#00ff59 84px,#00ff56 96px,#00ff53 108px,#00ff50 120px,#00ff4d 132px,#00ff4a 144px,#00ff47 156px,#00ff43 168px,#00ff3f 180px,#00ff3c 192px,#00ff38 204px,#00ff34 216px,#0eff2f 228px,#23ff2b 240px,#38ff26 252px,#4fff21 264px,#67ff1c 276px,#80ff17 288px,#9bff11 300px,#b6ff0b 312px,#d3ff05 324px,#f2ff00 336px,#ffed00 348px,#ffd300 360px,#ffbd00 372px,#ffaa00 384px,#ff9a00 396px,#ff9700 398px)"></i>
<i style="margin-left:6px;width:400px;background:linear-gradient(90deg,#00ff6c,#00ff6a 12px,#00ff68 24px,#00ff65 36px,#00ff63 48px,#00ff60 60px,#00ff5e 72px,#00ff5b 84px,#00ff58 96px,#00ff55 108px,#00ff52 120px,#00ff4f 132px,#00ff4c 144px,#00ff48 156px,#00ff45 168px,#00ff41 180px,#00ff3d 192px,#00ff3a 204px,#00ff35 216px,#0fff31 228px,#24ff2d 240px,#3aff28 252px,#51ff23 264px,#69ff1e 276px,#83ff19 288px,#9dff13 300px,#b9ff0d 312px,#d7ff07 324px,#f6ff00 336px,#ffe900 348px,#ffd000 360px,#ffba00 372px,#ffa700 384px,#ff9700 396px,#ff9300 400px)"></i>
<i style="margin-left:7px;width:402px;background:linear-gradient(90deg,#00ff6e,#00ff6c 12px,#00ff69 24px,#00ff67 36px,#00ff64 48px,#00ff62 60px,#00ff5f 72px,#00ff5d 84px,#00ff5a 96px,#00ff57 108px,#00ff54 120px,#00ff51 132px,#00ff4d 144px,#00ff4a 156px,#00ff47 168px,#00ff43 180px,#00ff3f 192px,#00ff3b 204px,#00ff37 216px,#12ff33 228px,#28ff2e 240px,#3eff2a 252px,#55ff25 264px,#6eff1f 276px,#88ff1a 288px,#a3ff14 300px,#bfff0e 312px,#ddff08 324px,#fdff01 336px,#ffe300 348px,#ffca00 360px,#ffb500 372px,#ffa300 384px,#ff9400 396px,#ff8d00 402px)"></i>
<i style="margin-left:7px;width:405px;background:linear-gradient(90deg,#00ff70,#00ff6d 12px,#00ff6b 24px,#00ff69 36px,#00ff66 48px,#00ff64 60px,#00ff61 72px,#00ff5e 84px,#00ff5c 96px,#00ff59 108px,#00ff56 120px,#00ff53 132px,#00ff4f 144px,#00ff4c 156px,#00ff48 168px,#00ff45 180px,#00ff41 192px,#00ff3d 204px,#00ff39 216px,#14ff35 228px,#29ff30 240px,#40ff2b 252px,#58ff27 264px,#70ff21 276px,#8aff1c 288px,#a6ff16 300px,#c3ff10 312px,#e1ff0a 324px,#fffd03 336px,#ffe000 348px,#ffc700 360px,#ffb200 372px,#ffa100 384px,#ff9100 396px,#ff8700 405px)"></i>
<i style="margin-left:7px;width:407px;background:linear-gradient(90deg,#00ff71,#00ff6f 12px,#00ff6d 24px,#00ff6b 36px,#00ff68 48px,#00ff66 60px,#00ff63 72px,#00ff60 84px,#00ff5e 96px,#00ff5b 108px,#00ff58 120px,#00ff55 132px,#00ff51 144px,#00ff4e 156px,#00ff4a 168px,#00ff47 180px,#00ff43 192px,#00ff3f 204px,#00ff3b 216px,#15ff37 228px,#2bff32 240px,#42ff2e 252px,#5aff29 264px,#73ff23 276px,#8dff1e 288px,#a9ff18 300px,#c6ff12 312px,#e5ff0c 324px,#fff905 336px,#ffdc00 348px,#ffc400 360px,#ffaf00 372px,#ff9e00 384px,#ff8f00 396px,#ff8300 407px)"></i>
<i style="margin-left:7px;width:410px;background:linear-gradient(90deg,#00ff73,#00ff71 12px,#00ff6f 24px,#00ff6c 36px,#00ff6a 48px,#00ff67 60px,#00ff65 72px,#00ff62 84px,#00ff5f 96px,#00ff5d 108px,#00ff5a 120px,#00ff56 132px,#00ff53 144px,#00ff50 156px,#00ff4c 168px,#00ff49 180px,#00ff45 192px,#00ff41 204px,#01ff3d 216px,#16ff39 228px,#2dff34 240px,#44ff30 252px,#5cff2b 264px,#75ff25 276px,#90ff20 288px,#acff1a 300px,#caff14 312px,#e9ff0e 324px,#fff407 336px,#ffd800 348px,#ffc100 360px,#ffad00 372px,#ff9b00 384px,#ff8c00 396px,#ff7f00 408px,#ff7d00 410px)"></i>
<i style="margin-left:8px;width:412px;background:linear-gradient(90deg,#00ff75,#00ff73 12px,#00ff70 24px,#00ff6e 36px,#00ff6c 48px,#00ff69 60px,#00ff67 72px,#00ff64 84px,#00ff61 96px,#00ff5e 108px,#00ff5b 120px,#00ff58 132px,#00ff55 144px,#00ff52 156px,#00ff4e 168px,#00ff4b 180px,#00ff47 192px,#00ff43 204px,#04ff3f 216px,#1aff3a 228px,#30ff36 240px,#48ff31 252px,#60ff2c 264px,#7aff27 276px,#95ff22 288px,#b2ff1c 300px,#d0ff16 312px,#f0ff10 324px,#ffee08 336px,#ffd201 348px,#ffbc00 360px,#ffa800 372px,#ff9700 384px,#ff8900 396px,#ff7c00 408px,#ff7800 412px)"></i>
<i style="margin-left:8px;width:414px;background:linear-gradient(90deg,#00ff77,#00ff75 12px,#00ff72 24px,#00ff70 36px,#00ff6e 48px,#00ff6b 60px,#00ff69 72px,#00ff66 84px,#00ff63 96px,#00ff60 108px,#00ff5d 120px,#00ff5a 132px,#00ff57 144px,#00ff54 156px,#00ff50 168px,#00ff4d 180px,#00ff49 192px,#00ff45 204px,#06ff41 216px,#1bff3d 228px,#32ff38 240px,#4aff33 252px,#63ff2e 264px,#7dff29 276px,#98ff24 288px,#b5ff1e 300px,#d4ff18 312px,#f4ff12 324px,#ffea0a 336px,#ffcf03 348px,#ffb800 360px,#ffa500 372px,#ff9500 384px,#ff8700 396px,#ff7a00 408px,#ff7400 414px)"></i>
<i style="margin-left:8px;width:417px;background:linear-gradient(90deg,#00ff79,#00ff76 12px,#00ff74 24px,#00ff72 36px,#00ff70 48px,#00ff6d 60px,#00ff6b 72px,#00ff68 84px,#00ff65 96px,#00ff62 108px,#00ff5f 120px,#00ff5c 132px,#00ff59 144px,#00ff56 156px,#00ff52 168px,#00ff4f 180px,#00ff4b 192px,#00ff47 204px,#07ff43 216px,#1dff3f 228px,#34ff3a 240px,#4cff36 252px,#65ff31 264px,#80ff2b 276px,#9bff26 288px,#b9ff20 300px,#d8ff1a 312px,#f9ff14 324px,#ffe60c 336px,#ffcb05 348px,#ffb500 360px,#ffa200 372px,#ff9200 384px,#ff8400 396px,#ff7800 408px,#ff7000 417px)"></i>
<i style="margin-left:9px;width:418px;background:linear-gradient(90deg,#00ff7a,#00ff78 12px,#00ff76 24px,#00ff74 36px,#00ff71 48px,#00ff6f 60px,#00ff6c 72px,#00ff6a 84px,#00ff67 96px,#00ff64 108px,#00ff61 120px,#00ff5e 132px,#00ff5b 144px,#00ff58 156px,#00ff54 168px,#00ff51 180px,#00ff4d 192px,#00ff49 204px,#0aff45 216px,#20ff41 228px,#38ff3c 240px,#50ff37 252px,#6aff32 264px,#85ff2d 276px,#a1ff28 288px,#bfff22 300px,#deff1c 312px,#fffe15 324px,#ffdf0d 336px,#ffc606 348px,#ffb000 360px,#ff9e00 372px,#ff8f00 384px,#ff8100 396px,#ff7500 408px,#ff6c00 418px)"></i>
<i style="margin-left:9px;width:421px;background:linear-gradient(90deg,#00ff7c,#00ff7a 12px,#00ff78 24px,#00ff76 36px,#00ff73 48px,#00ff71 60px,#00ff6e 72px,#00ff6c 84px,#00ff69 96px,#00ff66 108px,#00ff63 120px,#00ff60 132px,#00ff5d 144px,#00ff5a 156px,#00ff56 168px,#00ff53 180px,#00ff4f 192px,#00ff4b 204px,#0cff47 216px,#22ff43 228px,#3aff3e 240px,#52ff3a 252px,#6cff35 264px,#88ff30 276px,#a4ff2a 288px,#c3ff24 300px,#e3ff1e 312px,#fffa17 324px,#ffdb0f 336px,#ffc207 348px,#ffad01 360px,#ff9c00 372px,#ff8c00 384px,#ff7f00 396px,#ff7300 408px,#ff6800 420px,#ff6800 421px)"></i>
<i style="margin-left:9px;width:424px;background:linear-gradient(90deg,#00ff7e,#00ff7c 12px,#00ff7a 24px,#00ff78 36px,#00ff75 48px,#00ff73 60px,#00ff70 72px,#00ff6e 84px,#00ff6b 96px,#00ff68 108px,#00ff65 120px,#00ff62 132px,#00ff5f 144px,#00ff5c 156px,#00ff59 168px,#00ff55 180px,#00ff51 192px,#00ff4d 204px,#0dff49 216px,#24ff45 228px,#3cff41 240px,#55ff3c 252px,#6fff37 264px,#8aff32 276px,#a8ff2c 288px,#c6ff27 300px,#e7ff21 312px,#fff519 324px,#ffd810 336px,#ffbf09 348px,#ffaa03 360px,#ff9900 372px,#ff8a00 384px,#ff7c00 396px,#ff7100 408px,#ff6600 420px,#ff6300 424px)"></i>
<i style="margin-left:10px;width:425px;background:linear-gradient(90deg,#00ff80,#00ff7e 12px,#00ff7c 24px,#00ff79 36px,#00ff77 48px,#00ff75 60px,#00ff72 72px,#00ff70 84px,#00ff6d 96px,#00ff6a 108px,#00ff67 120px,#00ff64 132px,#00ff61 144px,#00ff5e 156px,#00ff5b 168px,#00ff57 180px,#00ff53 192px,#00ff4f 204px,#10ff4b 216px,#27ff47 228px,#40ff43 240px,#59ff3e 252px,#74ff39 264px,#90ff34 276px,#adff2e 288px,#cdff29 300px,#eeff22 312px,#ffee1a 324px,#ffd211 336px,#ffba0a 348px,#ffa604 360px,#ff9500 372px,#ff8600 384px,#ff7900 396px,#ff6e00 408px,#ff6400 420px,#ff6000 425px)"></i>
<i style="margin-left:10px;width:428px;background:linear-gradient(90deg,#00ff82,#00ff80 12px,#00ff7e 24px,#00ff7c 36px,#00ff79 48px,#00ff77 60px,#00ff74 72px,#00ff72 84px,#00ff6f 96px,#00ff6c 108px,#00ff6a 120px,#00ff67 132px,#00ff63 144px,#00ff60 156px,#00ff5d 168px,#00ff59 180px,#00ff56 192px,#00ff52 204px,#12ff4e 216px,#29ff49 228px,#42ff45 240px,#5bff40 252px,#76ff3b 264px,#93ff36 276px,#b1ff31 288px,#d1ff2b 300px,#f2ff25 312px,#ffea1c 324px,#ffce13 336px,#ffb70c 348px,#ffa305 360px,#ff9200 372px,#ff8400 384px,#ff7700 396px,#ff6c00 408px,#ff6200 420px,#ff5c00 428px)"></i>
<i style="margin-left:10px;width:431px;background:linear-gradient(90deg,#00ff84,#00ff82 12px,#00ff80 24px,#00ff7e 36px,#00ff7b 48px,#00ff79 60px,#00ff77 72px,#00ff74 84px,#00ff71 96px,#00ff6f 108px,#00ff6c 120px,#00ff69 132px,#00ff66 144px,#00ff63 156px,#00ff5f 168px,#00ff5c 180px,#00ff58 192px,#00ff54 204px,#13ff50 216px,#2bff4c 228px,#44ff47 240px,#5eff43 252px,#79ff3e 264px,#96ff39 276px,#b5ff33 288px,#d5ff2d 300px,#f7ff27 312px,#ffe61e 324px,#ffca15 336px,#ffb30d 348px,#ffa007 360px,#ff9001 372px,#ff8100 384px,#ff7500 396px,#ff6a00 408px,#ff6000 420px,#ff5800 431px)"></i>
<i style="margin-left:11px;width:432px;background:linear-gradient(90deg,#00ff86,#00ff84 12px,#00ff82 24px,#00ff80 36px,#00ff7d 48px,#00ff7b 60px,#00ff79 72px,#00ff76 84px,#00ff73 96px,#00ff71 108px,#00ff6e 120px,#00ff6b 132px,#00ff68 144px,#00ff65 156px,#00ff61 168px,#00ff5e 180px,#00ff5a 192px,#00ff56 204px,#17ff52 216px,#2fff4e 228px,#48ff4a 240px,#62ff45 252px,#7eff40 264px,#9cff3b 276px,#bbff35 288px,#dcff30 300px,#ffff29 312px,#ffdf1e 324px,#ffc516 336px,#ffae0e 348px,#ff9c08 360px,#ff8c02 372px,#ff7e00 384px,#ff7200 396px,#ff6700 408px,#ff5d00 420px,#ff5500 432px)"></i>
<i style="margin-left:11px;width:435px;background:linear-gradient(90deg,#00ff88,#00ff86 12px,#00ff84 24px,#00ff82 36px,#00ff7f 48px,#00ff7d 60px,#00ff7b 72px,#00ff78 84px,#00ff76 96px,#00ff73 108px,#00ff70 120px,#00ff6d 132px,#00ff6a 144px,#00ff67 156px,#00ff64 168px,#00ff60 180px,#00ff5d 192px,#02ff59 204px,#19ff55 216px,#31ff51 228px,#4aff4c 240px,#65ff47 252px,#81ff43 264px,#9fff3d 276px,#bfff38 288px,#e0ff32 300px,#fffb2b 312px,#ffdb20 324px,#ffc117 336px,#ffab10 348px,#ff9909 360px,#ff8904 372px,#ff7b00 384px,#ff6f00 396px,#ff6500 408px,#ff5c00 420px,#ff5300 432px,#ff5100 435px)"></i>
<i style="margin-left:11px;width:438px;background:linear-gradient(90deg,#00ff8a,#00ff88 12px,#00ff86 24px,#00ff84 36px,#00ff82 48px,#00ff7f 60px,#00ff7d 72px,#00ff7b 84px,#00ff78 96px,#00ff75 108px,#00ff72 120px,#00ff70 132px,#00ff6d 144px,#00ff69 156px,#00ff66 168px,#00ff63 180px,#00ff5f 192px,#03ff5b 204px,#1aff57 216px,#33ff53 228px,#4cff4f 240px,#68ff4a 252px,#84ff45 264px,#a2ff40 276px,#c2ff3b 288px,#e4ff35 300px,#fff62d 312px,#ffd722 324px,#ffbd19 336px,#ffa811 348px,#ff960b 360px,#ff8705 372px,#ff7900 384px,#ff6d00 396px,#ff6300 408px,#ff5a00 420px,#ff5100 432px,#ff4e00 438px)"></i>
<i style="margin-left:12px;width:439px;background:linear-gradient(90deg,#00ff8c,#00ff8a 12px,#00ff88 24px,#00ff86 36px,#00ff84 48px,#00ff81 60px,#00ff7f 72px,#00ff7d 84px,#00ff7a 96px,#00ff77 108px,#00ff75 120px,#00ff72 132px,#00ff6f 144px,#00ff6c 156px,#00ff68 168px,#00ff65 180px,#00ff61 192px,#06ff5d 204px,#1eff5a 216px,#37ff55 228px,#51ff51 240px,#6dff4c 252px,#8aff47 264px,#a9ff42 276px,#c9ff3d 288px,#ecff37 300px,#ffef2e 312px,#ffd123 324px,#ffb81a 336px,#ffa312 348px,#ff920b 360px,#ff8306 372px,#ff7601 384px,#ff6a00 396px,#ff6000 408px,#ff5700 420px,#ff4f00 432px,#ff4b00 439px)"></i>
<i style="margin-left:12px;width:442px;background:linear-gradient(90deg,#00ff8e,#00ff8c 12px,#00ff8a 24px,#00ff88 36px,#00ff86 48px,#00ff84 60px,#00ff81 72px,#00ff7f 84px,#00ff7c 96px,#00ff7a 108px,#00ff77 120px,#00ff74 132px,#00ff71 144px,#00ff6e 156px,#00ff6b 168px,#00ff67 180px,#00ff64 192px,#08ff60 204px,#20ff5c 216px,#39ff58 228px,#53ff54 240px,#6fff4f 252px,#8dff4a 264px,#acff45 276px,#cdff40 288px,#f0ff3a 300px,#ffea2f 312px,#ffcd24 324px,#ffb51b 336px,#ffa013 348px,#ff8f0d 360px,#ff8007 372px,#ff7402 384px,#ff6800 396px,#ff5e00 408px,#ff5500 420px,#ff4d00 432px,#ff4700 442px)"></i>
<i style="margin-left:12px;width:445px;background:linear-gradient(90deg,#00ff90,#00ff8f 12px,#00ff8d 24px,#00ff8a 36px,#00ff88 48px,#00ff86 60px,#00ff84 72px,#00ff81 84px,#00ff7f 96px,#00ff7c 108px,#00ff7a 120px,#00ff77 132px,#00ff74 144px,#00ff71 156px,#00ff6d 168px,#00ff6a 180px,#00ff67 192px,#09ff63 204px,#21ff5f 216px,#3bff5b 228px,#56ff56 240px,#72ff52 252px,#90ff4d 264px,#b0ff48 276px,#d1ff42 288px,#f5ff3d 300px,#ffe631 312px,#ffc926 324px,#ffb11d 336px,#ff9d15 348px,#ff8d0e 360px,#ff7e08 372px,#ff7103 384px,#ff6600 396px,#ff5c00 408px,#ff5400 420px,#ff4c00 432px,#ff4500 444px,#ff4400 445px)"></i>
<i style="margin-left:13px;width:446px;background:linear-gradient(90deg,#00ff93,#00ff91 12px,#00ff8f 24px,#00ff8d 36px,#00ff8a 48px,#00ff88 60px,#00ff86 72px,#00ff84 84px,#00ff81 96px,#00ff7f 108px,#00ff7c 120px,#00ff79 132px,#00ff76 144px,#00ff73 156px,#00ff70 168px,#00ff6c 180px,#00ff69 192px,#0dff65 204px,#25ff61 216px,#3fff5d 228px,#5bff59 240px,#78ff54 252px,#96ff4f 264px,#b6ff4a 276px,#d9ff45 288px,#fdff3f 300px,#ffdf32 312px,#ffc327 324px,#ffac1d 336px,#ff9916 348px,#ff890f 360px,#ff7a09 372px,#ff6e04 384px,#ff6300 396px,#ff5a00 408px,#ff5100 420px,#ff4900 432px,#ff4300 444px,#ff4100 446px)"></i>
<i style="margin-left:13px;width:449px;background:linear-gradient(90deg,#00ff95,#00ff93 12px,#00ff91 24px,#00ff8f 36px,#00ff8d 48px,#00ff8b 60px,#00ff88 72px,#00ff86 84px,#00ff84 96px,#00ff81 108px,#00ff7e 120px,#00ff7c 132px,#00ff79 144px,#00ff76 156px,#00ff73 168px,#00ff6f 180px,#00ff6c 192px,#0eff68 204px,#27ff64 216px,#42ff60 228px,#5dff5c 240px,#7aff57 252px,#99ff52 264px,#baff4d 276px,#ddff48 288px,#fffc41 300px,#ffda33 312px,#ffbf28 324px,#ffa91f 336px,#ff9617 348px,#ff8610 360px,#ff780a 372px,#ff6c05 384px,#ff6101 396px,#ff5800 408px,#ff4f00 420px,#ff4800 432px,#ff4100 444px,#ff3e00 449px)"></i>
<i style="margin-left:14px;width:450px;background:linear-gradient(90deg,#00ff97,#00ff95 12px,#00ff93 24px,#00ff91 36px,#00ff8f 48px,#00ff8d 60px,#00ff8b 72px,#00ff88 84px,#00ff86 96px,#00ff83 108px,#00ff81 120px,#00ff7e 132px,#00ff7b 144px,#00ff78 156px,#00ff75 168px,#00ff72 180px,#00ff6e 192px,#12ff6b 204px,#2bff67 216px,#46ff63 228px,#62ff5e 240px,#80ff5a 252px,#a0ff55 264px,#c1ff50 276px,#e5ff4b 288px,#fff442 300px,#ffd434 312px,#ffba29 324px,#ffa420 336px,#ff9218 348px,#ff8211 360px,#ff750b 372px,#ff6906 384px,#ff5e02 396px,#ff5500 408px,#ff4d00 420px,#ff4600 432px,#ff3f00 444px,#ff3c00 450px)"></i>
<i style="margin-left:14px;width:453px;background:linear-gradient(90deg,#00ff99,#00ff97 12px,#00ff96 24px,#00ff94 36px,#00ff92 48px,#00ff8f 60px,#00ff8d 72px,#00ff8b 84px,#00ff89 96px,#00ff86 108px,#00ff83 120px,#00ff81 132px,#00ff7e 144px,#00ff7b 156px,#00ff78 168px,#00ff75 180px,#00ff71 192px,#14ff6d 204px,#2dff6a 216px,#48ff66 228px,#65ff61 240px,#83ff5d 252px,#a3ff58 264px,#c5ff53 276px,#e9ff4e 288px,#ffef43 300px,#ffd036 312px,#ffb62a 324px,#ffa121 336px,#ff8f19 348px,#ff8012 360px,#ff720c 372px,#ff6707 384px,#ff5d03 396px,#ff5300 408px,#ff4b00 420px,#ff4400 432px,#ff3d00 444px,#ff3900 453px)"></i>
<i style="margin-left:14px;width:456px;background:linear-gradient(90deg,#00ff9c,#00ff9a 12px,#00ff98 24px,#00ff96 36px,#00ff94 48px,#00ff92 60px,#00ff90 72px,#00ff8e 84px,#00ff8b 96px,#00ff89 108px,#00ff86 120px,#00ff83 132px,#00ff81 144px,#00ff7e 156px,#00ff7b 168px,#00ff77 180px,#00ff74 192px,#15ff70 204px,#2fff6d 216px,#4bff69 228px,#68ff64 240px,#86ff60 252px,#a7ff5b 264px,#c9ff56 276px,#eeff51 288px,#ffea45 300px,#ffcc37 312px,#ffb32c 324px,#ff9e22 336px,#ff8c1a 348px,#ff7d14 360px,#ff700e 372px,#ff6509 384px,#ff5b04 396px,#ff5200 408px,#ff4a00 420px,#ff4200 432px,#ff3c00 444px,#ff3600 456px)"></i>
<i style="margin-left:15px;width:457px;background:linear-gradient(90deg,#00ff9e,#00ff9c 12px,#00ff9a 24px,#00ff98 36px,#00ff96 48px,#00ff94 60px,#00ff92 72px,#00ff90 84px,#00ff8e 96px,#00ff8b 108px,#00ff89 120px,#00ff86 132px,#00ff83 144px,#00ff80 156px,#00ff7d 168px,#00ff7a 180px,#00ff77 192px,#19ff73 204px,#34ff6f 216px,#50ff6b 228px,#6dff67 240px,#8cff63 252px,#aeff5e 264px,#d1ff59 276px,#f6ff54 288px,#ffe346 300px,#ffc538 312px,#ffad2c 324px,#ff9923 336px,#ff881b 348px,#ff7914 360px,#ff6d0e 372px,#ff6209 384px,#ff5805 396px,#ff4f01 408px,#ff4700 420px,#ff4000 432px,#ff3a00 444px,#ff3400 456px,#ff3400 457px)"></i>
<i style="margin-left:15px;width:460px;background:linear-gradient(90deg,#00ffa0,#00ff9f 12px,#00ff9d 24px,#00ff9b 36px,#00ff99 48px,#00ff97 60px,#00ff95 72px,#00ff93 84px,#00ff90 96px,#00ff8e 108px,#00ff8c 120px,#00ff89 132px,#00ff86 144px,#00ff83 156px,#00ff80 168px,#00ff7d 180px,#02ff7a 192px,#1bff76 204px,#36ff73 216px,#52ff6f 228px,#70ff6a 240px,#90ff66 252px,#b1ff61 264px,#d5ff5c 276px,#fcff57 288px,#ffde47 300px,#ffc239 312px,#ffaa2e 324px,#ff9624 336px,#ff851c 348px,#ff7716 360px,#ff6a10 372px,#ff600a 384px,#ff5606 396px,#ff4d02 408px,#ff4600 420px,#ff3f00 432px,#ff3900 444px,#ff3300 456px,#ff3100 460px)"></i>
<i style="margin-left:16px;width:462px;background:linear-gradient(90deg,#00ffa3,#00ffa1 12px,#00ff9f 24px,#00ff9d 36px,#00ff9b 48px,#00ff99 60px,#00ff97 72px,#00ff95 84px,#00ff93 96px,#00ff91 108px,#00ff8e 120px,#00ff8c 132px,#00ff89 144px,#00ff86 156px,#00ff83 168px,#00ff80 180px,#05ff7d 192px,#1fff79 204px,#3aff75 216px,#57ff72 228px,#76ff6d 240px,#96ff69 252px,#b8ff64 264px,#ddff5f 276px,#fffa58 288px,#ffd747 300px,#ffbc3a 312px,#ffa52f 324px,#ff9225 336px,#ff811d 348px,#ff7316 360px,#ff6710 372px,#ff5d0b 384px,#ff5307 396px,#ff4b02 408px,#ff4300 420px,#ff3d00 432px,#ff3700 444px,#ff3100 456px,#ff2e00 462px)"></i>
<i style="margin-left:16px;width:464px;background:linear-gradient(90deg,#00ffa5,#00ffa4 12px,#00ffa2 24px,#00ffa0 36px,#00ff9e 48px,#00ff9c 60px,#00ff9a 72px,#00ff98 84px,#00ff96 96px,#00ff93 108px,#00ff91 120px,#00ff8f 132px,#00ff8c 144px,#00ff89 156px,#00ff86 168px,#00ff83 180px,#07ff80 192px,#21ff7c 204px,#3dff79 216px,#5aff75 228px,#79ff71 240px,#9aff6d 252px,#bdff68 264px,#e2ff63 276px,#fff55a 288px,#ffd349 300px,#ffb83b 312px,#ffa130 324px,#ff8f26 336px,#ff7f1e 348px,#ff7118 360px,#ff6512 372px,#ff5b0c 384px,#ff5108 396px,#ff4903 408px,#ff4200 420px,#ff3b00 432px,#ff3500 444px,#ff3000 456px,#ff2c00 464px)"></i>
<i style="margin-left:16px;width:467px;background:linear-gradient(90deg,#00ffa8,#00ffa6 12px,#00ffa4 24px,#00ffa3 36px,#00ffa1 48px,#00ff9f 60px,#00ff9d 72px,#00ff9b 84px,#00ff99 96px,#00ff96 108px,#00ff94 120px,#00ff92 132px,#00ff8f 144px,#00ff8c 156px,#00ff89 168px,#00ff86 180px,#09ff83 192px,#23ff80 204px,#3fff7c 216px,#5dff78 228px,#7cff74 240px,#9dff70 252px,#c1ff6c 264px,#e7ff67 276px,#fff05c 288px,#ffcf4b 300px,#ffb43d 312px,#ff9e31 324px,#ff8c28 336px,#ff7c20 348px,#ff6f19 360px,#ff6313 372px,#ff590d 384px,#ff5009 396px,#ff4704 408px,#ff4001 420px,#ff3a00 432px,#ff3400 444px,#ff2e00 456px,#ff2a00 467px)"></i>
<i style="margin-left:17px;width:469px;background:linear-gradient(90deg,#00ffaa,#00ffa9 12px,#00ffa7 24px,#00ffa5 36px,#00ffa3 48px,#00ffa2 60px,#00ffa0 72px,#00ff9e 84px,#00ff9b 96px,#00ff99 108px,#00ff97 120px,#00ff94 132px,#00ff92 144px,#00ff8f 156px,#00ff8c 168px,#00ff89 180px,#0cff86 192px,#27ff83 204px,#44ff7f 216px,#62ff7c 228px,#82ff78 240px,#a4ff73 252px,#c8ff6f 264px,#efff6a 276px,#ffe85c 288px,#ffc84b 300px,#ffae3d 312px,#ff9932 324px,#ff8728 336px,#ff7820 348px,#ff6b19 360px,#ff6013 372px,#ff560e 384px,#ff4d09 396px,#ff4505 408px,#ff3e01 420px,#ff3800 432px,#ff3200 444px,#ff2d00 456px,#ff2800 468px,#ff2700 469px)"></i>
<i style="margin-left:17px;width:471px;background:linear-gradient(90deg,#00ffad,#00ffab 12px,#00ffaa 24px,#00ffa8 36px,#00ffa6 48px,#00ffa4 60px,#00ffa3 72px,#00ffa1 84px,#00ff9e 96px,#00ff9c 108px,#00ff9a 120px,#00ff98 132px,#00ff95 144px,#00ff92 156px,#00ff90 168px,#00ff8d 180px,#0eff8a 192px,#29ff86 204px,#46ff83 216px,#65ff7f 228px,#85ff7b 240px,#a8ff77 252px,#cdff73 264px,#f4ff6e 276px,#ffe35d 288px,#ffc44c 300px,#ffab3f 312px,#ff9633 324px,#ff852a 336px,#ff7622 348px,#ff691b 360px,#ff5e14 372px,#ff540f 384px,#ff4b0a 396px,#ff4306 408px,#ff3c02 420px,#ff3600 432px,#ff3000 444px,#ff2b00 456px,#ff2600 468px,#ff2500 471px)"></i>
<i style="margin-left:18px;width:473px;background:linear-gradient(90deg,#00ffaf,#00ffae 12px,#00ffac 24px,#00ffab 36px,#00ffa9 48px,#00ffa7 60px,#00ffa5 72px,#00ffa3 84px,#00ffa1 96px,#00ff9f 108px,#00ff9d 120px,#00ff9b 132px,#00ff98 144px,#00ff95 156px,#00ff93 168px,#00ff90 180px,#12ff8d 192px,#2eff8a 204px,#4bff86 216px,#6bff82 228px,#8cff7f 240px,#afff7a 252px,#d5ff76 264px,#fdff71 276px,#ffdb5d 288px,#ffbe4d 300px,#ffa53f 312px,#ff9134 324px,#ff802a 336px,#ff7222 348px,#ff661b 360px,#ff5b15 372px,#ff5110 384px,#ff490b 396px,#ff4107 408px,#ff3a03 420px,#ff3400 432px,#ff2f00 444px,#ff2900 456px,#ff2500 468px,#ff2300 473px)"></i>
<i style="margin-left:18px;width:475px;background:linear-gradient(90deg,#00ffb2,#00ffb1 12px,#00ffaf 24px,#00ffae 36px,#00ffac 48px,#00ffaa 60px,#00ffa8 72px,#00ffa6 84px,#00ffa4 96px,#00ffa2 108px,#00ffa0 120px,#00ff9e 132px,#00ff9b 144px,#00ff99 156px,#00ff96 168px,#00ff93 180px,#14ff90 192px,#30ff8d 204px,#4eff8a 216px,#6eff86 228px,#8fff82 240px,#b3ff7e 252px,#daff7a 264px,#fffb74 276px,#ffd75f 288px,#ffba4e 300px,#ffa240 312px,#ff8e35 324px,#ff7e2c 336px,#ff7023 348px,#ff631c 360px,#ff5916 372px,#ff4f11 384px,#ff470c 396px,#ff3f08 408px,#ff3904 420px,#ff3300 432px,#ff2d00 444px,#ff2800 456px,#ff2400 468px,#ff2100 475px)"></i>
<i style="margin-left:18px;width:478px;background:linear-gradient(90deg,#00ffb5,#00ffb3 12px,#00ffb2 24px,#00ffb0 36px,#00ffaf 48px,#00ffad 60px,#00ffab 72px,#00ffa9 84px,#00ffa8 96px,#00ffa5 108px,#00ffa3 120px,#00ffa1 132px,#00ff9f 144px,#00ff9c 156px,#00ff9a 168px,#00ff97 180px,#16ff94 192px,#32ff91 204px,#51ff8e 216px,#71ff8a 228px,#93ff86 240px,#b8ff82 252px,#dfff7e 264px,#fff675 276px,#ffd260 288px,#ffb64f 300px,#ff9e42 312px,#ff8b36 324px,#ff7b2d 336px,#ff6d25 348px,#ff611e 360px,#ff5717 372px,#ff4d12 384px,#ff450d 396px,#ff3e09 408px,#ff3705 420px,#ff3101 432px,#ff2c00 444px,#ff2700 456px,#ff2200 468px,#ff1f00 478px)"></i>
<i style="margin-left:19px;width:480px;background:linear-gradient(90deg,#00ffb8,#00ffb6 12px,#00ffb5 24px,#00ffb3 36px,#00ffb2 48px,#00ffb0 60px,#00ffae 72px,#00ffac 84px,#00ffab 96px,#00ffa9 108px,#00ffa7 120px,#00ffa4 132px,#00ffa2 144px,#00ffa0 156px,#00ff9d 168px,#00ff9a 180px,#1aff97 192px,#37ff94 204px,#56ff91 216px,#77ff8e 228px,#9aff8a 240px,#bfff86 252px,#e7ff82 264px,#ffed75 276px,#ffcb60 288px,#ffb050 300px,#ff9942 312px,#ff8737 324px,#ff772d 336px,#ff6a25 348px,#ff5e1e 360px,#ff5418 372px,#ff4b13 384px,#ff430e 396px,#ff3c09 408px,#ff3505 420px,#ff2f02 432px,#ff2a00 444px,#ff2500 456px,#ff2100 468px,#ff1d00 480px)"></i>
<i style="margin-left:19px;width:482px;background:linear-gradient(90deg,#00ffba,#00ffb9 12px,#00ffb8 24px,#00ffb6 36px,#00ffb5 48px,#00ffb3 60px,#00ffb1 72px,#00ffb0 84px,#00ffae 96px,#00ffac 108px,#00ffaa 120px,#00ffa8 132px,#00ffa6 144px,#00ffa3 156px,#00ffa1 168px,#00ff9e 180px,#1cff9b 192px,#3aff98 204px,#59ff95 216px,#7aff92 228px,#9eff8e 240px,#c4ff8a 252px,#edff86 264px,#ffe876 276px,#ffc762 288px,#ffac51 300px,#ff9643 312px,#ff8438 324px,#ff742f 336px,#ff6726 348px,#ff5c1f 360px,#ff5219 372px,#ff4914 384px,#ff410f 396px,#ff3a0a 408px,#ff3406 420px,#ff2e03 432px,#ff2900 444px,#ff2400 456px,#ff1f00 468px,#ff1b00 480px,#ff1b00 482px)"></i>
<i style="margin-left:20px;width:484px;background:linear-gradient(90deg,#00ffbd,#00ffbc 12px,#00ffbb 24px,#00ffb9 36px,#00ffb8 48px,#00ffb6 60px,#00ffb5 72px,#00ffb3 84px,#00ffb1 96px,#00ffaf 108px,#00ffad 120px,#00ffab 132px,#00ffa9 144px,#00ffa7 156px,#00ffa4 168px,#04ffa2 180px,#21ff9f 192px,#3fff9c 204px,#5fff99 216px,#81ff96 228px,#a5ff92 240px,#ccff8f 252px,#f6ff8b 264px,#ffe076 276px,#ffc061 288px,#ffa651 300px,#ff9144 312px,#ff7f39 324px,#ff712f 336px,#ff6427 348px,#ff5920 360px,#ff4f1a 372px,#ff4614 384px,#ff3f0f 396px,#ff380b 408px,#ff3207 420px,#ff2c03 432px,#ff2700 444px,#ff2200 456px,#ff1e00 468px,#ff1a00 480px,#ff1900 484px)"></i>
<i style="margin-left:20px;width:487px;background:linear-gradient(90deg,#00ffc0,#00ffbf 12px,#00ffbe 24px,#00ffbc 36px,#00ffbb 48px,#00ffb9 60px,#00ffb8 72px,#00ffb6 84px,#00ffb4 96px,#00ffb3 108px,#00ffb1 120px,#00ffaf 132px,#00ffad 144px,#00ffaa 156px,#00ffa8 168px,#06ffa6 180px,#23ffa3 192px,#41ffa0 204px,#62ff9d 216px,#84ff9a 228px,#a9ff97 240px,#d1ff93 252px,#fbff8f 264px,#ffdb77 276px,#ffbc63 288px,#ffa252 300px,#ff8e45 312px,#ff7d3a 324px,#ff6e30 336px,#ff6128 348px,#ff5621 360px,#ff4d1b 372px,#ff4415 384px,#ff3d10 396px,#ff360c 408px,#ff3008 420px,#ff2b04 432px,#ff2501 444px,#ff2100 456px,#ff1d00 468px,#ff1900 480px,#ff1700 487px)"></i>
<i style="margin-left:21px;width:488px;background:linear-gradient(90deg,#00ffc3,#00ffc2 12px,#00ffc1 24px,#00ffbf 36px,#00ffbe 48px,#00ffbd 60px,#00ffbb 72px,#00ffb9 84px,#00ffb8 96px,#00ffb6 108px,#00ffb4 120px,#00ffb2 132px,#00ffb0 144px,#00ffae 156px,#00ffac 168px,#0affa9 180px,#27ffa7 192px,#47ffa4 204px,#68ffa1 216px,#8bff9e 228px,#b1ff9b 240px,#d9ff97 252px,#fff990 264px,#ffd377 276px,#ffb563 288px,#ff9d53 300px,#ff8945 312px,#ff783a 324px,#ff6a31 336px,#ff5e29 348px,#ff5321 360px,#ff4a1b 372px,#ff4216 384px,#ff3b11 396px,#ff340c 408px,#ff2e09 420px,#ff2905 432px,#ff2402 444px,#ff1f00 456px,#ff1b00 468px,#ff1700 480px,#ff1500 488px)"></i>
<i style="margin-left:21px;width:491px;background:linear-gradient(90deg,#00ffc6,#00ffc5 12px,#00ffc4 24px,#00ffc3 36px,#00ffc1 48px,#00ffc0 60px,#00ffbe 72px,#00ffbd 84px,#00ffbb 96px,#00ffba 108px,#00ffb8 120px,#00ffb6 132px,#00ffb4 144px,#00ffb2 156px,#00ffb0 168px,#0cffae 180px,#2affab 192px,#49ffa9 204px,#6bffa6 216px,#8fffa3 228px,#b5ffa0 240px,#dfff9c 252px,#fff391 264px,#ffce78 276px,#ffb164 288px,#ff9954 300px,#ff8647 312px,#ff763b 324px,#ff6832 336px,#ff5c2a 348px,#ff5123 360px,#ff481c 372px,#ff4017 384px,#ff3912 396px,#ff320d 408px,#ff2d09 420px,#ff2706 432px,#ff2202 444px,#ff1e00 456px,#ff1a00 468px,#ff1600 480px,#ff1300 491px)"></i>
<i style="margin-left:21px;width:494px;background:linear-gradient(90deg,#00ffc9,#00ffc8 12px,#00ffc7 24px,#00ffc6 36px,#00ffc5 48px,#00ffc3 60px,#00ffc2 72px,#00ffc1 84px,#00ffbf 96px,#00ffbd 108px,#00ffbc 120px,#00ffba 132px,#00ffb8 144px,#00ffb6 156px,#00ffb4 168px,#0effb2 180px,#2cffaf 192px,#4cffad 204px,#6effaa 216px,#93ffa7 228px,#baffa4 240px,#e4ffa1 252px,#ffee93 264px,#ffc979 276px,#ffad65 288px,#ff9655 300px,#ff8348 312px,#ff733d 324px,#ff6533 336px,#ff592b 348px,#ff4f24 360px,#ff461d 372px,#ff3e18 384px,#ff3713 396px,#ff310e 408px,#ff2b0a 420px,#ff2607 432px,#ff2103 444px,#ff1d00 456px,#ff1900 468px,#ff1500 480px,#ff1200 492px,#ff1100 494px)"></i>
<i style="margin-left:22px;width:495px;background:linear-gradient(90deg,#00ffcc,#00ffcb 12px,#00ffca 24px,#00ffc9 36px,#00ffc8 48px,#00ffc7 60px,#00ffc5 72px,#00ffc4 84px,#00ffc3 96px,#00ffc1 108px,#00ffbf 120px,#00ffbe 132px,#00ffbc 144px,#00ffba 156px,#00ffb8 168px,#12ffb6 180px,#31ffb4 192px,#52ffb1 204px,#75ffaf 216px,#9affac 228px,#c2ffa9 240px,#eeffa6 252px,#ffe592 264px,#ffc279 276px,#ffa765 288px,#ff9155 300px,#ff7e48 312px,#ff6f3d 324px,#ff6234 336px,#ff562b 348px,#ff4c24 360px,#ff441e 372px,#ff3c18 384px,#ff3513 396px,#ff2f0f 408px,#ff290b 420px,#ff2407 432px,#ff1f04 444px,#ff1b01 456px,#ff1700 468px,#ff1400 480px,#ff1000 492px,#ff1000 495px)"></i>
<i style="margin-left:22px;width:498px;background:linear-gradient(90deg,#00ffd0,#00ffcf 12px,#00ffce 24px,#00ffcd 36px,#00ffcb 48px,#00ffca 60px,#00ffc9 72px,#00ffc8 84px,#00ffc6 96px,#00ffc5 108px,#00ffc3 120px,#00ffc2 132px,#00ffc0 144px,#00ffbe 156px,#00ffbc 168px,#14ffba 180px,#34ffb8 192px,#55ffb6 204px,#78ffb4 216px,#9effb1 228px,#c7ffae 240px,#f3ffab 252px,#ffdf93 264px,#ffbe7a 276px,#ffa367 288px,#ff8d57 300px,#ff7b49 312px,#ff6c3e 324px,#ff5f35 336px,#ff542c 348px,#ff4a25 360px,#ff421f 372px,#ff3a19 384px,#ff3314 396px,#ff2d10 408px,#ff280c 420px,#ff2308 432px,#ff1e05 444px,#ff1a02 456px,#ff1600 468px,#ff1300 480px,#ff0f00 492px,#ff0e00 498px)"></i>
<i style="margin-left:23px;width:500px;background:linear-gradient(90deg,#00ffd3,#00ffd2 12px,#00ffd1 24px,#00ffd0 36px,#00ffcf 48px,#00ffce 60px,#00ffcd 72px,#00ffcb 84px,#00ffca 96px,#00ffc9 108px,#00ffc7 120px,#00ffc6 132px,#00ffc4 144px,#00ffc3 156px,#00ffc1 168px,#19ffbf 180px,#39ffbd 192px,#5bffbb 204px,#7fffb8 216px,#a6ffb6 228px,#d0ffb3 240px,#fdffb0 252px,#ffd792 264px,#ffb77a 276px,#ff9d66 288px,#ff8857 300px,#ff774a 312px,#ff683f 324px,#ff5c35 336px,#ff512d 348px,#ff4826 360px,#ff3f1f 372px,#ff381a 384px,#ff3115 396px,#ff2b10 408px,#ff260c 420px,#ff2109 432px,#ff1d05 444px,#ff1802 456px,#ff1500 468px,#ff1100 480px,#ff0e00 492px,#ff0c00 500px)"></i>
<i style="margin-left:23px;width:502px;background:linear-gradient(90deg,#00ffd6,#00ffd5 12px,#00ffd4 24px,#00ffd3 36px,#00ffd2 48px,#00ffd1 60px,#00ffd0 72px,#00ffcf 84px,#00ffce 96px,#00ffcd 108px,#00ffcb 120px,#00ffca 132px,#00ffc9 144px,#00ffc7 156px,#00ffc5 168px,#1bffc4 180px,#3cffc2 192px,#5effc0 204px,#83ffbd 216px,#abffbb 228px,#d6ffb9 240px,#fffab3 252px,#ffd293 264px,#ffb37b 276px,#ff9a68 288px,#ff8558 300px,#ff744b 312px,#ff6640 324px,#ff5a36 336px,#ff4f2e 348px,#ff4627 360px,#ff3d20 372px,#ff361b 384px,#ff3016 396px,#ff2a11 408px,#ff240d 420px,#ff2009 432px,#ff1b06 444px,#ff1703 456px,#ff1400 468px,#ff1000 480px,#ff0d00 492px,#ff0a00 502px)"></i>
<i style="margin-left:24px;width:504px;background:linear-gradient(90deg,#00ffd9,#00ffd9 12px,#00ffd8 24px,#00ffd7 36px,#00ffd6 48px,#00ffd5 60px,#00ffd4 72px,#00ffd3 84px,#00ffd2 96px,#00ffd1 108px,#00ffd0 120px,#00ffce 132px,#00ffcd 144px,#00ffcb 156px,#01ffca 168px,#20ffc8 180px,#41ffc6 192px,#64ffc5 204px,#8affc2 216px,#b3ffc0 228px,#dfffbe 240px,#fff1b1 252px,#ffca92 264px,#ffac7b 276px,#ff9468 288px,#ff8058 300px,#ff704b 312px,#ff6240 324px,#ff5637 336px,#ff4c2e 348px,#ff4327 360px,#ff3b21 372px,#ff341b 384px,#ff2d16 396px,#ff2812 408px,#ff230e 420px,#ff1e0a 432px,#ff1a07 444px,#ff1603 456px,#ff1201 468px,#ff0f00 480px,#ff0c00 492px,#ff0900 504px)"></i>
<i style="margin-left:24px;width:506px;background:linear-gradient(90deg,#00ffdd,#00ffdc 12px,#00ffdb 24px,#00ffdb 36px,#00ffda 48px,#00ffd9 60px,#00ffd8 72px,#00ffd7 84px,#00ffd6 96px,#00ffd5 108px,#00ffd4 120px,#00ffd3 132px,#00ffd1 144px,#00ffd0 156px,#03ffcf 168px,#22ffcd 180px,#44ffcc 192px,#68ffca 204px,#8effc8 216px,#b8ffc6 228px,#e5ffc4 240px,#ffebb2 252px,#ffc593 264px,#ffa87c 276px,#ff9069 288px,#ff7d59 300px,#ff6d4c 312px,#ff6041 324px,#ff5438 336px,#ff4a2f 348px,#ff4128 360px,#ff3922 372px,#ff321c 384px,#ff2c17 396px,#ff2613 408px,#ff210f 420px,#ff1d0b 432px,#ff1807 444px,#ff1504 456px,#ff1101 468px,#ff0e00 480px,#ff0b00 492px,#ff0800 504px,#ff0700 506px)"></i>
<i style="margin-left:25px;width:508px;background:linear-gradient(90deg,#00ffe0,#00ffe0 12px,#00ffdf 24px,#00ffde 36px,#00ffde 48px,#00ffdd 60px,#00ffdc 72px,#00ffdb 84px,#00ffda 96px,#00ffd9 108px,#00ffd8 120px,#00ffd7 132px,#00ffd6 144px,#00ffd5 156px,#08ffd4 168px,#28ffd2 180px,#4affd1 192px,#6fffcf 204px,#96ffcd 216px,#c1ffcb 228px,#efffca 240px,#ffe1b0 252px,#ffbe93 264px,#ffa27b 276px,#ff8b69 288px,#ff7959 300px,#ff694c 312px,#ff5c41 324px,#ff5138 336px,#ff4730 348px,#ff3e29 360px,#ff3722 372px,#ff301d 384px,#ff2a18 396px,#ff2413 408px,#ff1f0f 420px,#ff1b0b 432px,#ff1708 444px,#ff1305 456px,#ff1002 468px,#ff0c00 480px,#ff0900 492px,#ff0700 504px,#ff0600 508px)"></i>
<i style="margin-left:25px;width:511px;background:linear-gradient(90deg,#00ffe4,#00ffe3 12px,#00ffe3 24px,#00ffe2 36px,#00ffe2 48px,#00ffe1 60px,#00ffe0 72px,#00ffdf 84px,#00ffdf 96px,#00ffde 108px,#00ffdd 120px,#00ffdc 132px,#00ffdb 144px,#00ffda 156px,#0affd9 168px,#2affd7 180px,#4dffd6 192px,#72ffd5 204px,#9bffd3 216px,#c6ffd1 228px,#f5ffd0 240px,#ffdcb1 252px,#ffb994 264px,#ff9e7c 276px,#ff886a 288px,#ff765a 300px,#ff664d 312px,#ff5a43 324px,#ff4e39 336px,#ff4531 348px,#ff3c2a 360px,#ff3523 372px,#ff2e1e 384px,#ff2819 396px,#ff2314 408px,#ff1e10 420px,#ff1a0c 432px,#ff1609 444px,#ff1206 456px,#ff0e03 468px,#ff0b00 480px,#ff0800 492px,#ff0600 504px,#ff0400 511px)"></i>
<i style="margin-left:26px;width:512px;background:linear-gradient(90deg,#00ffe8,#00ffe7 12px,#00ffe7 24px,#00ffe6 36px,#00ffe6 48px,#00ffe5 60px,#00ffe4 72px,#00ffe4 84px,#00ffe3 96px,#00ffe2 108px,#00ffe1 120px,#00ffe1 132px,#00ffe0 144px,#00ffdf 156px,#0effde 168px,#2fffdd 180px,#53ffdb 192px,#79ffda 204px,#a3ffd9 216px,#cfffd7 228px,#fffed5 240px,#ffd3b0 252px,#ffb293 264px,#ff987c 276px,#ff836a 288px,#ff715a 300px,#ff634e 312px,#ff5643 324px,#ff4b39 336px,#ff4231 348px,#ff3a2a 360px,#ff3324 372px,#ff2c1e 384px,#ff2619 396px,#ff2115 408px,#ff1c10 420px,#ff180d 432px,#ff1409 444px,#ff1006 456px,#ff0d03 468px,#ff0a00 480px,#ff0700 492px,#ff0400 504px,#ff0300 512px)"></i>
<i style="margin-left:26px;width:515px;background:linear-gradient(90deg,#00ffeb,#00ffeb 12px,#00ffeb 24px,#00ffea 36px,#00ffea 48px,#00ffe9 60px,#00ffe9 72px,#00ffe8 84px,#00ffe7 96px,#00ffe7 108px,#00ffe6 120px,#00ffe5 132px,#00ffe5 144px,#00ffe4 156px,#10ffe3 168px,#32ffe2 180px,#56ffe1 192px,#7dffe0 204px,#a7ffdf 216px,#d5ffde 228px,#fff8d6 240px,#ffceb1 252px,#ffad94 264px,#ff947d 276px,#ff7f6b 288px,#ff6e5c 300px,#ff604f 312px,#ff5444 324px,#ff493b 336px,#ff4032 348px,#ff382b 360px,#ff3125 372px,#ff2a1f 384px,#ff251a 396px,#ff2015 408px,#ff1b11 420px,#ff170d 432px,#ff130a 444px,#ff0f07 456px,#ff0c04 468px,#ff0901 480px,#ff0600 492px,#ff0300 504px,#ff0100 515px)"></i>
<i style="margin-left:27px;width:517px;background:linear-gradient(90deg,#00ffef,#00ffef 12px,#00ffee 24px,#00ffee 36px,#00ffee 48px,#00ffed 60px,#00ffed 72px,#00ffec 84px,#00ffec 96px,#00ffec 108px,#00ffeb 120px,#00ffea 132px,#00ffea 144px,#00ffe9 156px,#15ffe9 168px,#38ffe8 180px,#5dffe7 192px,#85ffe6 204px,#b0ffe5 216px,#dfffe4 228px,#ffedd4 240px,#ffc5af 252px,#ffa793 264px,#ff8e7d 276px,#ff7a6b 288px,#ff6a5c 300px,#ff5c4f 312px,#ff5044 324px,#ff463b 336px,#ff3d33 348px,#ff362c 360px,#ff2f25 372px,#ff2820 384px,#ff231a 396px,#ff1e16 408px,#ff1912 420px,#ff150e 432px,#ff110a 444px,#ff0e07 456px,#ff0b04 468px,#ff0802 480px,#ff0500 492px,#ff0200 504px,#ff0000 516px,#ff0000 517px)"></i>
<i style="margin-left:27px;width:519px;background:linear-gradient(90deg,#00fff3,#00fff3 12px,#00fff3 24px,#00fff2 36px,#00fff2 48px,#00fff2 60px,#00fff1 72px,#00fff1 84px,#00fff1 96px,#00fff0 108px,#00fff0 120px,#00fff0 132px,#00ffef 144px,#00ffef 156px,#18ffee 168px,#3bffee 180px,#61ffed 192px,#89ffed 204px,#b5ffec 216px,#e5ffeb 228px,#ffe7d5 240px,#ffc0b0 252px,#ffa294 264px,#ff8b7e 276px,#ff776c 288px,#ff675d 300px,#ff5a50 312px,#ff4e45 324px,#ff443c 336px,#ff3b34 348px,#ff342d 360px,#ff2d26 372px,#ff2720 384px,#ff211b 396px,#ff1c17 408px,#ff1813 420px,#ff140f 432px,#ff100b 444px,#ff0d08 456px,#ff0905 468px,#ff0702 480px,#ff0400 492px,#ff0100 504px,#ff0000 516px,#ff0000 519px)"></i>
<i style="margin-left:28px;width:521px;background:linear-gradient(90deg,#00fff7,#00fff7 12px,#00fff7 24px,#00fff7 36px,#00fff6 48px,#00fff6 60px,#00fff6 72px,#00fff6 84px,#00fff6 96px,#00fff5 108px,#00fff5 120px,#00fff5 132px,#00fff5 144px,#00fff4 156px,#1dfff4 168px,#41fff4 180px,#68fff3 192px,#91fff3 204px,#bffff3 216px,#f0fff2 228px,#ffded2 240px,#ffb9af 252px,#ff9c93 264px,#ff857d 276px,#ff736b 288px,#ff635d 300px,#ff5650 312px,#ff4b45 324px,#ff413c 336px,#ff3934 348px,#ff312d 360px,#ff2b27 372px,#ff2521 384px,#ff1f1c 396px,#ff1b17 408px,#ff1613 420px,#ff120f 432px,#ff0f0c 444px,#ff0b09 456px,#ff0806 468px,#ff0503 480px,#ff0300 492px,#ff0000 504px,#ff0000 516px,#ff0000 521px)"></i>
<i style="margin-left:28px;width:524px;background:linear-gradient(90deg,#00fffb,#00fffb 12px,#00fffb 24px,#00fffb 36px,#00fffb 48px,#00fffb 60px,#00fffb 72px,#00fffb 84px,#00fffb 96px,#00fffb 108px,#00fffa 120px,#00fffa 132px,#00fffa 144px,#00fffa 156px,#1ffffa 168px,#44fffa 180px,#6bfffa 192px,#96fffa 204px,#c4fffa 216px,#f7fffa 228px,#ffd8d3 240px,#ffb4b0 252px,#ff9894 264px,#ff827e 276px,#ff6f6d 288px,#ff605e 300px,#ff5351 312px,#ff4946 324px,#ff3f3d 336px,#ff3735 348px,#ff2f2e 360px,#ff2928 372px,#ff2322 384px,#ff1e1d 396px,#ff1918 408px,#ff1514 420px,#ff1110 432px,#ff0d0c 444px,#ff0a09 456px,#ff0706 468px,#ff0403 480px,#ff0201 492px,#ff0000 504px,#ff0000 516px,#ff0000 524px)"></i>
<i style="margin-left:29px;width:525px;background:linear-gradient(90deg,#00ffff,#00ffff 12px,#00ffff 24px,#00ffff 36px,#00ffff 48px,#00ffff 60px,#00feff 72px,#00feff 84px,#00feff 96px,#00feff 108px,#00feff 120px,#00feff 132px,#00feff 144px,#02feff 156px,#25feff 168px,#4afeff 180px,#72fdff 192px,#9efdff 204px,#cdfdff 216px,#fffcfe 228px,#ffcfd0 240px,#ffacae 252px,#ff9293 264px,#ff7c7e 276px,#ff6b6c 288px,#ff5c5e 300px,#ff5051 312px,#ff4547 324px,#ff3c3d 336px,#ff3435 348px,#ff2d2e 360px,#ff2728 372px,#ff2122 384px,#ff1c1d 396px,#ff1719 408px,#ff1314 420px,#ff0f10 432px,#ff0c0d 444px,#ff090a 456px,#ff0607 468px,#ff0304 480px,#ff0001 492px,#ff0000 504px,#ff0000 516px,#ff0000 525px)"></i>
<i style="margin-left:29px;width:528px;background:linear-gradient(90deg,#00fbff,#00fbff 12px,#00faff 24px,#00faff 36px,#00faff 48px,#00faff 60px,#00faff 72px,#00f9ff 84px,#00f9ff 96px,#00f9ff 108px,#00f9ff 120px,#00f8ff 132px,#00f8ff 144px,#04f8ff 156px,#27f7ff 168px,#4bf7ff 180px,#73f7ff 192px,#9ef6ff 204px,#cdf6ff 216px,#fff5ff 228px,#ffc9d1 240px,#ffa8af 252px,#ff8e94 264px,#ff797f 276px,#ff686d 288px,#ff5a5f 300px,#ff4e52 312px,#ff4348 324px,#ff3a3e 336px,#ff3236 348px,#ff2b2f 360px,#ff2529 372px,#ff2023 384px,#ff1b1e 396px,#ff1619 408px,#ff1215 420px,#ff0e11 432px,#ff0b0e 444px,#ff080a 456px,#ff0507 468px,#ff0205 480px,#ff0002 492px,#ff0000 504px,#ff0000 516px,#ff0000 528px)"></i>
<i style="margin-left:30px;width:530px;background:linear-gradient(90deg,#00f7ff,#00f6ff 12px,#00f6ff 24px,#00f6ff 36px,#00f6ff 48px,#00f5ff 60px,#00f5ff 72px,#00f5ff 84px,#00f4ff 96px,#00f4ff 108px,#00f3ff 120px,#00f3ff 132px,#00f2ff 144px,#09f2ff 156px,#2bf1ff 168px,#50f1ff 180px,#78f0ff 192px,#a2efff 204px,#d1efff 216px,#ffeafb 228px,#ffc0cf 240px,#ffa1ae 252px,#ff8894 264px,#ff747f 276px,#ff646d 288px,#ff565f 300px,#ff4a53 312px,#ff4048 324px,#ff373f 336px,#ff3037 348px,#ff2930 360px,#ff2329 372px,#ff1e24 384px,#ff191e 396px,#ff141a 408px,#ff1016 420px,#ff0d12 432px,#ff090e 444px,#ff060b 456px,#ff0308 468px,#ff0105 480px,#ff0002 492px,#ff0000 504px,#ff0000 516px,#ff0000 528px,#ff0000 530px)"></i>
<i style="margin-left:31px;width:531px;background:linear-gradient(90deg,#00f3ff,#00f2ff 12px,#00f2ff 24px,#00f1ff 36px,#00f1ff 48px,#00f1ff 60px,#00f0ff 72px,#00f0ff 84px,#00efff 96px,#00efff 108px,#00eeff 120px,#00edff 132px,#00edff 144px,#0decff 156px,#30ebff 168px,#54ebff 180px,#7ceaff 192px,#a7e9ff 204px,#d5e8ff 216px,#ffe0f7 228px,#ffb8cd 240px,#ff9aac 252px,#ff8293 264px,#ff6f7e 276px,#ff5f6d 288px,#ff525f 300px,#ff4753 312px,#ff3d48 324px,#ff353f 336px,#ff2d37 348px,#ff2730 360px,#ff212a 372px,#ff1c24 384px,#ff171f 396px,#ff131a 408px,#ff0f16 420px,#ff0b12 432px,#ff080f 444px,#ff050b 456px,#ff0208 468px,#ff0006 480px,#ff0003 492px,#ff0001 504px,#ff0000 516px,#ff0000 528px,#ff0000 531px)"></i>
<i style="margin-left:31px;width:534px;background:linear-gradient(90deg,#00efff,#00eeff 12px,#00eeff 24px,#00edff 36px,#00edff 48px,#00ecff 60px,#00ecff 72px,#00ebff 84px,#00eaff 96px,#00eaff 108px,#00e9ff 120px,#00e8ff 132px,#00e7ff 144px,#0fe6ff 156px,#31e5ff 168px,#56e4ff 180px,#7de3ff 192px,#a7e2ff 204px,#d5e1ff 216px,#ffd9f8 228px,#ffb3ce 240px,#ff96ad 252px,#ff7f94 264px,#ff6c7f 276px,#ff5d6e 288px,#ff5060 300px,#ff4554 312px,#ff3b49 324px,#ff3340 336px,#ff2c38 348px,#ff2531 360px,#ff1f2b 372px,#ff1a25 384px,#ff1620 396px,#ff111b 408px,#ff0e17 420px,#ff0a13 432px,#ff070f 444px,#ff040c 456px,#ff0109 468px,#ff0006 480px,#ff0004 492px,#ff0001 504px,#ff0000 516px,#ff0000 528px,#ff0000 534px)"></i>
<i style="margin-left:32px;width:535px;background:linear-gradient(90deg,#00ebff,#00eaff 12px,#00eaff 24px,#00e9ff 36px,#00e8ff 48px,#00e8ff 60px,#00e7ff 72px,#00e6ff 84px,#00e5ff 96px,#00e5ff 108px,#00e4ff 120px,#00e3ff 132px,#00e2ff 144px,#14e1ff 156px,#36e0ff 168px,#5adeff 180px,#81ddff 192px,#abdcff 204px,#d9daff 216px,#ffcff4 228px,#ffabcb 240px,#ff8fac 252px,#ff7993 264px,#ff677f 276px,#ff596e 288px,#ff4c60 300px,#ff4154 312px,#ff3849 324px,#ff3040 336px,#ff2938 348px,#ff2331 360px,#ff1d2b 372px,#ff1825 384px,#ff1420 396px,#ff101b 408px,#ff0c17 420px,#ff0913 432px,#ff0510 444px,#ff030d 456px,#ff0009 468px,#ff0007 480px,#ff0004 492px,#ff0002 504px,#ff0000 516px,#ff0000 528px,#ff0000 535px)"></i>
<i style="margin-left:32px;width:538px;background:linear-gradient(90deg,#00e7ff,#00e6ff 12px,#00e5ff 24px,#00e5ff 36px,#00e4ff 48px,#00e3ff 60px,#00e2ff 72px,#00e2ff 84px,#00e1ff 96px,#00e0ff 108px,#00dfff 120px,#00deff 132px,#00dcff 144px,#16dbff 156px,#37daff 168px,#5bd9ff 180px,#82d7ff 192px,#acd5ff 204px,#d9d4ff 216px,#ffcaf5 228px,#ffa6cc 240px,#ff8bad 252px,#ff7694 264px,#ff6480 276px,#ff566f 288px,#ff4a61 300px,#ff3f55 312px,#ff364a 324px,#ff2e41 336px,#ff2739 348px,#ff2132 360px,#ff1c2c 372px,#ff1726 384px,#ff1221 396px,#ff0e1c 408px,#ff0b18 420px,#ff0714 432px,#ff0411 444px,#ff010d 456px,#ff000a 468px,#ff0007 480px,#ff0005 492px,#ff0002 504px,#ff0000 516px,#ff0000 528px,#ff0000 538px)"></i>
<i style="margin-left:33px;width:540px;background:linear-gradient(90deg,#00e3ff,#00e2ff 12px,#00e1ff 24px,#00e1ff 36px,#00e0ff 48px,#00dfff 60px,#00deff 72px,#00ddff 84px,#00dcff 96px,#00dbff 108px,#00daff 120px,#00d8ff 132px,#00d7ff 144px,#1ad6ff 156px,#3cd4ff 168px,#60d3ff 180px,#86d1ff 192px,#b0cfff 204px,#dccdff 216px,#ffc0f2 228px,#ff9fca 240px,#ff85ac 252px,#ff7193 264px,#ff607f 276px,#ff526f 288px,#ff4661 300px,#ff3c55 312px,#ff334a 324px,#ff2c41 336px,#ff2539 348px,#ff1f32 360px,#ff1a2c 372px,#ff1526 384px,#ff1121 396px,#ff0d1d 408px,#ff0918 420px,#ff0615 432px,#ff0311 444px,#ff000e 456px,#ff000b 468px,#ff0008 480px,#ff0005 492px,#ff0003 504px,#ff0000 516px,#ff0000 528px,#ff0000 540px)"></i>
<i style="margin-left:33px;width:542px;background:linear-gradient(90deg,#00dfff,#00deff 12px,#00ddff 24px,#00ddff 36px,#00dcff 48px,#00dbff 60px,#00daff 72px,#00d8ff 84px,#00d7ff 96px,#00d6ff 108px,#00d5ff 120px,#00d3ff 132px,#00d2ff 144px,#1cd0ff 156px,#3dcfff 168px,#61cdff 180px,#87cbff 192px,#b0c9ff 204px,#dcc7ff 216px,#ffbbf2 228px,#ff9acb 240px,#ff81ac 252px,#ff6d94 264px,#ff5d80 276px,#ff4f70 288px,#ff4462 300px,#ff3a56 312px,#ff314b 324px,#ff2a42 336px,#ff233a 348px,#ff1d33 360px,#ff182d 372px,#ff1427 384px,#ff0f22 396px,#ff0c1d 408px,#ff0819 420px,#ff0515 432px,#ff0212 444px,#ff000e 456px,#ff000b 468px,#ff0008 480px,#ff0006 492px,#ff0003 504px,#ff0001 516px,#ff0000 528px,#ff0000 540px,#ff0000 542px)"></i>
<i style="margin-left:34px;width:544px;background:linear-gradient(90deg,#00dbff,#00daff 12px,#00d9ff 24px,#00d8ff 36px,#00d7ff 48px,#00d6ff 60px,#00d5ff 72px,#00d4ff 84px,#00d3ff 96px,#00d1ff 108px,#00d0ff 120px,#00ceff 132px,#01cdff 144px,#20cbff 156px,#41c9ff 168px,#65c7ff 180px,#8bc5ff 192px,#b4c3ff 204px,#e0c0ff 216px,#ffb2ef 228px,#ff93c9 240px,#ff7bab 252px,#ff6893 264px,#ff5980 276px,#ff4b6f 288px,#ff4062 300px,#ff3756 312px,#ff2f4c 324px,#ff2743 336px,#ff213b 348px,#ff1b34 360px,#ff162d 372px,#ff1228 384px,#ff0e23 396px,#ff0a1e 408px,#ff071a 420px,#ff0316 432px,#ff0012 444px,#ff000f 456px,#ff000c 468px,#ff0009 480px,#ff0006 492px,#ff0004 504px,#ff0001 516px,#ff0000 528px,#ff0000 540px,#ff0000 544px)"></i>
<i style="margin-left:34px;width:547px;background:linear-gradient(90deg,#00d8ff,#00d7ff 12px,#00d6ff 24px,#00d4ff 36px,#00d3ff 48px,#00d2ff 60px,#00d1ff 72px,#00d0ff 84px,#00ceff 96px,#00cdff 108px,#00cbff 120px,#00caff 132px,#03c8ff 144px,#22c6ff 156px,#43c4ff 168px,#66c2ff 180px,#8cc0ff 192px,#b4bdff 204px,#e0baff 216px,#ffadf0 228px,#ff8fca 240px,#ff78ac 252px,#ff6594 264px,#ff5681 276px,#ff4970 288px,#ff3e63 300px,#ff3557 312px,#ff2d4d 324px,#ff2644 336px,#ff1f3c 348px,#ff1a35 360px,#ff152e 372px,#ff1028 384px,#ff0c23 396px,#ff091f 408px,#ff051a 420px,#ff0216 432px,#ff0013 444px,#ff000f 456px,#ff000c 468px,#ff000a 480px,#ff0007 492px,#ff0004 504px,#ff0002 516px,#ff0000 528px,#ff0000 540px,#ff0000 547px)"></i>
<i style="margin-left:35px;width:548px;background:linear-gradient(90deg,#00d4ff,#00d3ff 12px,#00d2ff 24px,#00d0ff 36px,#00cfff 48px,#00ceff 60px,#00cdff 72px,#00cbff 84px,#00caff 96px,#00c8ff 108px,#00c6ff 120px,#00c5ff 132px,#07c3ff 144px,#26c1ff 156px,#47bfff 168px,#6abcff 180px,#90baff 192px,#b8b7ff 204px,#e3b4ff 216px,#ffa5ed 228px,#ff88c8 240px,#ff72ab 252px,#ff6093 264px,#ff5280 276px,#ff4570 288px,#ff3b63 300px,#ff3257 312px,#ff2a4d 324px,#ff2344 336px,#ff1d3c 348px,#ff1835 360px,#ff132f 372px,#ff0f29 384px,#ff0b24 396px,#ff071f 408px,#ff041b 420px,#ff0117 432px,#ff0013 444px,#ff0010 456px,#ff000d 468px,#ff000a 480px,#ff0007 492px,#ff0005 504px,#ff0002 516px,#ff0000 528px,#ff0000 540px,#ff0000 548px)"></i>
<i style="margin-left:35px;width:551px;background:linear-gradient(90deg,#00d0ff,#00cfff 12px,#00ceff 24px,#00cdff 36px,#00cbff 48px,#00caff 60px,#00c8ff 72px,#00c7ff 84px,#00c5ff 96px,#00c4ff 108px,#00c2ff 120px,#00c0ff 132px,#09beff 144px,#27bcff 156px,#48b9ff 168px,#6bb7ff 180px,#90b4ff 192px,#b8b2ff 204px,#e3afff 216px,#ffa0ee 228px,#ff84c9 240px,#ff6eac 252px,#ff5d94 264px,#ff4f81 276px,#ff4371 288px,#ff3864 300px,#ff3058 312px,#ff284e 324px,#ff2145 336px,#ff1b3d 348px,#ff1636 360px,#ff112f 372px,#ff0d2a 384px,#ff0924 396px,#ff0620 408px,#ff031b 420px,#ff0018 432px,#ff0014 444px,#ff0011 456px,#ff000d 468px,#ff000b 480px,#ff0008 492px,#ff0005 504px,#ff0003 516px,#ff0001 528px,#ff0000 540px,#ff0000 551px)"></i>
<i style="margin-left:36px;width:553px;background:linear-gradient(90deg,#00ccff,#00cbff 12px,#00caff 24px,#00c9ff 36px,#00c7ff 48px,#00c6ff 60px,#00c4ff 72px,#00c3ff 84px,#00c1ff 96px,#00bfff 108px,#00bdff 120px,#00bbff 132px,#0db9ff 144px,#2bb7ff 156px,#4cb4ff 168px,#6fb2ff 180px,#94afff 192px,#bcacff 204px,#e7a9ff 216px,#ff98eb 228px,#ff7ec7 240px,#ff69ab 252px,#ff5994 264px,#ff4b81 276px,#ff3f71 288px,#ff3563 300px,#ff2d58 312px,#ff264e 324px,#ff1f45 336px,#ff193d 348px,#ff1436 360px,#ff1030 372px,#ff0c2a 384px,#ff0825 396px,#ff0420 408px,#ff011c 420px,#ff0018 432px,#ff0014 444px,#ff0011 456px,#ff000e 468px,#ff000b 480px,#ff0008 492px,#ff0006 504px,#ff0003 516px,#ff0001 528px,#ff0000 540px,#ff0000 552px,#ff0000 553px)"></i>
<i style="margin-left:37px;width:554px;background:linear-gradient(90deg,#00c9ff,#00c8ff 12px,#00c6ff 24px,#00c5ff 36px,#00c3ff 48px,#00c2ff 60px,#00c0ff 72px,#00beff 84px,#00bdff 96px,#00bbff 108px,#00b9ff 120px,#00b6ff 132px,#11b4ff 144px,#2fb2ff 156px,#50afff 168px,#73acff 180px,#98a9ff 192px,#c0a6ff 204px,#eaa3ff 216px,#ff91e8 228px,#ff78c5 240px,#ff64a9 252px,#ff5493 264px,#ff4780 276px,#ff3c71 288px,#ff3263 300px,#ff2a58 312px,#ff234e 324px,#ff1d45 336px,#ff173d 348px,#ff1236 360px,#ff0e30 372px,#ff0a2a 384px,#ff0625 396px,#ff0321 408px,#ff001c 420px,#ff0018 432px,#ff0015 444px,#ff0011 456px,#ff000e 468px,#ff000b 480px,#ff0009 492px,#ff0006 504px,#ff0004 516px,#ff0002 528px,#ff0000 540px,#ff0000 552px,#ff0000 554px)"></i>
<i style="margin-left:37px;width:557px;background:linear-gradient(90deg,#00c5ff,#00c4ff 12px,#00c3ff 24px,#00c1ff 36px,#00bfff 48px,#00beff 60px,#00bcff 72px,#00baff 84px,#00b8ff 96px,#00b6ff 108px,#00b4ff 120px,#00b2ff 132px,#13b0ff 144px,#31adff 156px,#51aaff 168px,#74a7ff 180px,#98a4ff 192px,#c0a1ff 204px,#ea9dff 216px,#ff8ce9 228px,#ff74c6 240px,#ff61aa 252px,#ff5194 264px,#ff4481 276px,#ff3972 288px,#ff3064 300px,#ff2859 312px,#ff214f 324px,#ff1b46 336px,#ff163e 348px,#ff1137 360px,#ff0c31 372px,#ff082b 384px,#ff0526 396px,#ff0221 408px,#ff001d 420px,#ff0019 432px,#ff0015 444px,#ff0012 456px,#ff000f 468px,#ff000c 480px,#ff0009 492px,#ff0007 504px,#ff0004 516px,#ff0002 528px,#ff0000 540px,#ff0000 552px,#ff0000 557px)"></i>
<i style="margin-left:38px;width:559px;background:linear-gradient(90deg,#00c2ff,#00c0ff 12px,#00bfff 24px,#00bdff 36px,#00bcff 48px,#00baff 60px,#00b8ff 72px,#00b6ff 84px,#00b4ff 96px,#00b2ff 108px,#00b0ff 120px,#00adff 132px,#17abff 144px,#35a8ff 156px,#55a5ff 168px,#77a2ff 180px,#9c9fff 192px,#c39bff 204px,#ed98ff 216px,#ff85e6 228px,#ff6ec4 240px,#ff5ca9 252px,#ff4d93 264px,#ff4181 276px,#ff3671 288px,#ff2d64 300px,#ff2659 312px,#ff1f4f 324px,#ff1946 336px,#ff143e 348px,#ff0f37 360px,#ff0b31 372px,#ff072b 384px,#ff0326 396px,#ff0022 408px,#ff001d 420px,#ff0019 432px,#ff0016 444px,#ff0012 456px,#ff000f 468px,#ff000c 480px,#ff000a 492px,#ff0007 504px,#ff0005 516px,#ff0003 528px,#ff0000 540px,#ff0000 552px,#ff0000 559px)"></i>
<i style="margin-left:38px;width:561px;background:linear-gradient(90deg,#00beff,#00bdff 12px,#00bbff 24px,#00baff 36px,#00b8ff 48px,#00b6ff 60px,#00b4ff 72px,#00b2ff 84px,#00b0ff 96px,#00aeff 108px,#00abff 120px,#00a9ff 132px,#18a6ff 144px,#36a4ff 156px,#56a1ff 168px,#789dff 180px,#9d9aff 192px,#c396ff 204px,#ed92ff 216px,#ff81e7 228px,#ff6ac5 240px,#ff59aa 252px,#ff4a94 264px,#ff3e82 276px,#ff3472 288px,#ff2b65 300px,#ff245a 312px,#ff1d50 324px,#ff1747 336px,#ff123f 348px,#ff0d38 360px,#ff0932 372px,#ff052c 384px,#ff0227 396px,#ff0022 408px,#ff001e 420px,#ff001a 432px,#ff0016 444px,#ff0013 456px,#ff0010 468px,#ff000d 480px,#ff000a 492px,#ff0008 504px,#ff0005 516px,#ff0003 528px,#ff0001 540px,#ff0000 552px,#ff0000 561px)"></i>
<i style="margin-left:39px;width:563px;background:linear-gradient(90deg,#00bbff,#00b9ff 12px,#00b8ff 24px,#00b6ff 36px,#00b4ff 48px,#00b2ff 60px,#00b0ff 72px,#00aeff 84px,#00acff 96px,#00a9ff 108px,#00a7ff 120px,#00a4ff 132px,#1ca2ff 144px,#3a9fff 156px,#5a9cff 168px,#7c98ff 180px,#a095ff 192px,#c791ff 204px,#f08dff 216px,#ff7ae4 228px,#ff65c3 240px,#ff54a9 252px,#ff4693 264px,#ff3a81 276px,#ff3172 288px,#ff2865 300px,#ff215a 312px,#ff1b50 324px,#ff1547 336px,#ff103f 348px,#ff0c38 360px,#ff0732 372px,#ff042d 384px,#ff0127 396px,#ff0023 408px,#ff001e 420px,#ff001b 432px,#ff0017 444px,#ff0013 456px,#ff0010 468px,#ff000d 480px,#ff000b 492px,#ff0008 504px,#ff0006 516px,#ff0004 528px,#ff0001 540px,#ff0000 552px,#ff0000 563px)"></i>
<i style="margin-left:40px;width:564px;background:linear-gradient(90deg,#00b7ff,#00b6ff 12px,#00b4ff 24px,#00b2ff 36px,#00b0ff 48px,#00aeff 60px,#00acff 72px,#00aaff 84px,#00a8ff 96px,#00a5ff 108px,#00a3ff 120px,#04a0ff 132px,#209dff 144px,#3e9aff 156px,#5e97ff 168px,#8093ff 180px,#a490ff 192px,#ca8cff 204px,#f488ff 216px,#ff74e2 228px,#ff60c1 240px,#ff4fa8 252px,#ff4292 264px,#ff3781 276px,#ff2e72 288px,#ff2565 300px,#ff1e5a 312px,#ff1850 324px,#ff1347 336px,#ff0e40 348px,#ff0a39 360px,#ff0633 372px,#ff022d 384px,#ff0028 396px,#ff0023 408px,#ff001f 420px,#ff001b 432px,#ff0017 444px,#ff0014 456px,#ff0011 468px,#ff000e 480px,#ff000b 492px,#ff0009 504px,#ff0006 516px,#ff0004 528px,#ff0002 540px,#ff0000 552px,#ff0000 564px)"></i>
<i style="margin-left:40px;width:564px;background:linear-gradient(90deg,#00b4ff,#00b2ff 12px,#00b0ff 24px,#00afff 36px,#00adff 48px,#00abff 60px,#00a8ff 72px,#00a6ff 84px,#00a4ff 96px,#00a1ff 108px,#009fff 120px,#059cff 132px,#2199ff 144px,#3f96ff 156px,#5f92ff 168px,#808fff 180px,#a48bff 192px,#ca87ff 204px,#f383ff 216px,#ff70e2 228px,#ff5cc2 240px,#ff4ca9 252px,#ff3f93 264px,#ff3582 276px,#ff2b73 288px,#ff2366 300px,#ff1d5b 312px,#ff1751 324px,#ff1148 336px,#ff0c40 348px,#ff083a 360px,#ff0433 372px,#ff012e 384px,#ff0029 396px,#ff0024 408px,#ff0020 420px,#ff001c 432px,#ff0018 444px,#ff0015 456px,#ff0011 468px,#ff000e 480px,#ff000c 492px,#ff0009 504px,#ff0007 516px,#ff0004 528px,#ff0002 540px,#ff0000 552px,#ff0000 564px)"></i>
<i style="margin-left:41px;width:557px;background:linear-gradient(90deg,#00b1ff,#00afff 12px,#00adff 24px,#00abff 36px,#00a9ff 48px,#00a7ff 60px,#00a5ff 72px,#00a2ff 84px,#00a0ff 96px,#009dff 108px,#009aff 120px,#0997ff 132px,#2594ff 144px,#4391ff 156px,#628eff 168px,#848aff 180px,#a886ff 192px,#ce82ff 204px,#f77dff 216px,#ff6ae0 228px,#ff57c1 240px,#ff48a7 252px,#ff3c93 264px,#ff3181 276px,#ff2872 288px,#ff2166 300px,#ff1a5b 312px,#ff1451 324px,#ff0f48 336px,#ff0b41 348px,#ff063a 360px,#ff0334 372px,#ff002e 384px,#ff0029 396px,#ff0024 408px,#ff0020 420px,#ff001c 432px,#ff0018 444px,#ff0015 456px,#ff0012 468px,#ff000f 480px,#ff000c 492px,#ff000a 504px,#ff0007 516px,#ff0005 528px,#ff0003 540px,#ff0001 552px,#ff0000 557px)"></i>
<i style="margin-left:41px;width:552px;background:linear-gradient(90deg,#00adff,#00abff 12px,#00aaff 24px,#00a8ff 36px,#00a5ff 48px,#00a3ff 60px,#00a1ff 72px,#009eff 84px,#009cff 96px,#0099ff 108px,#0096ff 120px,#0b93ff 132px,#2790ff 144px,#448dff 156px,#6389ff 168px,#8586ff 180px,#a881ff 192px,#ce7dff 204px,#f679ff 216px,#ff66e1 228px,#ff54c1 240px,#ff45a8 252px,#ff3994 264px,#ff2f82 276px,#ff2673 288px,#ff1f67 300px,#ff185b 312px,#ff1352 324px,#ff0e49 336px,#ff0941 348px,#ff053b 360px,#ff0134 372px,#ff002f 384px,#ff002a 396px,#ff0025 408px,#ff0021 420px,#ff001d 432px,#ff0019 444px,#ff0016 456px,#ff0012 468px,#ff000f 480px,#ff000d 492px,#ff000a 504px,#ff0008 516px,#ff0005 528px,#ff0003 540px,#ff0001 552px)"></i>
<i style="margin-left:42px;width:545px;background:linear-gradient(90deg,#00aaff,#00a8ff 12px,#00a6ff 24px,#00a4ff 36px,#00a2ff 48px,#00a0ff 60px,#009dff 72px,#009bff 84px,#0098ff 96px,#0095ff 108px,#0092ff 120px,#0f8fff 132px,#2a8cff 144px,#4888ff 156px,#6785ff 168px,#8881ff 180px,#ab7dff 192px,#d178ff 204px,#f973ff 216px,#ff60de 228px,#ff4fc0 240px,#ff41a7 252px,#ff3593 264px,#ff2c82 276px,#ff2373 288px,#ff1c66 300px,#ff165b 312px,#ff1052 324px,#ff0c49 336px,#ff0742 348px,#ff033b 360px,#ff0035 372px,#ff002f 384px,#ff002a 396px,#ff0025 408px,#ff0021 420px,#ff001d 432px,#ff0019 444px,#ff0016 456px,#ff0013 468px,#ff0010 480px,#ff000d 492px,#ff000a 504px,#ff0008 516px,#ff0006 528px,#ff0004 540px,#ff0003 545px)"></i>
<i style="margin-left:43px;width:538px;background:linear-gradient(90deg,#00a7ff,#00a5ff 12px,#00a3ff 24px,#00a0ff 36px,#009eff 48px,#009cff 60px,#0099ff 72px,#0097ff 84px,#0094ff 96px,#0091ff 108px,#008eff 120px,#128bff 132px,#2e88ff 144px,#4b84ff 156px,#6a80ff 168px,#8c7cff 180px,#af78ff 192px,#d473ff 204px,#fc6eff 216px,#ff5bdc 228px,#ff4abe 240px,#ff3da6 252px,#ff3292 264px,#ff2881 276px,#ff2073 288px,#ff1a66 300px,#ff145b 312px,#ff0e52 324px,#ff0a49 336px,#ff0542 348px,#ff023b 360px,#ff0035 372px,#ff002f 384px,#ff002a 396px,#ff0026 408px,#ff0021 420px,#ff001d 432px,#ff001a 444px,#ff0016 456px,#ff0013 468px,#ff0010 480px,#ff000d 492px,#ff000b 504px,#ff0008 516px,#ff0006 528px,#ff0004 538px)"></i>
<i style="margin-left:43px;width:533px;background:linear-gradient(90deg,#00a4ff,#00a1ff 12px,#009fff 24px,#009dff 36px,#009bff 48px,#0098ff 60px,#0096ff 72px,#0093ff 84px,#0090ff 96px,#008dff 108px,#008aff 120px,#1487ff 132px,#2f84ff 144px,#4c80ff 156px,#6b7cff 168px,#8c78ff 180px,#af74ff 192px,#d46fff 204px,#fc6aff 216px,#ff57dd 228px,#ff47bf 240px,#ff3aa7 252px,#ff2f93 264px,#ff2682 276px,#ff1e74 288px,#ff1867 300px,#ff125c 312px,#ff0d53 324px,#ff084a 336px,#ff0443 348px,#ff003c 360px,#ff0036 372px,#ff0030 384px,#ff002b 396px,#ff0026 408px,#ff0022 420px,#ff001e 432px,#ff001a 444px,#ff0017 456px,#ff0014 468px,#ff0011 480px,#ff000e 492px,#ff000b 504px,#ff0009 516px,#ff0007 528px,#ff0006 533px)"></i>
<i style="margin-left:44px;width:526px;background:linear-gradient(90deg,#00a0ff,#009eff 12px,#009cff 24px,#009aff 36px,#0097ff 48px,#0095ff 60px,#0092ff 72px,#008fff 84px,#008dff 96px,#008aff 108px,#0086ff 120px,#1783ff 132px,#337fff 144px,#507cff 156px,#6f78ff 168px,#9073ff 180px,#b26fff 192px,#d76aff 204px,#ff65ff 216px,#ff52db 228px,#ff43be 240px,#ff36a6 252px,#ff2c92 264px,#ff2382 276px,#ff1c73 288px,#ff1567 300px,#ff0f5c 312px,#ff0a53 324px,#ff064a 336px,#ff0243 348px,#ff003c 360px,#ff0036 372px,#ff0030 384px,#ff002b 396px,#ff0027 408px,#ff0022 420px,#ff001e 432px,#ff001b 444px,#ff0017 456px,#ff0014 468px,#ff0011 480px,#ff000e 492px,#ff000c 504px,#ff0009 516px,#ff0007 526px)"></i>
<i style="margin-left:45px;width:519px;background:linear-gradient(90deg,#009dff,#009bff 12px,#0099ff 24px,#0096ff 36px,#0094ff 48px,#0091ff 60px,#008fff 72px,#008cff 84px,#0089ff 96px,#0086ff 108px,#0182ff 120px,#1b7fff 132px,#377bff 144px,#5477ff 156px,#7273ff 168px,#936fff 180px,#b66aff 192px,#db65ff 204px,#ff5ffc 216px,#ff4dd9 228px,#ff3ebc 240px,#ff32a5 252px,#ff2992 264px,#ff2081 276px,#ff1973 288px,#ff1367 300px,#ff0d5c 312px,#ff0853 324px,#ff044b 336px,#ff0043 348px,#ff003c 360px,#ff0036 372px,#ff0031 384px,#ff002c 396px,#ff0027 408px,#ff0023 420px,#ff001f 432px,#ff001b 444px,#ff0018 456px,#ff0014 468px,#ff0011 480px,#ff000f 492px,#ff000c 504px,#ff000a 516px,#ff0009 519px)"></i>
<i style="margin-left:45px;width:514px;background:linear-gradient(90deg,#009aff,#0098ff 12px,#0095ff 24px,#0093ff 36px,#0091ff 48px,#008eff 60px,#008bff 72px,#0088ff 84px,#0085ff 96px,#0082ff 108px,#037fff 120px,#1c7bff 132px,#3877ff 144px,#5574ff 156px,#736fff 168px,#936bff 180px,#b666ff 192px,#da61ff 204px,#ff5bfc 216px,#ff49d9 228px,#ff3bbd 240px,#ff30a6 252px,#ff2692 264px,#ff1e82 276px,#ff1774 288px,#ff1168 300px,#ff0c5d 312px,#ff0754 324px,#ff034b 336px,#ff0044 348px,#ff003d 360px,#ff0037 372px,#ff0031 384px,#ff002c 396px,#ff0028 408px,#ff0023 420px,#ff001f 432px,#ff001c 444px,#ff0018 456px,#ff0015 468px,#ff0012 480px,#ff000f 492px,#ff000d 504px,#ff000b 514px)"></i>
<i style="margin-left:46px;width:507px;background:linear-gradient(90deg,#0097ff,#0094ff 12px,#0092ff 24px,#0090ff 36px,#008dff 48px,#008aff 60px,#0088ff 72px,#0085ff 84px,#0082ff 96px,#007eff 108px,#067bff 120px,#2077ff 132px,#3b73ff 144px,#586fff 156px,#766bff 168px,#9767ff 180px,#b962ff 192px,#de5dff 204px,#ff55fa 216px,#ff45d7 228px,#ff37bc 240px,#ff2ca5 252px,#ff2392 264px,#ff1b82 276px,#ff1474 288px,#ff0f68 300px,#ff095d 312px,#ff0554 324px,#ff014b 336px,#ff0044 348px,#ff003d 360px,#ff0037 372px,#ff0032 384px,#ff002d 396px,#ff0028 408px,#ff0024 420px,#ff0020 432px,#ff001c 444px,#ff0019 456px,#ff0015 468px,#ff0012 480px,#ff0010 492px,#ff000d 504px,#ff000c 507px)"></i>
<i style="margin-left:47px;width:500px;background:linear-gradient(90deg,#0094ff,#0091ff 12px,#008fff 24px,#008cff 36px,#008aff 48px,#0087ff 60px,#0084ff 72px,#0081ff 84px,#007eff 96px,#007aff 108px,#0a77ff 120px,#2373ff 132px,#3f6fff 144px,#5b6bff 156px,#7a67ff 168px,#9a62ff 180px,#bc5dff 192px,#e158ff 204px,#ff50f7 216px,#ff40d5 228px,#ff33ba 240px,#ff29a4 252px,#ff2091 264px,#ff1881 276px,#ff1274 288px,#ff0c68 300px,#ff075d 312px,#ff0354 324px,#ff004c 336px,#ff0044 348px,#ff003d 360px,#ff0037 372px,#ff0032 384px,#ff002d 396px,#ff0028 408px,#ff0024 420px,#ff0020 432px,#ff001c 444px,#ff0019 456px,#ff0016 468px,#ff0013 480px,#ff0010 492px,#ff000e 500px)"></i>
<i style="margin-left:47px;width:495px;background:linear-gradient(90deg,#0091ff,#008eff 12px,#008cff 24px,#0089ff 36px,#0087ff 48px,#0084ff 60px,#0081ff 72px,#007eff 84px,#007aff 96px,#0077ff 108px,#0b73ff 120px,#2570ff 132px,#406cff 144px,#5c68ff 156px,#7a63ff 168px,#9a5eff 180px,#bc59ff 192px,#e054ff 204px,#ff4cf7 216px,#ff3dd6 228px,#ff30bb 240px,#ff26a5 252px,#ff1e92 264px,#ff1682 276px,#ff1074 288px,#ff0a68 300px,#ff065e 312px,#ff0155 324px,#ff004c 336px,#ff0045 348px,#ff003e 360px,#ff0038 372px,#ff0033 384px,#ff002d 396px,#ff0029 408px,#ff0025 420px,#ff0021 432px,#ff001d 444px,#ff0019 456px,#ff0016 468px,#ff0013 480px,#ff0011 492px,#ff0010 495px)"></i>
<i style="margin-left:48px;width:488px;background:linear-gradient(90deg,#008eff,#008bff 12px,#0089ff 24px,#0086ff 36px,#0083ff 48px,#0080ff 60px,#007dff 72px,#007aff 84px,#0077ff 96px,#0073ff 108px,#0f70ff 120px,#286cff 132px,#4368ff 144px,#6064ff 156px,#7e5fff 168px,#9e5aff 180px,#bf55ff 192px,#e350ff 204px,#ff47f5 216px,#ff38d4 228px,#ff2dba 240px,#ff23a4 252px,#ff1b91 264px,#ff1482 276px,#ff0d74 288px,#ff0868 300px,#ff045e 312px,#ff0055 324px,#ff004c 336px,#ff0045 348px,#ff003e 360px,#ff0038 372px,#ff0033 384px,#ff002e 396px,#ff0029 408px,#ff0025 420px,#ff0021 432px,#ff001d 444px,#ff001a 456px,#ff0017 468px,#ff0014 480px,#ff0012 488px)"></i>
<i style="margin-left:49px;width:481px;background:linear-gradient(90deg,#008aff,#0088ff 12px,#0085ff 24px,#0083ff 36px,#0080ff 48px,#007dff 60px,#007aff 72px,#0077ff 84px,#0073ff 96px,#0070ff 108px,#126cff 120px,#2c68ff 132px,#4764ff 144px,#6360ff 156px,#815bff 168px,#a156ff 180px,#c251ff 192px,#e64bff 204px,#ff42f2 216px,#ff34d2 228px,#ff29b8 240px,#ff20a3 252px,#ff1891 264px,#ff1181 276px,#ff0b74 288px,#ff0668 300px,#ff025e 312px,#ff0055 324px,#ff004d 336px,#ff0045 348px,#ff003f 360px,#ff0039 372px,#ff0033 384px,#ff002e 396px,#ff0029 408px,#ff0025 420px,#ff0021 432px,#ff001e 444px,#ff001a 456px,#ff0017 468px,#ff0014 480px,#ff0014 481px)"></i>
<i style="margin-left:49px;width:476px;background:linear-gradient(90deg,#0088ff,#0085ff 12px,#0082ff 24px,#0080ff 36px,#007dff 48px,#007aff 60px,#0077ff 72px,#0073ff 84px,#0070ff 96px,#006cff 108px,#1369ff 120px,#2d65ff 132px,#4860ff 144px,#645cff 156px,#8257ff 168px,#a152ff 180px,#c34dff 192px,#e648ff 204px,#ff3ef3 216px,#ff31d3 228px,#ff26b9 240px,#ff1da4 252px,#ff1592 264px,#ff0f82 276px,#ff0975 288px,#ff0469 300px,#ff005f 312px,#ff0055 324px,#ff004d 336px,#ff0046 348px,#ff003f 360px,#ff0039 372px,#ff0034 384px,#ff002f 396px,#ff002a 408px,#ff0026 420px,#ff0022 432px,#ff001e 444px,#ff001b 456px,#ff0018 468px,#ff0016 476px)"></i>
<i style="margin-left:50px;width:469px;background:linear-gradient(90deg,#0085ff,#0082ff 12px,#007fff 24px,#007dff 36px,#007aff 48px,#0077ff 60px,#0073ff 72px,#0070ff 84px,#006dff 96px,#0069ff 108px,#1765ff 120px,#3061ff 132px,#4b5dff 144px,#6758ff 156px,#8553ff 168px,#a44eff 180px,#c649ff 192px,#e943ff 204px,#ff3af0 216px,#ff2dd1 228px,#ff23b8 240px,#ff1aa3 252px,#ff1391 264px,#ff0c82 276px,#ff0774 288px,#ff0269 300px,#ff005f 312px,#ff0056 324px,#ff004d 336px,#ff0046 348px,#ff0040 360px,#ff0039 372px,#ff0034 384px,#ff002f 396px,#ff002a 408px,#ff0026 420px,#ff0022 432px,#ff001e 444px,#ff001b 456px,#ff0018 468px,#ff0018 469px)"></i>
<i style="margin-left:51px;width:462px;background:linear-gradient(90deg,#0082ff,#007fff 12px,#007cff 24px,#0079ff 36px,#0076ff 48px,#0073ff 60px,#0070ff 72px,#006dff 84px,#0069ff 96px,#0265ff 108px,#1a61ff 120px,#335dff 132px,#4e59ff 144px,#6a54ff 156px,#884fff 168px,#a74aff 180px,#c945ff 192px,#ec3fff 204px,#ff35ee 216px,#ff29d0 228px,#ff1fb7 240px,#ff17a2 252px,#ff1090 264px,#ff0a81 276px,#ff0574 288px,#ff0069 300px,#ff005f 312px,#ff0056 324px,#ff004e 336px,#ff0046 348px,#ff0040 360px,#ff003a 372px,#ff0034 384px,#ff002f 396px,#ff002b 408px,#ff0026 420px,#ff0022 432px,#ff001f 444px,#ff001b 456px,#ff001a 462px)"></i>
<i style="margin-left:52px;width:456px;background:linear-gradient(90deg,#007fff,#007cff 12px,#0079ff 24px,#0076ff 36px,#0073ff 48px,#0070ff 60px,#006dff 72px,#0069ff 84px,#0066ff 96px,#0562ff 108px,#1e5eff 120px,#375aff 132px,#5155ff 144px,#6d50ff 156px,#8b4cff 168px,#aa46ff 180px,#cb41ff 192px,#ef3bff 204px,#ff31ec 216px,#ff25ce 228px,#ff1cb6 240px,#ff14a1 252px,#ff0d90 264px,#ff0781 276px,#ff0274 288px,#ff0069 300px,#ff005f 312px,#ff0056 324px,#ff004e 336px,#ff0046 348px,#ff0040 360px,#ff003a 372px,#ff0035 384px,#ff0030 396px,#ff002b 408px,#ff0027 420px,#ff0023 432px,#ff001f 444px,#ff001c 456px)"></i>
<i style="margin-left:52px;width:450px;background:linear-gradient(90deg,#007cff,#0079ff 12px,#0076ff 24px,#0073ff 36px,#0070ff 48px,#006dff 60px,#006aff 72px,#0066ff 84px,#0062ff 96px,#075fff 108px,#1f5bff 120px,#3856ff 132px,#5252ff 144px,#6e4dff 156px,#8c48ff 168px,#ab43ff 180px,#cb3dff 192px,#ee37ff 204px,#ff2dec 216px,#ff22cf 228px,#ff19b6 240px,#ff12a2 252px,#ff0b91 264px,#ff0582 276px,#ff0175 288px,#ff0069 300px,#ff005f 312px,#ff0056 324px,#ff004e 336px,#ff0047 348px,#ff0041 360px,#ff003b 372px,#ff0035 384px,#ff0030 396px,#ff002c 408px,#ff0027 420px,#ff0023 432px,#ff0020 444px,#ff001e 450px)"></i>
<i style="margin-left:53px;width:443px;background:linear-gradient(90deg,#0079ff,#0076ff 12px,#0073ff 24px,#0070ff 36px,#006dff 48px,#006aff 60px,#0066ff 72px,#0063ff 84px,#005fff 96px,#0a5bff 108px,#2257ff 120px,#3b53ff 132px,#554eff 144px,#7149ff 156px,#8f44ff 168px,#ae3fff 180px,#ce39ff 192px,#f133ff 204px,#ff29ea 216px,#ff1fcd 228px,#ff16b5 240px,#ff0fa1 252px,#ff0890 264px,#ff0381 276px,#ff0074 288px,#ff0069 300px,#ff005f 312px,#ff0056 324px,#ff004e 336px,#ff0047 348px,#ff0041 360px,#ff003b 372px,#ff0035 384px,#ff0030 396px,#ff002c 408px,#ff0028 420px,#ff0024 432px,#ff0020 443px)"></i>
<i style="margin-left:54px;width:437px;background:linear-gradient(90deg,#0076ff,#0073ff 12px,#0070ff 24px,#006dff 36px,#006aff 48px,#0067ff 60px,#0063ff 72px,#0060ff 84px,#005cff 96px,#0d58ff 108px,#2554ff 120px,#3e4fff 132px,#594bff 144px,#7446ff 156px,#9241ff 168px,#b03bff 180px,#d135ff 192px,#f42fff 204px,#ff25e8 216px,#ff1bcb 228px,#ff13b4 240px,#ff0ca0 252px,#ff068f 264px,#ff0181 276px,#ff0074 288px,#ff0069 300px,#ff005f 312px,#ff0056 324px,#ff004f 336px,#ff0047 348px,#ff0041 360px,#ff003b 372px,#ff0036 384px,#ff0031 396px,#ff002c 408px,#ff0028 420px,#ff0024 432px,#ff0022 437px)"></i>
<i style="margin-left:55px;width:430px;background:linear-gradient(90deg,#0073ff,#0070ff 12px,#006dff 24px,#006aff 36px,#0067ff 48px,#0064ff 60px,#0060ff 72px,#005cff 84px,#0058ff 96px,#1154ff 108px,#2850ff 120px,#414cff 132px,#5c47ff 144px,#7742ff 156px,#953dff 168px,#b337ff 180px,#d432ff 192px,#f72bff 204px,#ff21e6 216px,#ff18ca 228px,#ff10b3 240px,#ff099f 252px,#ff038f 264px,#ff0081 276px,#ff0074 288px,#ff0069 300px,#ff005f 312px,#ff0056 324px,#ff004f 336px,#ff0048 348px,#ff0041 360px,#ff003b 372px,#ff0036 384px,#ff0031 396px,#ff002c 408px,#ff0028 420px,#ff0025 430px)"></i>
<i style="margin-left:55px;width:424px;background:linear-gradient(90deg,#0070ff,#006eff 12px,#006bff 24px,#0067ff 36px,#0064ff 48px,#0061ff 60px,#005dff 72px,#0059ff 84px,#0056ff 96px,#1251ff 108px,#2a4dff 120px,#4249ff 132px,#5d44ff 144px,#783fff 156px,#953aff 168px,#b434ff 180px,#d42eff 192px,#f628ff 204px,#ff1ee6 216px,#ff15ca 228px,#ff0db4 240px,#ff07a0 252px,#ff0190 264px,#ff0081 276px,#ff0075 288px,#ff006a 300px,#ff0060 312px,#ff0057 324px,#ff004f 336px,#ff0048 348px,#ff0042 360px,#ff003c 372px,#ff0037 384px,#ff0032 396px,#ff002d 408px,#ff0029 420px,#ff0027 424px)"></i>
<i style="margin-left:56px;width:418px;background:linear-gradient(90deg,#006eff,#006bff 12px,#0068ff 24px,#0064ff 36px,#0061ff 48px,#005eff 60px,#005aff 72px,#0056ff 84px,#0052ff 96px,#154eff 108px,#2d4aff 120px,#4645ff 132px,#6040ff 144px,#7b3bff 156px,#9836ff 168px,#b630ff 180px,#d72aff 192px,#f924ff 204px,#ff1ae4 216px,#ff12c9 228px,#ff0ab2 240px,#ff049f 252px,#ff008f 264px,#ff0081 276px,#ff0075 288px,#ff006a 300px,#ff0060 312px,#ff0057 324px,#ff004f 336px,#ff0048 348px,#ff0042 360px,#ff003c 372px,#ff0037 384px,#ff0032 396px,#ff002d 408px,#ff002a 418px)"></i>
<i style="margin-left:57px;width:411px;background:linear-gradient(90deg,#006bff,#0068ff 12px,#0065ff 24px,#0061ff 36px,#005eff 48px,#005bff 60px,#0057ff 72px,#0053ff 84px,#024fff 96px,#184bff 108px,#3046ff 120px,#4942ff 132px,#633dff 144px,#7e38ff 156px,#9b32ff 168px,#b92dff 180px,#d927ff 192px,#fb20ff 204px,#ff17e2 216px,#ff0ec8 228px,#ff08b1 240px,#ff029f 252px,#ff008f 264px,#ff0081 276px,#ff0074 288px,#ff0069 300px,#ff0060 312px,#ff0057 324px,#ff0050 336px,#ff0049 348px,#ff0042 360px,#ff003c 372px,#ff0037 384px,#ff0032 396px,#ff002e 408px,#ff002c 411px)"></i>
<i style="margin-left:58px;width:404px;background:linear-gradient(90deg,#0068ff,#0065ff 12px,#0062ff 24px,#005fff 36px,#005bff 48px,#0058ff 60px,#0054ff 72px,#0050ff 84px,#054cff 96px,#1b48ff 108px,#3343ff 120px,#4c3eff 132px,#663aff 144px,#8134ff 156px,#9e2fff 168px,#bc29ff 180px,#dc23ff 192px,#fe1dff 204px,#ff13e0 216px,#ff0bc6 228px,#ff05b0 240px,#ff009e 252px,#ff008e 264px,#ff0080 276px,#ff0074 288px,#ff0069 300px,#ff0060 312px,#ff0057 324px,#ff0050 336px,#ff0049 348px,#ff0042 360px,#ff003c 372px,#ff0037 384px,#ff0032 396px,#ff002f 404px)"></i>
<i style="margin-left:59px;width:398px;background:linear-gradient(90deg,#0065ff,#0062ff 12px,#005fff 24px,#005cff 36px,#0058ff 48px,#0055ff 60px,#0051ff 72px,#004dff 84px,#0849ff 96px,#1e44ff 108px,#3640ff 120px,#4f3bff 132px,#6936ff 144px,#8431ff 156px,#a12bff 168px,#bf26ff 180px,#df1fff 192px,#ff19fd 204px,#ff10de 216px,#ff08c5 228px,#ff02af 240px,#ff009d 252px,#ff008d 264px,#ff0080 276px,#ff0074 288px,#ff0069 300px,#ff0060 312px,#ff0057 324px,#ff0050 336px,#ff0049 348px,#ff0042 360px,#ff003d 372px,#ff0037 384px,#ff0033 396px,#ff0032 398px)"></i>
<i style="margin-left:59px;width:392px;background:linear-gradient(90deg,#0063ff,#0060ff 12px,#005cff 24px,#0059ff 36px,#0056ff 48px,#0052ff 60px,#004eff 72px,#004aff 84px,#0946ff 96px,#2042ff 108px,#373dff 120px,#5038ff 132px,#6933ff 144px,#842eff 156px,#a128ff 168px,#bf22ff 180px,#df1cff 192px,#ff16fe 204px,#ff0ddf 216px,#ff06c5 228px,#ff00b0 240px,#ff009e 252px,#ff008e 264px,#ff0081 276px,#ff0075 288px,#ff006a 300px,#ff0061 312px,#ff0058 324px,#ff0050 336px,#ff0049 348px,#ff0043 360px,#ff003d 372px,#ff0038 384px,#ff0035 392px)"></i>
<i style="margin-left:60px;width:385px;background:linear-gradient(90deg,#0060ff,#005dff 12px,#005aff 24px,#0056ff 36px,#0053ff 48px,#004fff 60px,#004bff 72px,#0047ff 84px,#0c43ff 96px,#233eff 108px,#3a3aff 120px,#5235ff 132px,#6c30ff 144px,#872bff 156px,#a425ff 168px,#c21fff 180px,#e119ff 192px,#ff12fb 204px,#ff0add 216px,#ff03c4 228px,#ff00af 240px,#ff009d 252px,#ff008e 264px,#ff0080 276px,#ff0074 288px,#ff006a 300px,#ff0060 312px,#ff0058 324px,#ff0050 336px,#ff004a 348px,#ff0043 360px,#ff003e 372px,#ff0038 384px,#ff0038 385px)"></i>
<i style="margin-left:61px;width:379px;background:linear-gradient(90deg,#005dff,#005aff 12px,#0057ff 24px,#0053ff 36px,#0050ff 48px,#004cff 60px,#0048ff 72px,#0044ff 84px,#0f40ff 96px,#263bff 108px,#3d37ff 120px,#5532ff 132px,#6f2dff 144px,#8a27ff 156px,#a621ff 168px,#c41cff 180px,#e415ff 192px,#ff0ef9 204px,#ff06db 216px,#ff00c3 228px,#ff00ae 240px,#ff009c 252px,#ff008d 264px,#ff0080 276px,#ff0074 288px,#ff006a 300px,#ff0060 312px,#ff0058 324px,#ff0051 336px,#ff004a 348px,#ff0043 360px,#ff003e 372px,#ff003b 379px)"></i>
<i style="margin-left:62px;width:372px;background:linear-gradient(90deg,#005bff,#0057ff 12px,#0054ff 24px,#0050ff 36px,#004dff 48px,#0049ff 60px,#0045ff 72px,#0041ff 84px,#123dff 96px,#2938ff 108px,#4033ff 120px,#582eff 132px,#7229ff 144px,#8d24ff 156px,#a91eff 168px,#c718ff 180px,#e612ff 192px,#ff0bf7 204px,#ff03da 216px,#ff00c2 228px,#ff00ad 240px,#ff009c 252px,#ff008d 264px,#ff0080 276px,#ff0074 288px,#ff006a 300px,#ff0060 312px,#ff0058 324px,#ff0051 336px,#ff004a 348px,#ff0044 360px,#ff003e 372px)"></i>
<i style="margin-left:63px;width:365px;background:linear-gradient(90deg,#0058ff,#0055ff 12px,#0051ff 24px,#004eff 36px,#004aff 48px,#0046ff 60px,#0042ff 72px,#003eff 84px,#153aff 96px,#2c35ff 108px,#4330ff 120px,#5b2bff 132px,#7526ff 144px,#9021ff 156px,#ac1bff 168px,#ca15ff 180px,#e90eff 192px,#ff07f4 204px,#ff00d8 216px,#ff00c0 228px,#ff00ac 240px,#ff009b 252px,#ff008c 264px,#ff007f 276px,#ff0074 288px,#ff0069 300px,#ff0060 312px,#ff0058 324px,#ff0051 336px,#ff004a 348px,#ff0044 360px,#ff0041 365px)"></i>
<i style="margin-left:64px;width:359px;background:linear-gradient(90deg,#0055ff,#0052ff 12px,#004eff 24px,#004bff 36px,#0047ff 48px,#0043ff 60px,#003fff 72px,#033bff 84px,#1837ff 96px,#2e32ff 108px,#462dff 120px,#5e28ff 132px,#7823ff 144px,#921dff 156px,#af17ff 168px,#cc11ff 180px,#eb0bff 192px,#ff04f2 204px,#ff00d6 216px,#ff00bf 228px,#ff00ab 240px,#ff009a 252px,#ff008c 264px,#ff007f 276px,#ff0074 288px,#ff0069 300px,#ff0060 312px,#ff0058 324px,#ff0051 336px,#ff004a 348px,#ff0044 359px)"></i>
<i style="margin-left:65px;width:352px;background:linear-gradient(90deg,#0053ff,#004fff 12px,#004cff 24px,#0048ff 36px,#0044ff 48px,#0040ff 60px,#003cff 72px,#0638ff 84px,#1b34ff 96px,#312fff 108px,#492aff 120px,#6125ff 132px,#7a20ff 144px,#951aff 156px,#b114ff 168px,#cf0eff 180px,#ee07ff 192px,#ff01f0 204px,#ff00d5 216px,#ff00be 228px,#ff00ab 240px,#ff009a 252px,#ff008b 264px,#ff007f 276px,#ff0073 288px,#ff0069 300px,#ff0060 312px,#ff0058 324px,#ff0051 336px,#ff004a 348px,#ff0048 352px)"></i>
<i style="margin-left:66px;width:345px;background:linear-gradient(90deg,#0050ff,#004dff 12px,#0049ff 24px,#0045ff 36px,#0042ff 48px,#003eff 60px,#003aff 72px,#0935ff 84px,#1e31ff 96px,#342cff 108px,#4b27ff 120px,#6422ff 132px,#7d1dff 144px,#9817ff 156px,#b411ff 168px,#d10bff 180px,#f004ff 192px,#ff00ee 204px,#ff00d3 216px,#ff00bd 228px,#ff00aa 240px,#ff0099 252px,#ff008b 264px,#ff007e 276px,#ff0073 288px,#ff0069 300px,#ff0060 312px,#ff0058 324px,#ff0051 336px,#ff004c 345px)"></i>
<i style="margin-left:67px;width:339px;background:linear-gradient(90deg,#004dff,#004aff 12px,#0046ff 24px,#0043ff 36px,#003fff 48px,#003bff 60px,#0037ff 72px,#0c32ff 84px,#212eff 96px,#3729ff 108px,#4e24ff 120px,#661fff 132px,#8019ff 144px,#9a14ff 156px,#b60eff 168px,#d407ff 180px,#f301ff 192px,#ff00ec 204px,#ff00d2 216px,#ff00bc 228px,#ff00a9 240px,#ff0099 252px,#ff008a 264px,#ff007e 276px,#ff0073 288px,#ff0069 300px,#ff0060 312px,#ff0058 324px,#ff0051 336px,#ff004f 339px)"></i>
<i style="margin-left:67px;width:333px;background:linear-gradient(90deg,#004bff,#0048ff 12px,#0044ff 24px,#0040ff 36px,#003cff 48px,#0038ff 60px,#0034ff 72px,#0d30ff 84px,#222bff 96px,#3827ff 108px,#4f22ff 120px,#671cff 132px,#8017ff 144px,#9b11ff 156px,#b70bff 168px,#d405ff 180px,#f300ff 192px,#ff00ed 204px,#ff00d2 216px,#ff00bc 228px,#ff00a9 240px,#ff0099 252px,#ff008b 264px,#ff007f 276px,#ff0074 288px,#ff006a 300px,#ff0061 312px,#ff0059 324px,#ff0053 333px)"></i>
<i style="margin-left:68px;width:326px;background:linear-gradient(90deg,#0049ff,#0045ff 12px,#0041ff 24px,#003eff 36px,#003aff 48px,#0036ff 60px,#0031ff 72px,#102dff 84px,#2528ff 96px,#3b24ff 108px,#521fff 120px,#6a19ff 132px,#8314ff 144px,#9d0eff 156px,#b908ff 168px,#d602ff 180px,#f500ff 192px,#ff00eb 204px,#ff00d1 216px,#ff00bb 228px,#ff00a9 240px,#ff0099 252px,#ff008b 264px,#ff007e 276px,#ff0073 288px,#ff006a 300px,#ff0061 312px,#ff0059 324px,#ff0058 326px)"></i>
<i style="margin-left:69px;width:320px;background:linear-gradient(90deg,#0046ff,#0042ff 12px,#003fff 24px,#003bff 36px,#0037ff 48px,#0033ff 60px,#002fff 72px,#132aff 84px,#2826ff 96px,#3e21ff 108px,#551cff 120px,#6d16ff 132px,#8611ff 144px,#a00bff 156px,#bc05ff 168px,#d900ff 180px,#f700ff 192px,#ff00e9 204px,#ff00cf 216px,#ff00ba 228px,#ff00a8 240px,#ff0098 252px,#ff008a 264px,#ff007e 276px,#ff0073 288px,#ff0069 300px,#ff0061 312px,#ff005b 320px)"></i>
<i style="margin-left:70px;width:313px;background:linear-gradient(90deg,#0043ff,#0040ff 12px,#003cff 24px,#0038ff 36px,#0034ff 48px,#0030ff 60px,#012cff 72px,#1627ff 84px,#2b23ff 96px,#401eff 108px,#5719ff 120px,#6f13ff 132px,#880eff 144px,#a308ff 156px,#be02ff 168px,#db00ff 180px,#fa00ff 192px,#ff00e7 204px,#ff00ce 216px,#ff00b9 228px,#ff00a7 240px,#ff0097 252px,#ff008a 264px,#ff007e 276px,#ff0073 288px,#ff0069 300px,#ff0061 312px,#ff0060 313px)"></i>
<i style="margin-left:71px;width:306px;background:linear-gradient(90deg,#0041ff,#003dff 12px,#003aff 24px,#0036ff 36px,#0032ff 48px,#002eff 60px,#0429ff 72px,#1825ff 84px,#2d20ff 96px,#431bff 108px,#5a16ff 120px,#7210ff 132px,#8b0bff 144px,#a505ff 156px,#c100ff 168px,#de00ff 180px,#fc00ff 192px,#ff00e5 204px,#ff00cd 216px,#ff00b8 228px,#ff00a6 240px,#ff0097 252px,#ff0089 264px,#ff007d 276px,#ff0073 288px,#ff0069 300px,#ff0065 306px)"></i>
<i style="margin-left:72px;width:300px;background:linear-gradient(90deg,#003eff,#003bff 12px,#0037ff 24px,#0033ff 36px,#002fff 48px,#002bff 60px,#0727ff 72px,#1b22ff 84px,#301dff 96px,#4618ff 108px,#5d13ff 120px,#750eff 132px,#8d08ff 144px,#a802ff 156px,#c300ff 168px,#e000ff 180px,#fe00ff 192px,#ff00e3 204px,#ff00cb 216px,#ff00b7 228px,#ff00a6 240px,#ff0096 252px,#ff0089 264px,#ff007d 276px,#ff0073 288px,#ff0069 300px)"></i>
<i style="margin-left:73px;width:293px;background:linear-gradient(90deg,#003cff,#0038ff 12px,#0035ff 24px,#0031ff 36px,#002dff 48px,#0028ff 60px,#0a24ff 72px,#1e1fff 84px,#331aff 96px,#4915ff 108px,#5f10ff 120px,#770bff 132px,#9005ff 144px,#aa00ff 156px,#c600ff 168px,#e200ff 180px,#ff00fe 192px,#ff00e2 204px,#ff00ca 216px,#ff00b6 228px,#ff00a5 240px,#ff0096 252px,#ff0089 264px,#ff007d 276px,#ff0072 288px,#ff006e 293px)"></i>
<i style="margin-left:74px;width:286px;background:linear-gradient(90deg,#003aff,#0036ff 12px,#0032ff 24px,#002eff 36px,#002aff 48px,#0026ff 60px,#0d21ff 72px,#211dff 84px,#3518ff 96px,#4b13ff 108px,#620dff 120px,#7a08ff 132px,#9302ff 144px,#ad00ff 156px,#c800ff 168px,#e500ff 180px,#ff00fb 192px,#ff00e0 204px,#ff00c9 216px,#ff00b5 228px,#ff00a4 240px,#ff0095 252px,#ff0088 264px,#ff007d 276px,#ff0074 286px)"></i>
<i style="margin-left:75px;width:280px;background:linear-gradient(90deg,#0037ff,#0033ff 12px,#0030ff 24px,#002cff 36px,#0027ff 48px,#0023ff 60px,#0f1fff 72px,#231aff 84px,#3815ff 96px,#4e10ff 108px,#650bff 120px,#7c05ff 132px,#9500ff 144px,#af00ff 156px,#ca00ff 168px,#e700ff 180px,#ff00f9 192px,#ff00de 204px,#ff00c8 216px,#ff00b4 228px,#ff00a3 240px,#ff0095 252px,#ff0088 264px,#ff007c 276px,#ff0079 280px)"></i>
<i style="margin-left:76px;width:273px;background:linear-gradient(90deg,#0035ff,#0031ff 12px,#002dff 24px,#0029ff 36px,#0025ff 48px,#0020ff 60px,#121cff 72px,#2617ff 84px,#3b12ff 96px,#510dff 108px,#6708ff 120px,#7f02ff 132px,#9800ff 144px,#b200ff 156px,#cd00ff 168px,#e900ff 180px,#ff00f7 192px,#ff00dd 204px,#ff00c6 216px,#ff00b3 228px,#ff00a3 240px,#ff0094 252px,#ff0087 264px,#ff007f 273px)"></i>
<i style="margin-left:77px;width:266px;background:linear-gradient(90deg,#0032ff,#002fff 12px,#002bff 24px,#0027ff 36px,#0022ff 48px,#021eff 60px,#1519ff 72px,#2915ff 84px,#3d10ff 96px,#530aff 108px,#6a05ff 120px,#8100ff 132px,#9a00ff 144px,#b400ff 156px,#cf00ff 168px,#eb00ff 180px,#ff00f5 192px,#ff00db 204px,#ff00c5 216px,#ff00b2 228px,#ff00a2 240px,#ff0094 252px,#ff0087 264px,#ff0085 266px)"></i>
<i style="margin-left:78px;width:260px;background:linear-gradient(90deg,#0030ff,#002cff 12px,#0028ff 24px,#0024ff 36px,#0020ff 48px,#041bff 60px,#1717ff 72px,#2b12ff 84px,#400dff 96px,#5608ff 108px,#6c02ff 120px,#8400ff 132px,#9d00ff 144px,#b600ff 156px,#d100ff 168px,#ee00ff 180px,#ff00f3 192px,#ff00da 204px,#ff00c4 216px,#ff00b1 228px,#ff00a1 240px,#ff0093 252px,#ff008b 260px)"></i>
<i style="margin-left:79px;width:253px;background:linear-gradient(90deg,#002eff,#002aff 12px,#0026ff 24px,#0022ff 36px,#001dff 48px,#0719ff 60px,#1a14ff 72px,#2e0fff 84px,#430aff 96px,#5805ff 108px,#6f00ff 120px,#8600ff 132px,#9f00ff 144px,#b900ff 156px,#d400ff 168px,#f000ff 180px,#ff00f1 192px,#ff00d8 204px,#ff00c3 216px,#ff00b1 228px,#ff00a1 240px,#ff0093 252px,#ff0092 253px)"></i>
<i style="margin-left:80px;width:246px;background:linear-gradient(90deg,#002bff,#0027ff 12px,#0023ff 24px,#001fff 36px,#001bff 48px,#0a16ff 60px,#1d12ff 72px,#310dff 84px,#4508ff 96px,#5b02ff 108px,#7100ff 120px,#8900ff 132px,#a100ff 144px,#bb00ff 156px,#d600ff 168px,#f200ff 180px,#ff00ef 192px,#ff00d7 204px,#ff00c2 216px,#ff00b0 228px,#ff00a0 240px,#ff0099 246px)"></i>
<i style="margin-left:81px;width:240px;background:linear-gradient(90deg,#0029ff,#0025ff 12px,#0021ff 24px,#001dff 36px,#0018ff 48px,#0c14ff 60px,#1f0fff 72px,#330aff 84px,#4805ff 96px,#5d00ff 108px,#7400ff 120px,#8b00ff 132px,#a400ff 144px,#bd00ff 156px,#d800ff 168px,#f400ff 180px,#ff00ee 192px,#ff00d5 204px,#ff00c1 216px,#ff00af 228px,#ff009f 240px)"></i>
<i style="margin-left:82px;width:233px;background:linear-gradient(90deg,#0027ff,#0023ff 12px,#001fff 24px,#001aff 36px,#0016ff 48px,#0f11ff 60px,#220dff 72px,#3608ff 84px,#4a03ff 96px,#6000ff 108px,#7600ff 120px,#8e00ff 132px,#a600ff 144px,#c000ff 156px,#da00ff 168px,#f600ff 180px,#ff00ec 192px,#ff00d4 204px,#ff00c0 216px,#ff00ae 228px,#ff00a7 233px)"></i>
<i style="margin-left:83px;width:226px;background:linear-gradient(90deg,#0024ff,#0020ff 12px,#001cff 24px,#0018ff 36px,#0014ff 48px,#110fff 60px,#240aff 72px,#3805ff 84px,#4d00ff 96px,#6200ff 108px,#7900ff 120px,#9000ff 132px,#a800ff 144px,#c200ff 156px,#dd00ff 168px,#f900ff 180px,#ff00ea 192px,#ff00d3 204px,#ff00bf 216px,#ff00b0 226px)"></i>
<i style="margin-left:85px;width:219px;background:linear-gradient(90deg,#0022ff,#001eff 12px,#0019ff 24px,#0015ff 36px,#0311ff 48px,#160cff 60px,#2907ff 72px,#3c02ff 84px,#5100ff 96px,#6700ff 108px,#7d00ff 120px,#9400ff 132px,#ad00ff 144px,#c600ff 156px,#e100ff 168px,#fd00ff 180px,#ff00e6 192px,#ff00d0 204px,#ff00bc 216px,#ff00b8 219px)"></i>
<i style="margin-left:86px;width:212px;background:linear-gradient(90deg,#001fff,#001bff 12px,#0017ff 24px,#0013ff 36px,#060eff 48px,#180aff 60px,#2b05ff 72px,#3f00ff 84px,#5400ff 96px,#6900ff 108px,#7f00ff 120px,#9700ff 132px,#af00ff 144px,#c900ff 156px,#e300ff 168px,#ff00ff 180px,#ff00e5 192px,#ff00ce 204px,#ff00c1 212px)"></i>
<i style="margin-left:87px;width:205px;background:linear-gradient(90deg,#001dff,#0019ff 12px,#0015ff 24px,#0010ff 36px,#080cff 48px,#1b07ff 60px,#2e02ff 72px,#4100ff 84px,#5600ff 96px,#6b00ff 108px,#8200ff 120px,#9900ff 132px,#b100ff 144px,#cb00ff 156px,#e500ff 168px,#ff00fd 180px,#ff00e3 192px,#ff00cd 204px,#ff00cb 205px)"></i>
<i style="margin-left:88px;width:199px;background:linear-gradient(90deg,#001bff,#0017ff 12px,#0013ff 24px,#000eff 36px,#0b0aff 48px,#1d05ff 60px,#3000ff 72px,#4400ff 84px,#5800ff 96px,#6e00ff 108px,#8400ff 120px,#9b00ff 132px,#b400ff 144px,#cd00ff 156px,#e800ff 168px,#ff00fb 180px,#ff00e1 192px,#ff00d4 199px)"></i>
<i style="margin-left:89px;width:192px;background:linear-gradient(90deg,#0019ff,#0014ff 12px,#0010ff 24px,#000cff 36px,#0d07ff 48px,#2003ff 60px,#3300ff 72px,#4600ff 84px,#5b00ff 96px,#7000ff 108px,#8600ff 120px,#9e00ff 132px,#b600ff 144px,#cf00ff 156px,#ea00ff 168px,#ff00f9 180px,#ff00e0 192px)"></i>
<i style="margin-left:90px;width:185px;background:linear-gradient(90deg,#0016ff,#0012ff 12px,#000eff 24px,#000aff 36px,#1005ff 48px,#2200ff 60px,#3500ff 72px,#4900ff 84px,#5d00ff 96px,#7300ff 108px,#8900ff 120px,#a000ff 132px,#b800ff 144px,#d100ff 156px,#ec00ff 168px,#ff00f7 180px,#ff00ec 185px)"></i>
<i style="margin-left:92px;width:178px;background:linear-gradient(90deg,#0014ff,#0010ff 12px,#000bff 24px,#0207ff 36px,#1402ff 48px,#2600ff 60px,#3900ff 72px,#4d00ff 84px,#6100ff 96px,#7700ff 108px,#8d00ff 120px,#a400ff 132px,#bc00ff 144px,#d600ff 156px,#f000ff 168px,#ff00f7 178px)"></i>
<i style="margin-left:93px;width:171px;background:linear-gradient(90deg,#0012ff,#000dff 12px,#0009ff 24px,#0505ff 36px,#1600ff 48px,#2900ff 60px,#3c00ff 72px,#4f00ff 84px,#6400ff 96px,#7900ff 108px,#8f00ff 120px,#a600ff 132px,#bf00ff 144px,#d800ff 156px,#f200ff 168px,#f900ff 171px)"></i>
<i style="margin-left:94px;width:164px;background:linear-gradient(90deg,#000fff,#000bff 12px,#0007ff 24px,#0702ff 36px,#1900ff 48px,#2b00ff 60px,#3e00ff 72px,#5200ff 84px,#6600ff 96px,#7b00ff 108px,#9200ff 120px,#a900ff 132px,#c100ff 144px,#da00ff 156px,#eb00ff 164px)"></i>
<i style="margin-left:96px;width:157px;background:linear-gradient(90deg,#000dff,#0009ff 12px,#0004ff 24px,#0b00ff 36px,#1d00ff 48px,#2f00ff 60px,#4200ff 72px,#5600ff 84px,#6a00ff 96px,#7f00ff 108px,#9600ff 120px,#ad00ff 132px,#c500ff 144px,#de00ff 156px,#e000ff 157px)"></i>
<i style="margin-left:97px;width:150px;background:linear-gradient(90deg,#000bff,#0007ff 12px,#0002ff 24px,#0d00ff 36px,#1f00ff 48px,#3100ff 60px,#4400ff 72px,#5800ff 84px,#6c00ff 96px,#8200ff 108px,#9800ff 120px,#af00ff 132px,#c700ff 144px,#d300ff 150px)"></i>
<i style="margin-left:99px;width:142px;background:linear-gradient(90deg,#0008ff,#0004ff 12px,#0000ff 24px,#1100ff 36px,#2300ff 48px,#3500ff 60px,#4800ff 72px,#5c00ff 84px,#7000ff 96px,#8600ff 108px,#9c00ff 120px,#b300ff 132px,#c700ff 142px)"></i>
<i style="margin-left:100px;width:136px;background:linear-gradient(90deg,#0006ff,#0002ff 12px,#0300ff 24px,#1400ff 36px,#2500ff 48px,#3800ff 60px,#4b00ff 72px,#5e00ff 84px,#7300ff 96px,#8800ff 108px,#9e00ff 120px,#b500ff 132px,#bd00ff 136px)"></i>
<i style="margin-left:102px;width:128px;background:linear-gradient(90deg,#0004ff,#0000ff 12px,#0600ff 24px,#1700ff 36px,#2900ff 48px,#3b00ff 60px,#4e00ff 72px,#6200ff 84px,#7700ff 96px,#8c00ff 108px,#a200ff 120px,#b200ff 128px)"></i>
<i style="margin-left:103px;width:121px;background:linear-gradient(90deg,#0002ff,#0000ff 12px,#0900ff 24px,#1a00ff 36px,#2b00ff 48px,#3e00ff 60px,#5100ff 72px,#6400ff 84px,#7900ff 96px,#8e00ff 108px,#a400ff 120px,#a600ff 121px)"></i>
<i style="margin-left:105px;width:114px;background:linear-gradient(90deg,#0000ff,#0000ff 12px,#0d00ff 24px,#1e00ff 36px,#2f00ff 48px,#4200ff 60px,#5500ff 72px,#6800ff 84px,#7d00ff 96px,#9200ff 108px,#9d00ff 114px)"></i>
<i style="margin-left:107px;width:106px;background:linear-gradient(90deg,#0000ff,#0000ff 12px,#1000ff 24px,#2100ff 36px,#3300ff 48px,#4500ff 60px,#5900ff 72px,#6c00ff 84px,#8100ff 96px,#9300ff 106px)"></i>
<i style="margin-left:109px;width:98px;background:linear-gradient(90deg,#0000ff,#0300ff 12px,#1400ff 24px,#2500ff 36px,#3700ff 48px,#4900ff 60px,#5c00ff 72px,#7000ff 84px,#8500ff 96px,#8800ff 98px)"></i>
<i style="margin-left:110px;width:92px;background:linear-gradient(90deg,#0000ff,#0600ff 12px,#1600ff 24px,#2700ff 36px,#3900ff 48px,#4c00ff 60px,#5f00ff 72px,#7200ff 84px,#8000ff 92px)"></i>
<i style="margin-left:113px;width:83px;background:linear-gradient(90deg,#0000ff,#0b00ff 12px,#1b00ff 24px,#2d00ff 36px,#3e00ff 48px,#5100ff 60px,#6400ff 72px,#7600ff 83px)"></i>
<i style="margin-left:115px;width:75px;background:linear-gradient(90deg,#0000ff,#0e00ff 12px,#1f00ff 24px,#3000ff 36px,#4200ff 48px,#5500ff 60px,#6800ff 72px,#6d00ff 75px)"></i>
<i style="margin-left:117px;width:68px;background:linear-gradient(90deg,#0200ff,#1200ff 12px,#2300ff 24px,#3400ff 36px,#4600ff 48px,#5800ff 60px,#6500ff 68px)"></i>
<i style="margin-left:120px;width:59px;background:linear-gradient(90deg,#0700ff,#1700ff 12px,#2800ff 24px,#3900ff 36px,#4b00ff 48px,#5c00ff 59px)"></i>
<i style="margin-left:123px;width:50px;background:linear-gradient(90deg,#0c00ff,#1c00ff 12px,#2d00ff 24px,#3e00ff 36px,#5000ff 48px,#5300ff 50px)"></i>
<i style="margin-left:126px;width:42px;background:linear-gradient(90deg,#1100ff,#2100ff 12px,#3200ff 24px,#4300ff 36px,#4c00ff 42px)"></i>
<i style="margin-left:129px;width:33px;background:linear-gradient(90deg,#1600ff,#2600ff 12px,#3700ff 24px,#4400ff 33px)"></i>
<i style="margin-left:132px;width:24px;background:linear-gradient(90deg,#1a00ff,#2b00ff 12px,#3c00ff 24px)"></i>
<i style="margin-left:135px;width:16px;background:linear-gradient(90deg,#1f00ff,#3000ff 12px,#3600ff 16px)"></i>
<i style="margin-left:139px;width:6px;background:linear-gradient(90deg,#2600ff,#2e00ff 6px)"></i>
</div>
<div id="inset" style="position:absolute;left:1602.5px;top:154.3px;width:232.8px;height:195.7px;overflow:hidden">
<i style="height:4px;background:linear-gradient(90deg,#b0ff00 0px,#b8ff00 18px,#bfff00 36px,#c6ff00 54px,#ceff00 72px,#d5ff00 90px,#ddff00 108px,#e5ff00 126px,#ecff00 144px,#f4ff00 162px,#fcff00 180px,#fff900 198px,#fff200 216px,#ffeb00 232px)"></i>
<i style="height:4px;background:linear-gradient(90deg,#b1ff00 0px,#b9ff00 18px,#c0ff00 36px,#c7ff00 54px,#cfff00 72px,#d6ff00 90px,#deff00 108px,#e6ff00 126px,#eeff00 144px,#f6ff00 162px,#feff00 180px,#fff800 198px,#fff100 216px,#ffea00 232px)"></i>
<i style="height:4px;background:linear-gradient(90deg,#b2ff00 0px,#baff00 18px,#c1ff00 36px,#c8ff00 54px,#d0ff00 72px,#d7ff00 90px,#dfff00 108px,#e7ff00 126px,#efff00 144px,#f7ff00 162px,#ffff00 180px,#fff700 198px,#ffef00 216px,#ffe900 232px)"></i>
<i style="height:4px;background:linear-gradient(90deg,#b3ff00 0px,#bbff00 18px,#c2ff00 36px,#c9ff00 54px,#d1ff00 72px,#d9ff00 90px,#e0ff00 108px,#e8ff00 126px,#f0ff00 144px,#f8ff00 162px,#fffe00 180px,#fff600 198px,#ffee00 216px,#ffe700 232px)"></i>
<i style="height:4px;background:linear-gradient(90deg,#b4ff00 0px,#bcff00 18px,#c3ff00 36px,#cbff00 54px,#d2ff00 72px,#daff00 90px,#e2ff00 108px,#e9ff00 126px,#f1ff00 144px,#f9ff00 162px,#fffc00 180px,#fff400 198px,#ffed00 216px,#ffe600 232px)"></i>
<i style="height:4px;background:linear-gradient(90deg,#b5ff00 0px,#bdff00 18px,#c4ff00 36px,#ccff00 54px,#d3ff00 72px,#dbff00 90px,#e3ff00 108px,#ebff00 126px,#f3ff00 144px,#fbff00 162px,#fffb00 180px,#fff300 198px,#ffec00 216px,#ffe500 232px)"></i>
<i style="height:4px;background:linear-gradient(90deg,#b6ff01 0px,#beff00 18px,#c5ff00 36px,#cdff00 54px,#d4ff00 72px,#dcff00 90px,#e4ff00 108px,#ecff00 126px,#f4ff00 144px,#fcff00 162px,#fffa00 180px,#fff200 198px,#ffeb00 216px,#ffe400 232px)"></i>
<i style="height:4px;background:linear-gradient(90deg,#b7ff01 0px,#bfff00 18px,#c6ff00 36px,#ceff00 54px,#d6ff00 72px,#ddff00 90px,#e5ff00 108px,#edff00 126px,#f5ff00 144px,#fdff00 162px,#fff800 180px,#fff100 198px,#ffe900 216px,#ffe300 232px)"></i>
<i style="height:4px;background:linear-gradient(90deg,#b8ff02 0px,#c0ff00 18px,#c7ff00 36px,#cfff00 54px,#d7ff00 72px,#deff00 90px,#e6ff00 108px,#eeff00 126px,#f6ff00 144px,#ffff00 162px,#fff700 180px,#ffef00 198px,#ffe800 216px,#ffe200 232px)"></i>
<i style="height:4px;background:linear-gradient(90deg,#baff02 0px,#c1ff01 18px,#c8ff00 36px,#d0ff00 54px,#d8ff00 72px,#e0ff00 90px,#e8ff00 108px,#f0ff00 126px,#f8ff00 144px,#fffe00 162px,#fff600 180px,#ffee00 198px,#ffe700 216px,#ffe000 232px)"></i>
<i style="height:4px;background:linear-gradient(90deg,#bbff03 0px,#c2ff01 18px,#caff00 36px,#d1ff00 54px,#d9ff00 72px,#e1ff00 90px,#e9ff00 108px,#f1ff00 126px,#f9ff00 144px,#fffd00 162px,#fff500 180px,#ffed00 198px,#ffe600 216px,#ffdf00 232px)"></i>
<i style="height:4px;background:linear-gradient(90deg,#bcff04 0px,#c3ff02 18px,#cbff00 36px,#d2ff00 54px,#daff00 72px,#e2ff00 90px,#eaff00 108px,#f2ff00 126px,#faff00 144px,#fffb00 162px,#fff300 180px,#ffec00 198px,#ffe500 216px,#ffde00 232px)"></i>
<i style="height:4px;background:linear-gradient(90deg,#bdff04 0px,#c4ff02 18px,#ccff01 36px,#d4ff00 54px,#dbff00 72px,#e3ff00 90px,#ebff00 108px,#f3ff00 126px,#fcff00 144px,#fffa00 162px,#fff200 180px,#ffeb00 198px,#ffe300 216px,#ffdd00 232px)"></i>
<i style="height:4px;background:linear-gradient(90deg,#beff05 0px,#c5ff03 18px,#cdff01 36px,#d5ff00 54px,#ddff00 72px,#e4ff00 90px,#edff00 108px,#f5ff00 126px,#fdff00 144px,#fff900 162px,#fff100 180px,#ffe900 198px,#ffe200 216px,#ffdc00 232px)"></i>
<i style="height:4px;background:linear-gradient(90deg,#bfff05 0px,#c6ff04 18px,#ceff02 36px,#d6ff00 54px,#deff00 72px,#e6ff00 90px,#eeff00 108px,#f6ff00 126px,#feff00 144px,#fff700 162px,#fff000 180px,#ffe800 198px,#ffe100 216px,#ffdb00 232px)"></i>
<i style="height:4px;background:linear-gradient(90deg,#c0ff06 0px,#c7ff04 18px,#cfff03 36px,#d7ff01 54px,#dfff00 72px,#e7ff00 90px,#efff00 108px,#f7ff00 126px,#fffe00 144px,#fff600 162px,#ffee00 180px,#ffe700 198px,#ffe000 216px,#ffda00 232px)"></i>
<i style="height:4px;background:linear-gradient(90deg,#c1ff06 0px,#c9ff05 18px,#d0ff03 36px,#d8ff01 54px,#e0ff00 72px,#e8ff00 90px,#f0ff00 108px,#f9ff00 126px,#fffd00 144px,#fff500 162px,#ffed00 180px,#ffe600 198px,#ffdf00 216px,#ffd800 232px)"></i>
<i style="height:4px;background:linear-gradient(90deg,#c2ff07 0px,#caff05 18px,#d1ff04 36px,#d9ff02 54px,#e1ff00 72px,#e9ff00 90px,#f2ff00 108px,#faff00 126px,#fffc00 144px,#fff400 162px,#ffec00 180px,#ffe500 198px,#ffde00 216px,#ffd700 232px)"></i>
<i style="height:4px;background:linear-gradient(90deg,#c3ff08 0px,#cbff06 18px,#d3ff04 36px,#dbff03 54px,#e3ff01 72px,#ebff00 90px,#f3ff00 108px,#fbff00 126px,#fffa00 144px,#fff200 162px,#ffeb00 180px,#ffe300 198px,#ffdc00 216px,#ffd600 232px)"></i>
<i style="height:4px;background:linear-gradient(90deg,#c4ff08 0px,#ccff07 18px,#d4ff05 36px,#dcff03 54px,#e4ff01 72px,#ecff00 90px,#f4ff00 108px,#fdff00 126px,#fff900 144px,#fff100 162px,#ffe900 180px,#ffe200 198px,#ffdb00 216px,#ffd500 232px)"></i>
<i style="height:4px;background:linear-gradient(90deg,#c5ff09 0px,#cdff07 18px,#d5ff05 36px,#ddff04 54px,#e5ff02 72px,#edff00 90px,#f6ff00 108px,#feff00 126px,#fff800 144px,#fff000 162px,#ffe800 180px,#ffe100 198px,#ffda00 216px,#ffd400 232px)"></i>
<i style="height:4px;background:linear-gradient(90deg,#c6ff09 0px,#ceff08 18px,#d6ff06 36px,#deff04 54px,#e6ff03 72px,#efff01 90px,#f7ff00 108px,#ffff00 126px,#fff600 144px,#ffee00 162px,#ffe700 180px,#ffe000 198px,#ffd900 216px,#ffd300 232px)"></i>
<i style="height:4px;background:linear-gradient(90deg,#c8ff0a 0px,#cfff08 18px,#d7ff07 36px,#dfff05 54px,#e8ff03 72px,#f0ff01 90px,#f8ff00 108px,#fffd00 126px,#fff500 144px,#ffed00 162px,#ffe600 180px,#ffdf00 198px,#ffd800 216px,#ffd200 232px)"></i>
<i style="height:4px;background:linear-gradient(90deg,#c9ff0b 0px,#d1ff09 18px,#d9ff07 36px,#e1ff06 54px,#e9ff04 72px,#f1ff02 90px,#faff00 108px,#fffc00 126px,#fff400 144px,#ffec00 162px,#ffe400 180px,#ffdd00 198px,#ffd700 216px,#ffd100 232px)"></i>
<i style="height:4px;background:linear-gradient(90deg,#caff0b 0px,#d2ff0a 18px,#daff08 36px,#e2ff06 54px,#eaff04 72px,#f2ff03 90px,#fbff01 108px,#fffb00 126px,#fff200 144px,#ffeb00 162px,#ffe300 180px,#ffdc00 198px,#ffd600 216px,#ffd000 232px)"></i>
<i style="height:4px;background:linear-gradient(90deg,#cbff0c 0px,#d3ff0a 18px,#dbff08 36px,#e3ff07 54px,#ebff05 72px,#f4ff03 90px,#fcff01 108px,#fff900 126px,#fff100 144px,#ffe900 162px,#ffe200 180px,#ffdb00 198px,#ffd400 216px,#ffcf00 232px)"></i>
<i style="height:4px;background:linear-gradient(90deg,#ccff0c 0px,#d4ff0b 18px,#dcff09 36px,#e4ff07 54px,#edff06 72px,#f5ff04 90px,#feff02 108px,#fff800 126px,#fff000 144px,#ffe800 162px,#ffe100 180px,#ffda00 198px,#ffd300 216px,#ffcd00 232px)"></i>
<i style="height:4px;background:linear-gradient(90deg,#cdff0d 0px,#d5ff0b 18px,#ddff0a 36px,#e6ff08 54px,#eeff06 72px,#f6ff04 90px,#ffff03 108px,#fff701 126px,#ffef00 144px,#ffe700 162px,#ffe000 180px,#ffd900 198px,#ffd200 216px,#ffcc00 232px)"></i>
<i style="height:4px;background:linear-gradient(90deg,#ceff0e 0px,#d6ff0c 18px,#dfff0a 36px,#e7ff09 54px,#efff07 72px,#f8ff05 90px,#fffe03 108px,#fff501 126px,#ffed00 144px,#ffe600 162px,#ffde00 180px,#ffd800 198px,#ffd100 216px,#ffcb00 232px)"></i>
<i style="height:4px;background:linear-gradient(90deg,#d0ff0e 0px,#d8ff0d 18px,#e0ff0b 36px,#e8ff09 54px,#f1ff07 72px,#f9ff06 90px,#fffc04 108px,#fff402 126px,#ffec00 144px,#ffe400 162px,#ffdd00 180px,#ffd600 198px,#ffd000 216px,#ffca00 232px)"></i>
<i style="height:4px;background:linear-gradient(90deg,#d1ff0f 0px,#d9ff0d 18px,#e1ff0c 36px,#e9ff0a 54px,#f2ff08 72px,#fbff06 90px,#fffb04 108px,#fff303 126px,#ffeb01 144px,#ffe300 162px,#ffdc00 180px,#ffd500 198px,#ffcf00 216px,#ffc900 232px)"></i>
<i style="height:4px;background:linear-gradient(90deg,#d2ff10 0px,#daff0e 18px,#e2ff0c 36px,#ebff0b 54px,#f3ff09 72px,#fcff07 90px,#fff905 108px,#fff103 126px,#ffe901 144px,#ffe200 162px,#ffdb00 180px,#ffd400 198px,#ffce00 216px,#ffc800 232px)"></i>
<i style="height:4px;background:linear-gradient(90deg,#d3ff10 0px,#dbff0f 18px,#e4ff0d 36px,#ecff0b 54px,#f5ff09 72px,#fdff08 90px,#fff806 108px,#fff004 126px,#ffe802 144px,#ffe100 162px,#ffda00 180px,#ffd300 198px,#ffcd00 216px,#ffc700 232px)"></i>
<i style="height:4px;background:linear-gradient(90deg,#d4ff11 0px,#ddff0f 18px,#e5ff0e 36px,#edff0c 54px,#f6ff0a 72px,#ffff08 90px,#fff706 108px,#ffef04 126px,#ffe703 144px,#ffe001 162px,#ffd900 180px,#ffd200 198px,#ffcc00 216px,#ffc600 232px)"></i>
<i style="height:4px;background:linear-gradient(90deg,#d6ff12 0px,#deff10 18px,#e6ff0e 36px,#efff0c 54px,#f7ff0b 72px,#fffe09 90px,#fff507 108px,#ffed05 126px,#ffe603 144px,#ffde01 162px,#ffd700 180px,#ffd100 198px,#ffca00 216px,#ffc500 232px)"></i>
<i style="height:4px;background:linear-gradient(90deg,#d7ff12 0px,#dfff11 18px,#e8ff0f 36px,#f0ff0d 54px,#f9ff0b 72px,#fffd09 90px,#fff407 108px,#ffec05 126px,#ffe404 144px,#ffdd02 162px,#ffd600 180px,#ffd000 198px,#ffc900 216px,#ffc400 232px)"></i>
<i style="height:4px;background:linear-gradient(90deg,#d8ff13 0px,#e0ff11 18px,#e9ff0f 36px,#f1ff0e 54px,#faff0c 72px,#fffb0a 90px,#fff308 108px,#ffeb06 126px,#ffe304 144px,#ffdc02 162px,#ffd501 180px,#ffcf00 198px,#ffc800 216px,#ffc300 232px)"></i>
<i style="height:4px;background:linear-gradient(90deg,#d9ff14 0px,#e2ff12 18px,#eaff10 36px,#f3ff0e 54px,#fbff0d 72px,#fffa0b 90px,#fff109 108px,#ffe907 126px,#ffe205 144px,#ffdb03 162px,#ffd401 180px,#ffcd00 198px,#ffc700 216px,#ffc200 232px)"></i>
<i style="height:4px;background:linear-gradient(90deg,#dbff14 0px,#e3ff13 18px,#ebff11 36px,#f4ff0f 54px,#fdff0d 72px,#fff80b 90px,#fff009 108px,#ffe807 126px,#ffe105 144px,#ffda04 162px,#ffd302 180px,#ffcc00 198px,#ffc600 216px,#ffc100 232px)"></i>
<i style="height:4px;background:linear-gradient(90deg,#dcff15 0px,#e4ff13 18px,#edff11 36px,#f5ff10 54px,#feff0e 72px,#fff70c 90px,#ffef0a 108px,#ffe708 126px,#ffdf06 144px,#ffd804 162px,#ffd202 180px,#ffcb01 198px,#ffc500 216px,#ffc000 232px)"></i>
<i style="height:4px;background:linear-gradient(90deg,#ddff16 0px,#e6ff14 18px,#eeff12 36px,#f7ff10 54px,#fffe0f 72px,#fff60c 90px,#ffed0a 108px,#ffe608 126px,#ffde06 144px,#ffd705 162px,#ffd103 180px,#ffca01 198px,#ffc400 216px,#ffbf00 232px)"></i>
<i style="height:4px;background:linear-gradient(90deg,#deff16 0px,#e7ff15 18px,#efff13 36px,#f8ff11 54px,#fffd0f 72px,#fff40d 90px,#ffec0b 108px,#ffe409 126px,#ffdd07 144px,#ffd605 162px,#ffcf03 180px,#ffc902 198px,#ffc300 216px,#ffbe00 232px)"></i>
<i style="height:4px;background:linear-gradient(90deg,#e0ff17 0px,#e8ff15 18px,#f1ff14 36px,#faff12 54px,#fffb10 72px,#fff30e 90px,#ffeb0b 108px,#ffe309 126px,#ffdc08 144px,#ffd506 162px,#ffce04 180px,#ffc802 198px,#ffc201 216px,#ffbc00 232px)"></i>
<i style="height:4px;background:linear-gradient(90deg,#e1ff18 0px,#e9ff16 18px,#f2ff14 36px,#fbff13 54px,#fffa10 72px,#fff20e 90px,#ffe90c 108px,#ffe20a 126px,#ffdb08 144px,#ffd406 162px,#ffcd04 180px,#ffc703 198px,#ffc101 216px,#ffbb00 232px)"></i>
<i style="height:4px;background:linear-gradient(90deg,#e2ff18 0px,#ebff17 18px,#f4ff15 36px,#fdff13 54px,#fff911 72px,#fff00f 90px,#ffe80d 108px,#ffe10b 126px,#ffd909 144px,#ffd307 162px,#ffcc05 180px,#ffc603 198px,#ffc002 216px,#ffba00 232px)"></i>
<i style="height:4px;background:linear-gradient(90deg,#e3ff19 0px,#ecff17 18px,#f5ff16 36px,#feff14 54px,#fff712 72px,#ffef0f 90px,#ffe70d 108px,#ffdf0b 126px,#ffd809 144px,#ffd107 162px,#ffcb06 180px,#ffc504 198px,#ffbf02 216px,#ffb901 232px)"></i>
<i style="height:4px;background:linear-gradient(90deg,#e5ff1a 0px,#eeff18 18px,#f6ff16 36px,#ffff15 54px,#fff612 72px,#ffee10 90px,#ffe60e 108px,#ffde0c 126px,#ffd70a 144px,#ffd008 162px,#ffca06 180px,#ffc404 198px,#ffbe03 216px,#ffb801 232px)"></i>
<i style="height:4px;background:linear-gradient(90deg,#e6ff1a 0px,#efff19 18px,#f8ff17 36px,#fffd15 54px,#fff413 72px,#ffec10 90px,#ffe40e 108px,#ffdd0c 126px,#ffd60a 144px,#ffcf08 162px,#ffc907 180px,#ffc205 198px,#ffbd03 216px,#ffb702 232px)"></i>
<i style="height:4px;background:linear-gradient(90deg,#e7ff1b 0px,#f0ff1a 18px,#f9ff18 36px,#fffc16 54px,#fff313 72px,#ffeb11 90px,#ffe30f 108px,#ffdc0d 126px,#ffd50b 144px,#ffce09 162px,#ffc707 180px,#ffc105 198px,#ffbc04 216px,#ffb602 232px)"></i>
</div>
<svg width="1920" height="1040" viewBox="0 0 1920 1040">
<defs><radialGradient id="gDim" gradientUnits="userSpaceOnUse" cx="1269.0" cy="637.5" r="120"><stop offset="0" stop-color="#000" stop-opacity="0.15"/><stop offset="0.45" stop-color="#000" stop-opacity="0.31"/><stop offset="1" stop-color="#000" stop-opacity="0.40"/></radialGradient></defs>
<path d="M1294.8 667.9 L1294.8 667.9 L1294.8 667.9 L1294.7 667.9 L1294.7 667.9 L1294.6 667.9 L1294.6 667.9 L1294.5 667.9 L1294.4 668.0 L1294.4 668.0 L1294.3 668.0 L1294.2 668.0 L1294.2 668.0 L1294.1 668.0 L1294.0 668.0 L1293.9 668.0 L1293.8 668.0 L1293.7 668.0 L1293.6 668.0 L1293.4 668.0 L1293.3 668.0 L1293.1 667.9 L1292.9 667.9 L1292.8 667.9 L1292.6 667.8 L1292.4 667.8 L1292.3 667.7 L1292.1 667.6 L1292.0 667.5 L1291.9 667.5 L1291.7 667.4 L1291.5 667.3 L1291.3 667.2 L1291.2 667.1 L1291.0 667.0 L1290.8 666.8 L1290.5 666.7 L1290.3 666.5 L1290.0 666.4 L1289.8 666.2 L1289.5 666.0 L1289.2 665.8 L1288.9 665.6 L1288.6 665.4 L1288.3 665.2 L1287.9 665.0 L1287.6 664.7 L1287.2 664.5 L1286.8 664.2 L1286.4 663.9 L1286.0 663.6 L1285.6 663.3 L1285.1 663.0 L1284.6 662.7 L1284.1 662.4 L1283.6 662.0 L1283.0 661.6 L1282.4 661.2 L1281.8 660.8 L1281.1 660.4 L1280.4 659.9 L1279.7 659.5 L1279.0 659.0 L1278.3 658.5 L1277.5 658.0 L1276.7 657.4 L1275.8 656.8 L1274.9 656.2 L1274.0 655.5 L1273.1 654.8 L1272.1 654.1 L1271.1 653.3 L1270.1 652.4 L1269.0 651.6 L1267.9 650.6 L1266.8 649.7 L1265.6 648.6 L1264.4 647.4 L1263.1 646.1 L1261.7 644.6 L1260.2 643.0 L1258.7 641.2 L1257.1 639.3 L1255.4 637.2 L1253.7 634.9 L1251.9 632.4 L1250.0 629.8 L1248.1 626.9 L1246.1 623.8 L1244.0 620.5 L1241.8 616.8 L1239.5 612.8 L1237.1 608.5 L1234.7 604.0 L1232.1 599.1 L1229.5 593.8 L1226.7 588.1 L1223.9 582.0 L1220.8 575.6 L1217.7 568.7 L1214.5 561.5 L1211.3 553.8 L1208.2 545.6 L1205.0 536.9 L1201.8 527.7 L1198.6 518.1 L1195.3 508.0 L1192.2 497.5 L1189.0 486.7 L1185.9 475.3 L1182.7 463.4 L1179.6 451.1 L1176.6 438.6 L1173.7 425.9 L1171.0 413.1 L1168.5 400.3 L1166.1 387.1 L1163.8 373.8 L1161.8 360.5 L1160.0 347.4 L1158.4 334.6 L1157.2 322.0 L1156.2 309.4 L1155.4 297.1 L1154.9 284.9 L1154.7 273.2 L1154.9 261.9 L1155.5 250.9 L1156.3 240.3 L1157.5 229.9 L1159.0 220.1 L1160.9 210.8 L1163.1 202.3 L1165.7 194.3 L1168.7 186.9 L1172.1 180.1 L1175.7 173.9 L1179.6 168.4 L1183.7 163.7 L1188.0 159.7 L1192.6 156.6 L1197.5 154.1 L1202.5 152.3 L1207.6 151.0 L1212.8 150.0 L1218.0 149.7 L1223.4 150.0 L1228.9 150.8 L1234.5 151.9 L1240.0 153.3 L1245.6 154.8 L1251.1 156.4 L1256.7 158.3 L1262.3 160.5 L1267.9 162.8 L1273.4 165.1 L1278.9 167.5 L1284.2 169.8 L1289.5 172.3 L1294.8 174.8 L1300.0 177.4 L1305.1 180.0 L1310.3 182.7 L1315.4 185.4 L1320.4 188.1 L1325.5 191.0 L1330.5 193.8 L1335.4 196.8 L1340.4 199.7 L1345.4 202.7 L1350.4 205.8 L1355.4 208.9 L1360.3 212.1 L1365.3 215.2 L1370.2 218.5 L1375.1 221.7 L1380.0 225.0 L1384.9 228.3 L1389.8 231.7 L1394.7 235.1 L1399.6 238.5 L1404.5 241.9 L1409.4 245.3 L1414.3 248.8 L1419.2 252.3 L1424.1 255.8 L1429.0 259.3 L1433.9 262.9 L1438.8 266.4 L1443.7 270.0 L1448.6 273.6 L1453.5 277.2 L1458.4 280.8 L1463.3 284.4 L1468.2 288.1 L1473.0 291.7 L1477.9 295.3 L1482.8 299.0 L1487.7 302.6 L1492.5 306.3 L1497.4 309.9 L1502.2 313.5 L1507.1 317.2 L1511.9 320.8 L1516.8 324.4 L1521.5 328.0 L1526.3 331.6 L1531.1 335.3 L1535.8 338.8 L1540.6 342.4 L1545.3 346.0 L1550.0 349.5 L1554.6 353.1 L1559.2 356.6 L1563.9 360.1 L1568.4 363.5 L1573.0 367.0 L1577.5 370.4 L1582.0 373.8 L1586.4 377.2 L1590.8 380.5 L1595.2 383.8 L1599.5 387.1 L1603.8 390.3 L1608.1 393.5 L1612.3 396.7 L1616.4 399.8 L1620.5 402.9 L1624.5 406.0 L1628.5 409.0 L1632.4 411.9 L1636.2 414.9 L1640.0 417.7 L1643.7 420.5 L1647.3 423.3 L1650.8 425.9 L1654.2 428.5 L1657.5 431.0 L1660.8 433.5 L1664.0 435.9 L1667.1 438.3 L1670.2 440.6 L1673.2 442.9 L1676.1 445.1 L1679.0 447.3 L1681.8 449.4 L1684.5 451.4 L1687.1 453.4 L1689.7 455.3 L1692.1 457.1 L1694.5 458.9 L1696.8 460.6 L1699.0 462.3 L1701.1 463.9 L1703.2 465.5 L1705.2 467.0 L1707.1 468.5 L1709.0 469.9 L1710.7 471.3 L1712.5 472.6 L1714.1 473.8 L1715.7 475.0 L1717.2 476.2 L1718.7 477.3 L1720.1 478.4 L1721.5 479.4 L1722.8 480.4 L1724.1 481.3 L1725.3 482.3 L1726.5 483.1 L1727.6 484.0 L1728.7 484.8 L1729.7 485.6 L1730.7 486.4 L1731.7 487.1 L1732.7 487.9 L1733.6 488.6 L1734.5 489.2 L1735.4 489.9 L1736.2 490.6 L1737.0 491.2 L1737.8 491.8 L1738.6 492.4 L1739.4 492.9 L1740.1 493.5 L1740.8 494.0 L1741.4 494.5 L1742.1 495.0 L1742.7 495.5 L1743.3 495.9 L1743.9 496.4 L1744.5 496.8 L1745.0 497.2 L1745.5 497.6 L1746.0 497.9 L1746.5 498.3 L1746.9 498.6 L1747.3 498.9 L1747.7 499.2 L1748.1 499.5 L1748.5 499.8 L1748.8 500.1 L1749.2 500.3 L1749.5 500.6 L1749.8 500.8 L1750.1 501.0 L1750.4 501.2 L1750.6 501.4 L1750.9 501.6 L1751.1 501.8 L1751.3 501.9 L1751.5 502.1 L1751.8 502.3 L1752.0 502.5 L1752.3 502.7 L1752.6 502.9 L1752.9 503.2 L1753.2 503.4 L1753.4 503.6 L1753.6 503.7 L1753.8 503.9 L1754.0 504.0 L1754.2 504.2 L1754.4 504.3 L1754.6 504.4 L1754.7 504.6 L1754.9 504.7 L1755.0 504.8 L1755.2 504.9 L1755.3 505.0 L1755.4 505.1 L1755.5 505.1 L1755.5 505.2 L1755.6 505.2 L1755.6 505.2 L1755.6 505.2 L1755.6 505.2Z M1677.8 464.8 L1398.3 296.1 L1275.0 633.5Z" fill="url(#gDim)" fill-rule="evenodd"/>
<path d="M1294.8 667.9 L1294.8 667.9 L1294.8 667.9 L1294.7 667.9 L1294.7 667.9 L1294.6 667.9 L1294.6 667.9 L1294.5 667.9 L1294.4 668.0 L1294.4 668.0 L1294.3 668.0 L1294.2 668.0 L1294.2 668.0 L1294.1 668.0 L1294.0 668.0 L1293.9 668.0 L1293.8 668.0 L1293.7 668.0 L1293.6 668.0 L1293.4 668.0 L1293.3 668.0 L1293.1 667.9 L1292.9 667.9 L1292.8 667.9 L1292.6 667.8 L1292.4 667.8 L1292.3 667.7 L1292.1 667.6 L1292.0 667.5 L1291.9 667.5 L1291.7 667.4 L1291.5 667.3 L1291.3 667.2 L1291.2 667.1 L1291.0 667.0 L1290.8 666.8 L1290.5 666.7 L1290.3 666.5 L1290.0 666.4 L1289.8 666.2 L1289.5 666.0 L1289.2 665.8 L1288.9 665.6 L1288.6 665.4 L1288.3 665.2 L1287.9 665.0 L1287.6 664.7 L1287.2 664.5 L1286.8 664.2 L1286.4 663.9 L1286.0 663.6 L1285.6 663.3 L1285.1 663.0 L1284.6 662.7 L1284.1 662.4 L1283.6 662.0 L1283.0 661.6 L1282.4 661.2 L1281.8 660.8 L1281.1 660.4 L1280.4 659.9 L1279.7 659.5 L1279.0 659.0 L1278.3 658.5 L1277.5 658.0 L1276.7 657.4 L1275.8 656.8 L1274.9 656.2 L1274.0 655.5 L1273.1 654.8 L1272.1 654.1 L1271.1 653.3 L1270.1 652.4 L1269.0 651.6 L1267.9 650.6 L1266.8 649.7 L1265.6 648.6 L1264.4 647.4 L1263.1 646.1 L1261.7 644.6 L1260.2 643.0 L1258.7 641.2 L1257.1 639.3 L1255.4 637.2 L1253.7 634.9 L1251.9 632.4 L1250.0 629.8 L1248.1 626.9 L1246.1 623.8 L1244.0 620.5 L1241.8 616.8 L1239.5 612.8 L1237.1 608.5 L1234.7 604.0 L1232.1 599.1 L1229.5 593.8 L1226.7 588.1 L1223.9 582.0 L1220.8 575.6 L1217.7 568.7 L1214.5 561.5 L1211.3 553.8 L1208.2 545.6 L1205.0 536.9 L1201.8 527.7 L1198.6 518.1 L1195.3 508.0 L1192.2 497.5 L1189.0 486.7 L1185.9 475.3 L1182.7 463.4 L1179.6 451.1 L1176.6 438.6 L1173.7 425.9 L1171.0 413.1 L1168.5 400.3 L1166.1 387.1 L1163.8 373.8 L1161.8 360.5 L1160.0 347.4 L1158.4 334.6 L1157.2 322.0 L1156.2 309.4 L1155.4 297.1 L1154.9 284.9 L1154.7 273.2 L1154.9 261.9 L1155.5 250.9 L1156.3 240.3 L1157.5 229.9 L1159.0 220.1 L1160.9 210.8 L1163.1 202.3 L1165.7 194.3 L1168.7 186.9 L1172.1 180.1 L1175.7 173.9 L1179.6 168.4 L1183.7 163.7 L1188.0 159.7 L1192.6 156.6 L1197.5 154.1 L1202.5 152.3 L1207.6 151.0 L1212.8 150.0 L1218.0 149.7 L1223.4 150.0 L1228.9 150.8 L1234.5 151.9 L1240.0 153.3 L1245.6 154.8 L1251.1 156.4 L1256.7 158.3 L1262.3 160.5 L1267.9 162.8 L1273.4 165.1 L1278.9 167.5 L1284.2 169.8 L1289.5 172.3 L1294.8 174.8 L1300.0 177.4 L1305.1 180.0 L1310.3 182.7 L1315.4 185.4 L1320.4 188.1 L1325.5 191.0 L1330.5 193.8 L1335.4 196.8 L1340.4 199.7 L1345.4 202.7 L1350.4 205.8 L1355.4 208.9 L1360.3 212.1 L1365.3 215.2 L1370.2 218.5 L1375.1 221.7 L1380.0 225.0 L1384.9 228.3 L1389.8 231.7 L1394.7 235.1 L1399.6 238.5 L1404.5 241.9 L1409.4 245.3 L1414.3 248.8 L1419.2 252.3 L1424.1 255.8 L1429.0 259.3 L1433.9 262.9 L1438.8 266.4 L1443.7 270.0 L1448.6 273.6 L1453.5 277.2 L1458.4 280.8 L1463.3 284.4 L1468.2 288.1 L1473.0 291.7 L1477.9 295.3 L1482.8 299.0 L1487.7 302.6 L1492.5 306.3 L1497.4 309.9 L1502.2 313.5 L1507.1 317.2 L1511.9 320.8 L1516.8 324.4 L1521.5 328.0 L1526.3 331.6 L1531.1 335.3 L1535.8 338.8 L1540.6 342.4 L1545.3 346.0 L1550.0 349.5 L1554.6 353.1 L1559.2 356.6 L1563.9 360.1 L1568.4 363.5 L1573.0 367.0 L1577.5 370.4 L1582.0 373.8 L1586.4 377.2 L1590.8 380.5 L1595.2 383.8 L1599.5 387.1 L1603.8 390.3 L1608.1 393.5 L1612.3 396.7 L1616.4 399.8 L1620.5 402.9 L1624.5 406.0 L1628.5 409.0 L1632.4 411.9 L1636.2 414.9 L1640.0 417.7 L1643.7 420.5 L1647.3 423.3 L1650.8 425.9 L1654.2 428.5 L1657.5 431.0 L1660.8 433.5 L1664.0 435.9 L1667.1 438.3 L1670.2 440.6 L1673.2 442.9 L1676.1 445.1 L1679.0 447.3 L1681.8 449.4 L1684.5 451.4 L1687.1 453.4 L1689.7 455.3 L1692.1 457.1 L1694.5 458.9 L1696.8 460.6 L1699.0 462.3 L1701.1 463.9 L1703.2 465.5 L1705.2 467.0 L1707.1 468.5 L1709.0 469.9 L1710.7 471.3 L1712.5 472.6 L1714.1 473.8 L1715.7 475.0 L1717.2 476.2 L1718.7 477.3 L1720.1 478.4 L1721.5 479.4 L1722.8 480.4 L1724.1 481.3 L1725.3 482.3 L1726.5 483.1 L1727.6 484.0 L1728.7 484.8 L1729.7 485.6 L1730.7 486.4 L1731.7 487.1 L1732.7 487.9 L1733.6 488.6 L1734.5 489.2 L1735.4 489.9 L1736.2 490.6 L1737.0 491.2 L1737.8 491.8 L1738.6 492.4 L1739.4 492.9 L1740.1 493.5 L1740.8 494.0 L1741.4 494.5 L1742.1 495.0 L1742.7 495.5 L1743.3 495.9 L1743.9 496.4 L1744.5 496.8 L1745.0 497.2 L1745.5 497.6 L1746.0 497.9 L1746.5 498.3 L1746.9 498.6 L1747.3 498.9 L1747.7 499.2 L1748.1 499.5 L1748.5 499.8 L1748.8 500.1 L1749.2 500.3 L1749.5 500.6 L1749.8 500.8 L1750.1 501.0 L1750.4 501.2 L1750.6 501.4 L1750.9 501.6 L1751.1 501.8 L1751.3 501.9 L1751.5 502.1 L1751.8 502.3 L1752.0 502.5 L1752.3 502.7 L1752.6 502.9 L1752.9 503.2 L1753.2 503.4 L1753.4 503.6 L1753.6 503.7 L1753.8 503.9 L1754.0 504.0 L1754.2 504.2 L1754.4 504.3 L1754.6 504.4 L1754.7 504.6 L1754.9 504.7 L1755.0 504.8 L1755.2 504.9 L1755.3 505.0 L1755.4 505.1 L1755.5 505.1 L1755.5 505.2 L1755.6 505.2 L1755.6 505.2 L1755.6 505.2 L1755.6 505.2Z" fill="none" stroke="#262626" stroke-width="1.6" stroke-opacity="0.6"/>
<rect x="1152.0" y="147.1" width="690.7" height="523.5" fill="none" stroke="#b4b4b4" stroke-width="1.4"/>
<text x="1483.0" y="142.0" font-size="15.6" fill="#dcdcdc" text-anchor="middle" textLength="80.0" lengthAdjust="spacingAndGlyphs">CIE 1931 xy</text>
<line x1="1151.7" y1="670.6" x2="1151.7" y2="676.6" stroke="#b4b4b4" stroke-width="1.4"/>
<text x="1151.7" y="693.8" font-size="15.6" fill="#dcdcdc" text-anchor="middle">0</text>
<line x1="1146.0" y1="670.7" x2="1152.0" y2="670.7" stroke="#b4b4b4" stroke-width="1.4"/>
<text x="1145.0" y="678.0" font-size="16.0" fill="#dcdcdc" text-anchor="end">0</text>
<line x1="1233.9" y1="670.6" x2="1233.9" y2="676.6" stroke="#b4b4b4" stroke-width="1.4"/>
<text x="1233.9" y="693.8" font-size="15.6" fill="#dcdcdc" text-anchor="middle">0,1</text>
<line x1="1146.0" y1="608.4" x2="1152.0" y2="608.4" stroke="#b4b4b4" stroke-width="1.4"/>
<text x="1145.0" y="614.7" font-size="16.0" fill="#dcdcdc" text-anchor="end">0,1</text>
<line x1="1316.0" y1="670.6" x2="1316.0" y2="676.6" stroke="#b4b4b4" stroke-width="1.4"/>
<text x="1316.0" y="693.8" font-size="15.6" fill="#dcdcdc" text-anchor="middle">0,2</text>
<line x1="1146.0" y1="546.2" x2="1152.0" y2="546.2" stroke="#b4b4b4" stroke-width="1.4"/>
<text x="1145.0" y="552.5" font-size="16.0" fill="#dcdcdc" text-anchor="end">0,2</text>
<line x1="1398.2" y1="670.6" x2="1398.2" y2="676.6" stroke="#b4b4b4" stroke-width="1.4"/>
<text x="1398.2" y="693.8" font-size="15.6" fill="#dcdcdc" text-anchor="middle">0,3</text>
<line x1="1146.0" y1="483.9" x2="1152.0" y2="483.9" stroke="#b4b4b4" stroke-width="1.4"/>
<text x="1145.0" y="490.2" font-size="16.0" fill="#dcdcdc" text-anchor="end">0,3</text>
<line x1="1480.3" y1="670.6" x2="1480.3" y2="676.6" stroke="#b4b4b4" stroke-width="1.4"/>
<text x="1480.3" y="693.8" font-size="15.6" fill="#dcdcdc" text-anchor="middle">0,4</text>
<line x1="1146.0" y1="421.6" x2="1152.0" y2="421.6" stroke="#b4b4b4" stroke-width="1.4"/>
<text x="1145.0" y="427.9" font-size="16.0" fill="#dcdcdc" text-anchor="end">0,4</text>
<line x1="1562.5" y1="670.6" x2="1562.5" y2="676.6" stroke="#b4b4b4" stroke-width="1.4"/>
<text x="1562.5" y="693.8" font-size="15.6" fill="#dcdcdc" text-anchor="middle">0,5</text>
<line x1="1146.0" y1="359.4" x2="1152.0" y2="359.4" stroke="#b4b4b4" stroke-width="1.4"/>
<text x="1145.0" y="365.7" font-size="16.0" fill="#dcdcdc" text-anchor="end">0,5</text>
<line x1="1644.7" y1="670.6" x2="1644.7" y2="676.6" stroke="#b4b4b4" stroke-width="1.4"/>
<text x="1644.7" y="693.8" font-size="15.6" fill="#dcdcdc" text-anchor="middle">0,6</text>
<line x1="1146.0" y1="297.1" x2="1152.0" y2="297.1" stroke="#b4b4b4" stroke-width="1.4"/>
<text x="1145.0" y="303.4" font-size="16.0" fill="#dcdcdc" text-anchor="end">0,6</text>
<line x1="1726.8" y1="670.6" x2="1726.8" y2="676.6" stroke="#b4b4b4" stroke-width="1.4"/>
<text x="1726.8" y="693.8" font-size="15.6" fill="#dcdcdc" text-anchor="middle">0,7</text>
<line x1="1146.0" y1="234.8" x2="1152.0" y2="234.8" stroke="#b4b4b4" stroke-width="1.4"/>
<text x="1145.0" y="241.1" font-size="16.0" fill="#dcdcdc" text-anchor="end">0,7</text>
<line x1="1809.0" y1="670.6" x2="1809.0" y2="676.6" stroke="#b4b4b4" stroke-width="1.4"/>
<text x="1809.0" y="693.8" font-size="15.6" fill="#dcdcdc" text-anchor="middle">0,8</text>
<line x1="1146.0" y1="172.5" x2="1152.0" y2="172.5" stroke="#b4b4b4" stroke-width="1.4"/>
<text x="1145.0" y="178.8" font-size="16.0" fill="#dcdcdc" text-anchor="end">0,8</text>
<rect x="1454.3" y="456.9" width="14.0" height="14.0" fill="#c5acac" stroke="#fff" stroke-width="1.7" fill-opacity="0.32" stroke-opacity="0.85"/>
<rect x="1509.2" y="456.9" width="14.0" height="14.0" fill="#c59191" stroke="#fff" stroke-width="1.7" fill-opacity="0.32" stroke-opacity="0.85"/>
<rect x="1558.3" y="456.9" width="14.0" height="14.0" fill="#c57272" stroke="#fff" stroke-width="1.7" fill-opacity="0.32" stroke-opacity="0.85"/>
<rect x="1610.2" y="456.9" width="14.0" height="14.0" fill="#a33e3e" stroke="#fff" stroke-width="1.7" fill-opacity="0.32" stroke-opacity="0.85"/>
<rect x="1669.6" y="456.9" width="14.0" height="14.0" fill="#800000" stroke="#fff" stroke-width="1.7" fill-opacity="0.32" stroke-opacity="0.85"/>
<rect x="1390.1" y="288.8" width="14.0" height="14.0" fill="#008000" stroke="#fff" stroke-width="1.7" fill-opacity="0.32" stroke-opacity="0.85"/>
<rect x="1392.9" y="324.8" width="14.0" height="14.0" fill="#3ea33e" stroke="#fff" stroke-width="1.7" fill-opacity="0.32" stroke-opacity="0.85"/>
<rect x="1394.9" y="358.5" width="14.0" height="14.0" fill="#72c572" stroke="#fff" stroke-width="1.7" fill-opacity="0.32" stroke-opacity="0.85"/>
<rect x="1397.4" y="390.2" width="14.0" height="14.0" fill="#91c591" stroke="#fff" stroke-width="1.7" fill-opacity="0.32" stroke-opacity="0.85"/>
<rect x="1398.8" y="423.3" width="14.0" height="14.0" fill="#acc5ac" stroke="#fff" stroke-width="1.7" fill-opacity="0.32" stroke-opacity="0.85"/>
<rect x="1266.8" y="625.4" width="14.0" height="14.0" fill="#000080" stroke="#fff" stroke-width="1.7" fill-opacity="0.32" stroke-opacity="0.85"/>
<rect x="1295.9" y="588.6" width="14.0" height="14.0" fill="#3e3ea3" stroke="#fff" stroke-width="1.7" fill-opacity="0.32" stroke-opacity="0.85"/>
<rect x="1322.1" y="556.5" width="14.0" height="14.0" fill="#7272c5" stroke="#fff" stroke-width="1.7" fill-opacity="0.32" stroke-opacity="0.85"/>
<rect x="1348.0" y="524.8" width="14.0" height="14.0" fill="#9191c5" stroke="#fff" stroke-width="1.7" fill-opacity="0.32" stroke-opacity="0.85"/>
<rect x="1374.2" y="491.7" width="14.0" height="14.0" fill="#acacc5" stroke="#fff" stroke-width="1.7" fill-opacity="0.32" stroke-opacity="0.85"/>
<rect x="1328.7" y="458.6" width="14.0" height="14.0" fill="#008080" stroke="#fff" stroke-width="1.7" fill-opacity="0.32" stroke-opacity="0.85"/>
<rect x="1343.1" y="458.6" width="14.0" height="14.0" fill="#3ea3a3" stroke="#fff" stroke-width="1.7" fill-opacity="0.32" stroke-opacity="0.85"/>
<rect x="1357.5" y="458.6" width="14.0" height="14.0" fill="#72c5c5" stroke="#fff" stroke-width="1.7" fill-opacity="0.32" stroke-opacity="0.85"/>
<rect x="1372.0" y="458.6" width="14.0" height="14.0" fill="#91c5c5" stroke="#fff" stroke-width="1.7" fill-opacity="0.32" stroke-opacity="0.85"/>
<rect x="1386.5" y="458.6" width="14.0" height="14.0" fill="#acc5c5" stroke="#fff" stroke-width="1.7" fill-opacity="0.32" stroke-opacity="0.85"/>
<rect x="1402.9" y="479.4" width="14.0" height="14.0" fill="#c5acc5" stroke="#fff" stroke-width="1.7" fill-opacity="0.32" stroke-opacity="0.85"/>
<rect x="1404.5" y="502.8" width="14.0" height="14.0" fill="#c591c5" stroke="#fff" stroke-width="1.7" fill-opacity="0.32" stroke-opacity="0.85"/>
<rect x="1404.5" y="521.8" width="14.0" height="14.0" fill="#c572c5" stroke="#fff" stroke-width="1.7" fill-opacity="0.32" stroke-opacity="0.85"/>
<rect x="1406.1" y="543.6" width="14.0" height="14.0" fill="#a33ea3" stroke="#fff" stroke-width="1.7" fill-opacity="0.32" stroke-opacity="0.85"/>
<rect x="1407.7" y="567.4" width="14.0" height="14.0" fill="#800080" stroke="#fff" stroke-width="1.7" fill-opacity="0.32" stroke-opacity="0.85"/>
<rect x="1488.8" y="348.4" width="14.0" height="14.0" fill="#808000" stroke="#fff" stroke-width="1.7" fill-opacity="0.32" stroke-opacity="0.85"/>
<rect x="1470.2" y="371.0" width="14.0" height="14.0" fill="#a3a33e" stroke="#fff" stroke-width="1.7" fill-opacity="0.32" stroke-opacity="0.85"/>
<rect x="1454.3" y="391.4" width="14.0" height="14.0" fill="#c5c572" stroke="#fff" stroke-width="1.7" fill-opacity="0.32" stroke-opacity="0.85"/>
<rect x="1436.5" y="412.2" width="14.0" height="14.0" fill="#c5c591" stroke="#fff" stroke-width="1.7" fill-opacity="0.32" stroke-opacity="0.85"/>
<rect x="1419.6" y="434.8" width="14.0" height="14.0" fill="#c5c5ac" stroke="#fff" stroke-width="1.7" fill-opacity="0.32" stroke-opacity="0.85"/>
<rect x="1401.4" y="457.8" width="14.0" height="14.0" fill="none" stroke="#000" stroke-width="2.0"/>
<circle cx="1462.3" cy="464.2" r="4.5" fill="#c5acac" stroke="#000" stroke-width="1.6" fill-opacity="0.8" stroke-opacity="0.85"/>
<circle cx="1521.8" cy="464.2" r="4.5" fill="#c59191" stroke="#000" stroke-width="1.6" fill-opacity="0.8" stroke-opacity="0.85"/>
<circle cx="1572.5" cy="463.1" r="4.5" fill="#c57272" stroke="#000" stroke-width="1.6" fill-opacity="0.8" stroke-opacity="0.85"/>
<circle cx="1626.0" cy="464.2" r="4.5" fill="#c54b4b" stroke="#000" stroke-width="1.6" fill-opacity="0.8" stroke-opacity="0.85"/>
<circle cx="1673.8" cy="464.2" r="4.5" fill="#c50000" stroke="#000" stroke-width="1.6" fill-opacity="0.8" stroke-opacity="0.85"/>
<circle cx="1388.4" cy="296.1" r="4.5" fill="#00c500" stroke="#000" stroke-width="1.6" fill-opacity="0.8" stroke-opacity="0.85"/>
<circle cx="1393.1" cy="329.2" r="4.5" fill="#4bc54b" stroke="#000" stroke-width="1.6" fill-opacity="0.8" stroke-opacity="0.85"/>
<circle cx="1397.3" cy="364.2" r="4.5" fill="#72c572" stroke="#000" stroke-width="1.6" fill-opacity="0.8" stroke-opacity="0.85"/>
<circle cx="1401.3" cy="398.7" r="4.5" fill="#91c591" stroke="#000" stroke-width="1.6" fill-opacity="0.8" stroke-opacity="0.85"/>
<circle cx="1404.4" cy="430.8" r="4.5" fill="#acc5ac" stroke="#000" stroke-width="1.6" fill-opacity="0.8" stroke-opacity="0.85"/>
<circle cx="1271.8" cy="631.3" r="4.5" fill="#0000c5" stroke="#000" stroke-width="1.6" fill-opacity="0.8" stroke-opacity="0.85"/>
<circle cx="1298.4" cy="597.1" r="4.5" fill="#4b4bc5" stroke="#000" stroke-width="1.6" fill-opacity="0.8" stroke-opacity="0.85"/>
<circle cx="1326.1" cy="562.6" r="4.5" fill="#7272c5" stroke="#000" stroke-width="1.6" fill-opacity="0.8" stroke-opacity="0.85"/>
<circle cx="1353.8" cy="529.1" r="4.5" fill="#9191c5" stroke="#000" stroke-width="1.6" fill-opacity="0.8" stroke-opacity="0.85"/>
<circle cx="1381.2" cy="497.8" r="4.5" fill="#acacc5" stroke="#000" stroke-width="1.6" fill-opacity="0.8" stroke-opacity="0.85"/>
<circle cx="1329.0" cy="465.6" r="4.5" fill="#00c5c5" stroke="#000" stroke-width="1.6" fill-opacity="0.8" stroke-opacity="0.85"/>
<circle cx="1344.9" cy="465.5" r="4.5" fill="#4bc5c5" stroke="#000" stroke-width="1.6" fill-opacity="0.8" stroke-opacity="0.85"/>
<circle cx="1361.1" cy="464.1" r="4.5" fill="#72c5c5" stroke="#000" stroke-width="1.6" fill-opacity="0.8" stroke-opacity="0.85"/>
<circle cx="1378.4" cy="464.1" r="4.5" fill="#91c5c5" stroke="#000" stroke-width="1.6" fill-opacity="0.8" stroke-opacity="0.85"/>
<circle cx="1392.7" cy="463.7" r="4.5" fill="#acc5c5" stroke="#000" stroke-width="1.6" fill-opacity="0.8" stroke-opacity="0.85"/>
<circle cx="1410.5" cy="485.9" r="4.5" fill="#c5acc5" stroke="#000" stroke-width="1.6" fill-opacity="0.8" stroke-opacity="0.85"/>
<circle cx="1413.1" cy="507.5" r="4.5" fill="#c591c5" stroke="#000" stroke-width="1.6" fill-opacity="0.8" stroke-opacity="0.85"/>
<circle cx="1414.5" cy="526.3" r="4.5" fill="#c572c5" stroke="#000" stroke-width="1.6" fill-opacity="0.8" stroke-opacity="0.85"/>
<circle cx="1417.5" cy="548.3" r="4.5" fill="#c54bc5" stroke="#000" stroke-width="1.6" fill-opacity="0.8" stroke-opacity="0.85"/>
<circle cx="1419.0" cy="568.3" r="4.5" fill="#c500c5" stroke="#000" stroke-width="1.6" fill-opacity="0.8" stroke-opacity="0.85"/>
<circle cx="1495.8" cy="358.1" r="4.5" fill="#c5c500" stroke="#000" stroke-width="1.6" fill-opacity="0.8" stroke-opacity="0.85"/>
<circle cx="1478.2" cy="378.5" r="4.5" fill="#c5c54b" stroke="#000" stroke-width="1.6" fill-opacity="0.8" stroke-opacity="0.85"/>
<circle cx="1462.3" cy="398.7" r="4.5" fill="#c5c572" stroke="#000" stroke-width="1.6" fill-opacity="0.8" stroke-opacity="0.85"/>
<circle cx="1443.7" cy="420.7" r="4.5" fill="#c5c591" stroke="#000" stroke-width="1.6" fill-opacity="0.8" stroke-opacity="0.85"/>
<circle cx="1426.6" cy="442.1" r="4.5" fill="#c5c5ac" stroke="#000" stroke-width="1.6" fill-opacity="0.8" stroke-opacity="0.85"/>
<circle cx="1407.3" cy="464.0" r="5.0" fill="#fff" stroke="#101010" stroke-width="1.2"/>
<path d="M1602.5 154.3 L1835.3 154.3 L1835.3 330.0 L1602.5 174.6Z" fill="#000" fill-opacity="0.40"/>
<rect x="1602.5" y="154.3" width="232.8" height="195.7" fill="none" stroke="#a8a8a8" stroke-width="1.4"/>
<rect x="1711.4" y="244.7" width="15.0" height="15.0" fill="#fff" stroke="#fff" stroke-width="1.6" fill-opacity="0.10" stroke-opacity="0.9"/>
<circle cx="1721.7" cy="272.1" r="4.6" fill="#a8a830" stroke="#101010" stroke-width="1.2" fill-opacity="0.8"/>
</svg>
</body></html>
